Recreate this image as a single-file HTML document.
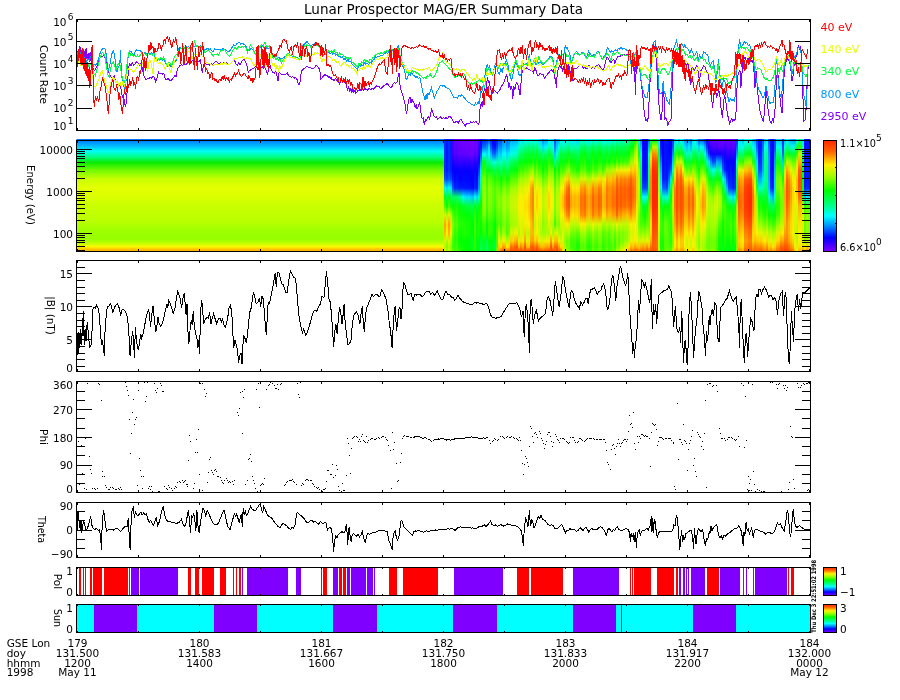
<!DOCTYPE html><html><head><meta charset="utf-8"><title>Lunar Prospector MAG/ER Summary Data</title>
<style>html,body{margin:0;padding:0;background:#fff}svg{display:block;will-change:transform}text{font-family:"DejaVu Sans","Liberation Sans",sans-serif}</style></head><body>
<svg width="900" height="700" viewBox="0 0 900 700">
<rect width="900" height="700" fill="#fff"/>
<defs>
<linearGradient id="gl" x1="0" y1="0" x2="0" y2="1">
<stop offset="0.0000" stop-color="#006eff"/>
<stop offset="0.0089" stop-color="#0078ff"/>
<stop offset="0.0649" stop-color="#00beff"/>
<stop offset="0.1102" stop-color="#00fff0"/>
<stop offset="0.1564" stop-color="#00ff8c"/>
<stop offset="0.2098" stop-color="#0aeb00"/>
<stop offset="0.2782" stop-color="#73fa00"/>
<stop offset="0.3547" stop-color="#c8ff00"/>
<stop offset="0.4311" stop-color="#e4ff00"/>
<stop offset="0.5067" stop-color="#dcff00"/>
<stop offset="0.5831" stop-color="#cbff00"/>
<stop offset="0.6578" stop-color="#c3ff00"/>
<stop offset="0.7360" stop-color="#b9ff00"/>
<stop offset="0.8089" stop-color="#a0ff00"/>
<stop offset="0.8889" stop-color="#96ff00"/>
<stop offset="0.9244" stop-color="#beff00"/>
<stop offset="0.9564" stop-color="#fafa00"/>
<stop offset="0.9778" stop-color="#ffc800"/>
<stop offset="0.9956" stop-color="#ffaf00"/>
</linearGradient>
<linearGradient id="cb" x1="0" y1="0" x2="0" y2="1">
<stop offset="0.000" stop-color="#ff2800"/>
<stop offset="0.100" stop-color="#ff6400"/>
<stop offset="0.220" stop-color="#fff000"/>
<stop offset="0.330" stop-color="#96ff00"/>
<stop offset="0.450" stop-color="#00ff00"/>
<stop offset="0.580" stop-color="#00ff82"/>
<stop offset="0.680" stop-color="#00ffff"/>
<stop offset="0.780" stop-color="#0082ff"/>
<stop offset="0.875" stop-color="#0000ff"/>
<stop offset="1.000" stop-color="#8200ff"/>
</linearGradient>
<linearGradient id="s0" x1="0" y1="0" x2="0" y2="1">
<stop offset="0.013" stop-color="#002cff"/>
<stop offset="0.071" stop-color="#002cff"/>
<stop offset="0.133" stop-color="#002cff"/>
<stop offset="0.204" stop-color="#002cff"/>
<stop offset="0.276" stop-color="#002cff"/>
<stop offset="0.356" stop-color="#0055ff"/>
<stop offset="0.436" stop-color="#00ffe1"/>
<stop offset="0.516" stop-color="#00ff1a"/>
<stop offset="0.596" stop-color="#44ff00"/>
<stop offset="0.676" stop-color="#ddf500"/>
<stop offset="0.756" stop-color="#ffa500"/>
<stop offset="0.836" stop-color="#ffbd00"/>
<stop offset="0.907" stop-color="#ddf500"/>
<stop offset="0.960" stop-color="#b7fa00"/>
<stop offset="0.996" stop-color="#caf800"/>
</linearGradient>
<linearGradient id="s1" x1="0" y1="0" x2="0" y2="1">
<stop offset="0.013" stop-color="#0018ff"/>
<stop offset="0.071" stop-color="#0018ff"/>
<stop offset="0.133" stop-color="#0018ff"/>
<stop offset="0.204" stop-color="#0018ff"/>
<stop offset="0.276" stop-color="#0018ff"/>
<stop offset="0.356" stop-color="#0041ff"/>
<stop offset="0.436" stop-color="#00dfff"/>
<stop offset="0.516" stop-color="#00ff4c"/>
<stop offset="0.596" stop-color="#06ff00"/>
<stop offset="0.676" stop-color="#adfc00"/>
<stop offset="0.756" stop-color="#ffdf00"/>
<stop offset="0.836" stop-color="#faf100"/>
<stop offset="0.907" stop-color="#adfc00"/>
<stop offset="0.960" stop-color="#83ff00"/>
<stop offset="0.996" stop-color="#9afe00"/>
</linearGradient>
<linearGradient id="s2" x1="0" y1="0" x2="0" y2="1">
<stop offset="0.013" stop-color="#002fff"/>
<stop offset="0.071" stop-color="#002fff"/>
<stop offset="0.133" stop-color="#002fff"/>
<stop offset="0.204" stop-color="#002fff"/>
<stop offset="0.276" stop-color="#002fff"/>
<stop offset="0.356" stop-color="#0058ff"/>
<stop offset="0.436" stop-color="#00ffd7"/>
<stop offset="0.516" stop-color="#00ff12"/>
<stop offset="0.596" stop-color="#4dff00"/>
<stop offset="0.676" stop-color="#e4f400"/>
<stop offset="0.756" stop-color="#ff9c00"/>
<stop offset="0.836" stop-color="#ffb300"/>
<stop offset="0.907" stop-color="#e4f400"/>
<stop offset="0.960" stop-color="#bef900"/>
<stop offset="0.996" stop-color="#d1f700"/>
</linearGradient>
<linearGradient id="s3" x1="0" y1="0" x2="0" y2="1">
<stop offset="0.013" stop-color="#001bff"/>
<stop offset="0.071" stop-color="#001bff"/>
<stop offset="0.133" stop-color="#001bff"/>
<stop offset="0.204" stop-color="#001bff"/>
<stop offset="0.276" stop-color="#001bff"/>
<stop offset="0.356" stop-color="#0044ff"/>
<stop offset="0.436" stop-color="#00e8ff"/>
<stop offset="0.516" stop-color="#00ff44"/>
<stop offset="0.596" stop-color="#0fff00"/>
<stop offset="0.676" stop-color="#b4fb00"/>
<stop offset="0.756" stop-color="#ffd700"/>
<stop offset="0.836" stop-color="#ffee00"/>
<stop offset="0.907" stop-color="#b4fb00"/>
<stop offset="0.960" stop-color="#8cff00"/>
<stop offset="0.996" stop-color="#a1fd00"/>
</linearGradient>
<linearGradient id="s4" x1="0" y1="0" x2="0" y2="1">
<stop offset="0.013" stop-color="#3f00ff"/>
<stop offset="0.071" stop-color="#3f00ff"/>
<stop offset="0.133" stop-color="#3800ff"/>
<stop offset="0.204" stop-color="#1c00ff"/>
<stop offset="0.276" stop-color="#0100ff"/>
<stop offset="0.356" stop-color="#0016ff"/>
<stop offset="0.436" stop-color="#0056ff"/>
<stop offset="0.516" stop-color="#00ff66"/>
<stop offset="0.596" stop-color="#00ff08"/>
<stop offset="0.676" stop-color="#49ff00"/>
<stop offset="0.756" stop-color="#83ff00"/>
<stop offset="0.836" stop-color="#6aff00"/>
<stop offset="0.907" stop-color="#40ff00"/>
<stop offset="0.960" stop-color="#38ff00"/>
<stop offset="0.996" stop-color="#51ff00"/>
</linearGradient>
<linearGradient id="s5" x1="0" y1="0" x2="0" y2="1">
<stop offset="0.013" stop-color="#6000ff"/>
<stop offset="0.071" stop-color="#6000ff"/>
<stop offset="0.133" stop-color="#5600ff"/>
<stop offset="0.204" stop-color="#2c00ff"/>
<stop offset="0.276" stop-color="#0300ff"/>
<stop offset="0.356" stop-color="#000aff"/>
<stop offset="0.436" stop-color="#0026ff"/>
<stop offset="0.516" stop-color="#00ff60"/>
<stop offset="0.596" stop-color="#0bff00"/>
<stop offset="0.676" stop-color="#30ff00"/>
<stop offset="0.756" stop-color="#49ff00"/>
<stop offset="0.836" stop-color="#30ff00"/>
<stop offset="0.907" stop-color="#24ff00"/>
<stop offset="0.960" stop-color="#30ff00"/>
<stop offset="0.996" stop-color="#49ff00"/>
</linearGradient>
<linearGradient id="s6" x1="0" y1="0" x2="0" y2="1">
<stop offset="0.013" stop-color="#5c00ff"/>
<stop offset="0.071" stop-color="#5c00ff"/>
<stop offset="0.133" stop-color="#5200ff"/>
<stop offset="0.204" stop-color="#2800ff"/>
<stop offset="0.276" stop-color="#0002ff"/>
<stop offset="0.356" stop-color="#000fff"/>
<stop offset="0.436" stop-color="#002bff"/>
<stop offset="0.516" stop-color="#00ff5c"/>
<stop offset="0.596" stop-color="#1aff00"/>
<stop offset="0.676" stop-color="#3fff00"/>
<stop offset="0.756" stop-color="#58ff00"/>
<stop offset="0.836" stop-color="#3fff00"/>
<stop offset="0.907" stop-color="#33ff00"/>
<stop offset="0.960" stop-color="#3fff00"/>
<stop offset="0.996" stop-color="#58ff00"/>
</linearGradient>
<linearGradient id="s7" x1="0" y1="0" x2="0" y2="1">
<stop offset="0.013" stop-color="#6700ff"/>
<stop offset="0.071" stop-color="#6700ff"/>
<stop offset="0.133" stop-color="#5c00ff"/>
<stop offset="0.204" stop-color="#3300ff"/>
<stop offset="0.276" stop-color="#0900ff"/>
<stop offset="0.356" stop-color="#0002ff"/>
<stop offset="0.436" stop-color="#001dff"/>
<stop offset="0.516" stop-color="#00ff87"/>
<stop offset="0.596" stop-color="#00ff0c"/>
<stop offset="0.676" stop-color="#16ff00"/>
<stop offset="0.756" stop-color="#2fff00"/>
<stop offset="0.836" stop-color="#16ff00"/>
<stop offset="0.907" stop-color="#0aff00"/>
<stop offset="0.960" stop-color="#16ff00"/>
<stop offset="0.996" stop-color="#2fff00"/>
</linearGradient>
<linearGradient id="s8" x1="0" y1="0" x2="0" y2="1">
<stop offset="0.013" stop-color="#6900ff"/>
<stop offset="0.071" stop-color="#6900ff"/>
<stop offset="0.133" stop-color="#5e00ff"/>
<stop offset="0.204" stop-color="#3500ff"/>
<stop offset="0.276" stop-color="#0b00ff"/>
<stop offset="0.356" stop-color="#0100ff"/>
<stop offset="0.436" stop-color="#001aff"/>
<stop offset="0.516" stop-color="#00ff9a"/>
<stop offset="0.596" stop-color="#00ff13"/>
<stop offset="0.676" stop-color="#0eff00"/>
<stop offset="0.756" stop-color="#27ff00"/>
<stop offset="0.836" stop-color="#0eff00"/>
<stop offset="0.907" stop-color="#01ff00"/>
<stop offset="0.960" stop-color="#0eff00"/>
<stop offset="0.996" stop-color="#27ff00"/>
</linearGradient>
<linearGradient id="s9" x1="0" y1="0" x2="0" y2="1">
<stop offset="0.013" stop-color="#6b00ff"/>
<stop offset="0.071" stop-color="#6b00ff"/>
<stop offset="0.133" stop-color="#6000ff"/>
<stop offset="0.204" stop-color="#3000ff"/>
<stop offset="0.276" stop-color="#0600ff"/>
<stop offset="0.356" stop-color="#0006ff"/>
<stop offset="0.436" stop-color="#0018ff"/>
<stop offset="0.516" stop-color="#00ffe9"/>
<stop offset="0.596" stop-color="#00ff24"/>
<stop offset="0.676" stop-color="#09ff00"/>
<stop offset="0.756" stop-color="#22ff00"/>
<stop offset="0.836" stop-color="#1aff00"/>
<stop offset="0.907" stop-color="#05ff00"/>
<stop offset="0.960" stop-color="#09ff00"/>
<stop offset="0.996" stop-color="#12ff00"/>
</linearGradient>
<linearGradient id="s10" x1="0" y1="0" x2="0" y2="1">
<stop offset="0.013" stop-color="#6c00ff"/>
<stop offset="0.071" stop-color="#6c00ff"/>
<stop offset="0.133" stop-color="#6100ff"/>
<stop offset="0.204" stop-color="#2d00ff"/>
<stop offset="0.276" stop-color="#0400ff"/>
<stop offset="0.356" stop-color="#0009ff"/>
<stop offset="0.436" stop-color="#0017ff"/>
<stop offset="0.516" stop-color="#00ecff"/>
<stop offset="0.596" stop-color="#00ff2d"/>
<stop offset="0.676" stop-color="#06ff00"/>
<stop offset="0.756" stop-color="#1fff00"/>
<stop offset="0.836" stop-color="#1fff00"/>
<stop offset="0.907" stop-color="#06ff00"/>
<stop offset="0.960" stop-color="#06ff00"/>
<stop offset="0.996" stop-color="#06ff00"/>
</linearGradient>
<linearGradient id="s11" x1="0" y1="0" x2="0" y2="1">
<stop offset="0.013" stop-color="#6e00ff"/>
<stop offset="0.071" stop-color="#6e00ff"/>
<stop offset="0.133" stop-color="#6400ff"/>
<stop offset="0.204" stop-color="#3000ff"/>
<stop offset="0.276" stop-color="#0600ff"/>
<stop offset="0.356" stop-color="#0005ff"/>
<stop offset="0.436" stop-color="#0013ff"/>
<stop offset="0.516" stop-color="#00e2ff"/>
<stop offset="0.596" stop-color="#00ff35"/>
<stop offset="0.676" stop-color="#00ff03"/>
<stop offset="0.756" stop-color="#15ff00"/>
<stop offset="0.836" stop-color="#15ff00"/>
<stop offset="0.907" stop-color="#00ff03"/>
<stop offset="0.960" stop-color="#00ff03"/>
<stop offset="0.996" stop-color="#00ff03"/>
</linearGradient>
<linearGradient id="s12" x1="0" y1="0" x2="0" y2="1">
<stop offset="0.013" stop-color="#6e00ff"/>
<stop offset="0.071" stop-color="#6e00ff"/>
<stop offset="0.133" stop-color="#6300ff"/>
<stop offset="0.204" stop-color="#2f00ff"/>
<stop offset="0.276" stop-color="#0600ff"/>
<stop offset="0.356" stop-color="#0006ff"/>
<stop offset="0.436" stop-color="#0014ff"/>
<stop offset="0.516" stop-color="#00e4ff"/>
<stop offset="0.596" stop-color="#00ff34"/>
<stop offset="0.676" stop-color="#00ff02"/>
<stop offset="0.756" stop-color="#17ff00"/>
<stop offset="0.836" stop-color="#17ff00"/>
<stop offset="0.907" stop-color="#00ff02"/>
<stop offset="0.960" stop-color="#00ff02"/>
<stop offset="0.996" stop-color="#00ff02"/>
</linearGradient>
<linearGradient id="s13" x1="0" y1="0" x2="0" y2="1">
<stop offset="0.013" stop-color="#7200ff"/>
<stop offset="0.071" stop-color="#7200ff"/>
<stop offset="0.133" stop-color="#6800ff"/>
<stop offset="0.204" stop-color="#3400ff"/>
<stop offset="0.276" stop-color="#0a00ff"/>
<stop offset="0.356" stop-color="#0000ff"/>
<stop offset="0.436" stop-color="#000eff"/>
<stop offset="0.516" stop-color="#00d1ff"/>
<stop offset="0.596" stop-color="#00ff43"/>
<stop offset="0.676" stop-color="#00ff11"/>
<stop offset="0.756" stop-color="#04ff00"/>
<stop offset="0.836" stop-color="#04ff00"/>
<stop offset="0.907" stop-color="#00ff11"/>
<stop offset="0.960" stop-color="#00ff11"/>
<stop offset="0.996" stop-color="#00ff11"/>
</linearGradient>
<linearGradient id="s14" x1="0" y1="0" x2="0" y2="1">
<stop offset="0.013" stop-color="#7600ff"/>
<stop offset="0.071" stop-color="#7600ff"/>
<stop offset="0.133" stop-color="#6b00ff"/>
<stop offset="0.204" stop-color="#3700ff"/>
<stop offset="0.276" stop-color="#0e00ff"/>
<stop offset="0.356" stop-color="#0300ff"/>
<stop offset="0.436" stop-color="#0009ff"/>
<stop offset="0.516" stop-color="#00c4ff"/>
<stop offset="0.596" stop-color="#00ff4e"/>
<stop offset="0.676" stop-color="#00ff1c"/>
<stop offset="0.756" stop-color="#00ff08"/>
<stop offset="0.836" stop-color="#00ff08"/>
<stop offset="0.907" stop-color="#00ff1c"/>
<stop offset="0.960" stop-color="#00ff1c"/>
<stop offset="0.996" stop-color="#00ff1c"/>
</linearGradient>
<linearGradient id="s15" x1="0" y1="0" x2="0" y2="1">
<stop offset="0.013" stop-color="#6300ff"/>
<stop offset="0.071" stop-color="#6300ff"/>
<stop offset="0.133" stop-color="#5900ff"/>
<stop offset="0.204" stop-color="#2500ff"/>
<stop offset="0.276" stop-color="#0007ff"/>
<stop offset="0.356" stop-color="#0014ff"/>
<stop offset="0.436" stop-color="#0022ff"/>
<stop offset="0.516" stop-color="#00ffef"/>
<stop offset="0.596" stop-color="#00ff11"/>
<stop offset="0.676" stop-color="#29ff00"/>
<stop offset="0.756" stop-color="#42ff00"/>
<stop offset="0.836" stop-color="#42ff00"/>
<stop offset="0.907" stop-color="#29ff00"/>
<stop offset="0.960" stop-color="#29ff00"/>
<stop offset="0.996" stop-color="#29ff00"/>
</linearGradient>
<linearGradient id="s16" x1="0" y1="0" x2="0" y2="1">
<stop offset="0.013" stop-color="#7000ff"/>
<stop offset="0.071" stop-color="#7000ff"/>
<stop offset="0.133" stop-color="#6600ff"/>
<stop offset="0.204" stop-color="#3200ff"/>
<stop offset="0.276" stop-color="#0800ff"/>
<stop offset="0.356" stop-color="#0003ff"/>
<stop offset="0.436" stop-color="#0011ff"/>
<stop offset="0.516" stop-color="#00daff"/>
<stop offset="0.596" stop-color="#00ff3c"/>
<stop offset="0.676" stop-color="#00ff0a"/>
<stop offset="0.756" stop-color="#0dff00"/>
<stop offset="0.836" stop-color="#0dff00"/>
<stop offset="0.907" stop-color="#00ff0a"/>
<stop offset="0.960" stop-color="#00ff0a"/>
<stop offset="0.996" stop-color="#00ff0a"/>
</linearGradient>
<linearGradient id="s17" x1="0" y1="0" x2="0" y2="1">
<stop offset="0.013" stop-color="#4300ff"/>
<stop offset="0.071" stop-color="#3900ff"/>
<stop offset="0.133" stop-color="#2e00ff"/>
<stop offset="0.204" stop-color="#0a00ff"/>
<stop offset="0.276" stop-color="#0031ff"/>
<stop offset="0.356" stop-color="#007dff"/>
<stop offset="0.436" stop-color="#0097ff"/>
<stop offset="0.516" stop-color="#00ffcb"/>
<stop offset="0.596" stop-color="#00ff17"/>
<stop offset="0.676" stop-color="#15ff00"/>
<stop offset="0.756" stop-color="#21ff00"/>
<stop offset="0.836" stop-color="#15ff00"/>
<stop offset="0.907" stop-color="#00ff0d"/>
<stop offset="0.960" stop-color="#00ff17"/>
<stop offset="0.996" stop-color="#00ff17"/>
</linearGradient>
<linearGradient id="s18" x1="0" y1="0" x2="0" y2="1">
<stop offset="0.013" stop-color="#1000ff"/>
<stop offset="0.071" stop-color="#0014ff"/>
<stop offset="0.133" stop-color="#004bff"/>
<stop offset="0.204" stop-color="#00a0ff"/>
<stop offset="0.276" stop-color="#00e3ff"/>
<stop offset="0.356" stop-color="#00ffaf"/>
<stop offset="0.436" stop-color="#00ff8d"/>
<stop offset="0.516" stop-color="#00ff4f"/>
<stop offset="0.596" stop-color="#0aff00"/>
<stop offset="0.676" stop-color="#1aff00"/>
<stop offset="0.756" stop-color="#0aff00"/>
<stop offset="0.836" stop-color="#00ff0c"/>
<stop offset="0.907" stop-color="#00ff3b"/>
<stop offset="0.960" stop-color="#00ff4f"/>
<stop offset="0.996" stop-color="#00ff4f"/>
</linearGradient>
<linearGradient id="s19" x1="0" y1="0" x2="0" y2="1">
<stop offset="0.013" stop-color="#0027ff"/>
<stop offset="0.071" stop-color="#006cff"/>
<stop offset="0.133" stop-color="#00f5ff"/>
<stop offset="0.204" stop-color="#00ff26"/>
<stop offset="0.276" stop-color="#1cff00"/>
<stop offset="0.356" stop-color="#67ff00"/>
<stop offset="0.436" stop-color="#80ff00"/>
<stop offset="0.516" stop-color="#80ff00"/>
<stop offset="0.596" stop-color="#80ff00"/>
<stop offset="0.676" stop-color="#67ff00"/>
<stop offset="0.756" stop-color="#35ff00"/>
<stop offset="0.836" stop-color="#1cff00"/>
<stop offset="0.907" stop-color="#00ff26"/>
<stop offset="0.960" stop-color="#00ff3a"/>
<stop offset="0.996" stop-color="#00ff3a"/>
</linearGradient>
<linearGradient id="s20" x1="0" y1="0" x2="0" y2="1">
<stop offset="0.013" stop-color="#002eff"/>
<stop offset="0.071" stop-color="#0072ff"/>
<stop offset="0.133" stop-color="#00fff5"/>
<stop offset="0.204" stop-color="#00ff16"/>
<stop offset="0.276" stop-color="#30ff00"/>
<stop offset="0.356" stop-color="#7bff00"/>
<stop offset="0.436" stop-color="#94ff00"/>
<stop offset="0.516" stop-color="#94ff00"/>
<stop offset="0.596" stop-color="#94ff00"/>
<stop offset="0.676" stop-color="#7bff00"/>
<stop offset="0.756" stop-color="#49ff00"/>
<stop offset="0.836" stop-color="#30ff00"/>
<stop offset="0.907" stop-color="#00ff16"/>
<stop offset="0.960" stop-color="#00ff2a"/>
<stop offset="0.996" stop-color="#00ff2a"/>
</linearGradient>
<linearGradient id="s21" x1="0" y1="0" x2="0" y2="1">
<stop offset="0.013" stop-color="#003bff"/>
<stop offset="0.071" stop-color="#008aff"/>
<stop offset="0.133" stop-color="#00dbff"/>
<stop offset="0.204" stop-color="#00ff7b"/>
<stop offset="0.276" stop-color="#00ff26"/>
<stop offset="0.356" stop-color="#2eff00"/>
<stop offset="0.436" stop-color="#4dff00"/>
<stop offset="0.516" stop-color="#4dff00"/>
<stop offset="0.596" stop-color="#47ff00"/>
<stop offset="0.676" stop-color="#2eff00"/>
<stop offset="0.756" stop-color="#00ff03"/>
<stop offset="0.836" stop-color="#00ff0d"/>
<stop offset="0.907" stop-color="#00ff49"/>
<stop offset="0.960" stop-color="#00ff5d"/>
<stop offset="0.996" stop-color="#00ff5d"/>
</linearGradient>
<linearGradient id="s22" x1="0" y1="0" x2="0" y2="1">
<stop offset="0.013" stop-color="#0058ff"/>
<stop offset="0.071" stop-color="#00dcff"/>
<stop offset="0.133" stop-color="#00fff3"/>
<stop offset="0.204" stop-color="#00ff83"/>
<stop offset="0.276" stop-color="#00ff0f"/>
<stop offset="0.356" stop-color="#60ff00"/>
<stop offset="0.436" stop-color="#89ff00"/>
<stop offset="0.516" stop-color="#89ff00"/>
<stop offset="0.596" stop-color="#7cff00"/>
<stop offset="0.676" stop-color="#63ff00"/>
<stop offset="0.756" stop-color="#35ff00"/>
<stop offset="0.836" stop-color="#35ff00"/>
<stop offset="0.907" stop-color="#00ff0d"/>
<stop offset="0.960" stop-color="#00ff21"/>
<stop offset="0.996" stop-color="#00ff21"/>
</linearGradient>
<linearGradient id="s23" x1="0" y1="0" x2="0" y2="1">
<stop offset="0.013" stop-color="#0021ff"/>
<stop offset="0.071" stop-color="#0057ff"/>
<stop offset="0.133" stop-color="#00b7ff"/>
<stop offset="0.204" stop-color="#00ffa5"/>
<stop offset="0.276" stop-color="#00ff21"/>
<stop offset="0.356" stop-color="#51ff00"/>
<stop offset="0.436" stop-color="#80ff00"/>
<stop offset="0.516" stop-color="#80ff00"/>
<stop offset="0.596" stop-color="#73ff00"/>
<stop offset="0.676" stop-color="#5aff00"/>
<stop offset="0.756" stop-color="#32ff00"/>
<stop offset="0.836" stop-color="#32ff00"/>
<stop offset="0.907" stop-color="#00ff05"/>
<stop offset="0.960" stop-color="#00ff19"/>
<stop offset="0.996" stop-color="#00ff19"/>
</linearGradient>
<linearGradient id="s24" x1="0" y1="0" x2="0" y2="1">
<stop offset="0.013" stop-color="#0100ff"/>
<stop offset="0.071" stop-color="#001bff"/>
<stop offset="0.133" stop-color="#006dff"/>
<stop offset="0.204" stop-color="#00ffc7"/>
<stop offset="0.276" stop-color="#00ff37"/>
<stop offset="0.356" stop-color="#38ff00"/>
<stop offset="0.436" stop-color="#6aff00"/>
<stop offset="0.516" stop-color="#6aff00"/>
<stop offset="0.596" stop-color="#5eff00"/>
<stop offset="0.676" stop-color="#45ff00"/>
<stop offset="0.756" stop-color="#1fff00"/>
<stop offset="0.836" stop-color="#1fff00"/>
<stop offset="0.907" stop-color="#00ff0f"/>
<stop offset="0.960" stop-color="#00ff23"/>
<stop offset="0.996" stop-color="#00ff1e"/>
</linearGradient>
<linearGradient id="s25" x1="0" y1="0" x2="0" y2="1">
<stop offset="0.013" stop-color="#0800ff"/>
<stop offset="0.071" stop-color="#0011ff"/>
<stop offset="0.133" stop-color="#0063ff"/>
<stop offset="0.204" stop-color="#00ffe4"/>
<stop offset="0.276" stop-color="#00ff4f"/>
<stop offset="0.356" stop-color="#1bff00"/>
<stop offset="0.436" stop-color="#4dff00"/>
<stop offset="0.516" stop-color="#4dff00"/>
<stop offset="0.596" stop-color="#40ff00"/>
<stop offset="0.676" stop-color="#27ff00"/>
<stop offset="0.756" stop-color="#02ff00"/>
<stop offset="0.836" stop-color="#02ff00"/>
<stop offset="0.907" stop-color="#00ff27"/>
<stop offset="0.960" stop-color="#00ff3b"/>
<stop offset="0.996" stop-color="#00ff2c"/>
</linearGradient>
<linearGradient id="s26" x1="0" y1="0" x2="0" y2="1">
<stop offset="0.013" stop-color="#001cff"/>
<stop offset="0.071" stop-color="#0041ff"/>
<stop offset="0.133" stop-color="#009eff"/>
<stop offset="0.204" stop-color="#00ffba"/>
<stop offset="0.276" stop-color="#00ff35"/>
<stop offset="0.356" stop-color="#35ff00"/>
<stop offset="0.436" stop-color="#6dff00"/>
<stop offset="0.516" stop-color="#7aff00"/>
<stop offset="0.596" stop-color="#70ff00"/>
<stop offset="0.676" stop-color="#57ff00"/>
<stop offset="0.756" stop-color="#35ff00"/>
<stop offset="0.836" stop-color="#4eff00"/>
<stop offset="0.907" stop-color="#45ff00"/>
<stop offset="0.960" stop-color="#4bff00"/>
<stop offset="0.996" stop-color="#70ff00"/>
</linearGradient>
<linearGradient id="s27" x1="0" y1="0" x2="0" y2="1">
<stop offset="0.013" stop-color="#0050ff"/>
<stop offset="0.071" stop-color="#0092ff"/>
<stop offset="0.133" stop-color="#00d4ff"/>
<stop offset="0.204" stop-color="#00ffb0"/>
<stop offset="0.276" stop-color="#00ff3c"/>
<stop offset="0.356" stop-color="#20ff00"/>
<stop offset="0.436" stop-color="#64ff00"/>
<stop offset="0.516" stop-color="#8aff00"/>
<stop offset="0.596" stop-color="#87ff00"/>
<stop offset="0.676" stop-color="#6eff00"/>
<stop offset="0.756" stop-color="#52ff00"/>
<stop offset="0.836" stop-color="#b6fa00"/>
<stop offset="0.907" stop-color="#edf300"/>
<stop offset="0.960" stop-color="#ffc600"/>
<stop offset="0.996" stop-color="#ffac00"/>
</linearGradient>
<linearGradient id="s28" x1="0" y1="0" x2="0" y2="1">
<stop offset="0.013" stop-color="#004aff"/>
<stop offset="0.071" stop-color="#008aff"/>
<stop offset="0.133" stop-color="#00c9ff"/>
<stop offset="0.204" stop-color="#00ffd0"/>
<stop offset="0.276" stop-color="#00ff5d"/>
<stop offset="0.356" stop-color="#00ff0c"/>
<stop offset="0.436" stop-color="#3cff00"/>
<stop offset="0.516" stop-color="#6eff00"/>
<stop offset="0.596" stop-color="#6eff00"/>
<stop offset="0.676" stop-color="#55ff00"/>
<stop offset="0.756" stop-color="#3cff00"/>
<stop offset="0.836" stop-color="#59ff00"/>
<stop offset="0.907" stop-color="#bdf900"/>
<stop offset="0.960" stop-color="#ffe300"/>
<stop offset="0.996" stop-color="#ff6200"/>
</linearGradient>
<linearGradient id="s29" x1="0" y1="0" x2="0" y2="1">
<stop offset="0.013" stop-color="#0085ff"/>
<stop offset="0.071" stop-color="#00baff"/>
<stop offset="0.133" stop-color="#00f8ff"/>
<stop offset="0.204" stop-color="#00ff9d"/>
<stop offset="0.276" stop-color="#00ff37"/>
<stop offset="0.356" stop-color="#23ff00"/>
<stop offset="0.436" stop-color="#6eff00"/>
<stop offset="0.516" stop-color="#9efe00"/>
<stop offset="0.596" stop-color="#9efe00"/>
<stop offset="0.676" stop-color="#87ff00"/>
<stop offset="0.756" stop-color="#6eff00"/>
<stop offset="0.836" stop-color="#a1fd00"/>
<stop offset="0.907" stop-color="#f7f100"/>
<stop offset="0.960" stop-color="#ff9c00"/>
<stop offset="0.996" stop-color="#ff5000"/>
</linearGradient>
<linearGradient id="s30" x1="0" y1="0" x2="0" y2="1">
<stop offset="0.013" stop-color="#0093ff"/>
<stop offset="0.071" stop-color="#00c2ff"/>
<stop offset="0.133" stop-color="#00fffd"/>
<stop offset="0.204" stop-color="#00ff91"/>
<stop offset="0.276" stop-color="#00ff31"/>
<stop offset="0.356" stop-color="#2fff00"/>
<stop offset="0.436" stop-color="#7aff00"/>
<stop offset="0.516" stop-color="#a7fd00"/>
<stop offset="0.596" stop-color="#a7fd00"/>
<stop offset="0.676" stop-color="#93ff00"/>
<stop offset="0.756" stop-color="#7aff00"/>
<stop offset="0.836" stop-color="#99ff00"/>
<stop offset="0.907" stop-color="#eff200"/>
<stop offset="0.960" stop-color="#ffa600"/>
<stop offset="0.996" stop-color="#ff5000"/>
</linearGradient>
<linearGradient id="s31" x1="0" y1="0" x2="0" y2="1">
<stop offset="0.013" stop-color="#0074ff"/>
<stop offset="0.071" stop-color="#009eff"/>
<stop offset="0.133" stop-color="#00dcff"/>
<stop offset="0.204" stop-color="#00ffb3"/>
<stop offset="0.276" stop-color="#00ff4e"/>
<stop offset="0.356" stop-color="#0eff00"/>
<stop offset="0.436" stop-color="#59ff00"/>
<stop offset="0.516" stop-color="#8bff00"/>
<stop offset="0.596" stop-color="#8bff00"/>
<stop offset="0.676" stop-color="#72ff00"/>
<stop offset="0.756" stop-color="#59ff00"/>
<stop offset="0.836" stop-color="#4dff00"/>
<stop offset="0.907" stop-color="#b4fb00"/>
<stop offset="0.960" stop-color="#ffee00"/>
<stop offset="0.996" stop-color="#ff6900"/>
</linearGradient>
<linearGradient id="s32" x1="0" y1="0" x2="0" y2="1">
<stop offset="0.013" stop-color="#0083ff"/>
<stop offset="0.071" stop-color="#00abff"/>
<stop offset="0.133" stop-color="#00eaff"/>
<stop offset="0.204" stop-color="#00ff9e"/>
<stop offset="0.276" stop-color="#00ff42"/>
<stop offset="0.356" stop-color="#1dff00"/>
<stop offset="0.436" stop-color="#68ff00"/>
<stop offset="0.516" stop-color="#99ff00"/>
<stop offset="0.596" stop-color="#9afe00"/>
<stop offset="0.676" stop-color="#82ff00"/>
<stop offset="0.756" stop-color="#69ff00"/>
<stop offset="0.836" stop-color="#68ff00"/>
<stop offset="0.907" stop-color="#c6f800"/>
<stop offset="0.960" stop-color="#ffd800"/>
<stop offset="0.996" stop-color="#ff6400"/>
</linearGradient>
<linearGradient id="s33" x1="0" y1="0" x2="0" y2="1">
<stop offset="0.013" stop-color="#00aeff"/>
<stop offset="0.071" stop-color="#00ddff"/>
<stop offset="0.133" stop-color="#00ffe3"/>
<stop offset="0.204" stop-color="#00ff67"/>
<stop offset="0.276" stop-color="#00ff18"/>
<stop offset="0.356" stop-color="#4eff00"/>
<stop offset="0.436" stop-color="#98ff00"/>
<stop offset="0.516" stop-color="#bef900"/>
<stop offset="0.596" stop-color="#c2f900"/>
<stop offset="0.676" stop-color="#affb00"/>
<stop offset="0.756" stop-color="#9cfe00"/>
<stop offset="0.836" stop-color="#d0f700"/>
<stop offset="0.907" stop-color="#ffc900"/>
<stop offset="0.960" stop-color="#ff6c00"/>
<stop offset="0.996" stop-color="#ff4f00"/>
</linearGradient>
<linearGradient id="s34" x1="0" y1="0" x2="0" y2="1">
<stop offset="0.013" stop-color="#00aaff"/>
<stop offset="0.071" stop-color="#00dfff"/>
<stop offset="0.133" stop-color="#00ffe0"/>
<stop offset="0.204" stop-color="#00ff5a"/>
<stop offset="0.276" stop-color="#00ff13"/>
<stop offset="0.356" stop-color="#51ff00"/>
<stop offset="0.436" stop-color="#9afe00"/>
<stop offset="0.516" stop-color="#c1f900"/>
<stop offset="0.596" stop-color="#c6f800"/>
<stop offset="0.676" stop-color="#b3fb00"/>
<stop offset="0.756" stop-color="#a0fe00"/>
<stop offset="0.836" stop-color="#ccf700"/>
<stop offset="0.907" stop-color="#ffd400"/>
<stop offset="0.960" stop-color="#ff7700"/>
<stop offset="0.996" stop-color="#ff5100"/>
</linearGradient>
<linearGradient id="s35" x1="0" y1="0" x2="0" y2="1">
<stop offset="0.013" stop-color="#00acff"/>
<stop offset="0.071" stop-color="#00e7ff"/>
<stop offset="0.133" stop-color="#00ffd8"/>
<stop offset="0.204" stop-color="#00ff4a"/>
<stop offset="0.276" stop-color="#00ff0a"/>
<stop offset="0.356" stop-color="#59ff00"/>
<stop offset="0.436" stop-color="#a0fe00"/>
<stop offset="0.516" stop-color="#c7f800"/>
<stop offset="0.596" stop-color="#cff700"/>
<stop offset="0.676" stop-color="#bcfa00"/>
<stop offset="0.756" stop-color="#a9fc00"/>
<stop offset="0.836" stop-color="#e8f300"/>
<stop offset="0.907" stop-color="#ffb700"/>
<stop offset="0.960" stop-color="#ff5f00"/>
<stop offset="0.996" stop-color="#ff5000"/>
</linearGradient>
<linearGradient id="s36" x1="0" y1="0" x2="0" y2="1">
<stop offset="0.013" stop-color="#00a5ff"/>
<stop offset="0.071" stop-color="#00eaff"/>
<stop offset="0.133" stop-color="#00ffd1"/>
<stop offset="0.204" stop-color="#00ff49"/>
<stop offset="0.276" stop-color="#00ff0c"/>
<stop offset="0.356" stop-color="#55ff00"/>
<stop offset="0.436" stop-color="#9efe00"/>
<stop offset="0.516" stop-color="#c3f900"/>
<stop offset="0.596" stop-color="#ccf700"/>
<stop offset="0.676" stop-color="#bafa00"/>
<stop offset="0.756" stop-color="#a7fd00"/>
<stop offset="0.836" stop-color="#ffef00"/>
<stop offset="0.907" stop-color="#ffa200"/>
<stop offset="0.960" stop-color="#ff5400"/>
<stop offset="0.996" stop-color="#ff5800"/>
</linearGradient>
<linearGradient id="s37" x1="0" y1="0" x2="0" y2="1">
<stop offset="0.013" stop-color="#00ddff"/>
<stop offset="0.071" stop-color="#00ffd0"/>
<stop offset="0.133" stop-color="#00ff83"/>
<stop offset="0.204" stop-color="#00ff1f"/>
<stop offset="0.276" stop-color="#29ff00"/>
<stop offset="0.356" stop-color="#8dff00"/>
<stop offset="0.436" stop-color="#c8f800"/>
<stop offset="0.516" stop-color="#ebf300"/>
<stop offset="0.596" stop-color="#f4f200"/>
<stop offset="0.676" stop-color="#e5f400"/>
<stop offset="0.756" stop-color="#d2f600"/>
<stop offset="0.836" stop-color="#aafc00"/>
<stop offset="0.907" stop-color="#e2f400"/>
<stop offset="0.960" stop-color="#ffb600"/>
<stop offset="0.996" stop-color="#ff4800"/>
</linearGradient>
<linearGradient id="s38" x1="0" y1="0" x2="0" y2="1">
<stop offset="0.013" stop-color="#00f2ff"/>
<stop offset="0.071" stop-color="#00ffae"/>
<stop offset="0.133" stop-color="#00ff60"/>
<stop offset="0.204" stop-color="#00ff10"/>
<stop offset="0.276" stop-color="#3eff00"/>
<stop offset="0.356" stop-color="#9ffe00"/>
<stop offset="0.436" stop-color="#d9f500"/>
<stop offset="0.516" stop-color="#f9f100"/>
<stop offset="0.596" stop-color="#ffec00"/>
<stop offset="0.676" stop-color="#f5f100"/>
<stop offset="0.756" stop-color="#e2f400"/>
<stop offset="0.836" stop-color="#ddf500"/>
<stop offset="0.907" stop-color="#ffdd00"/>
<stop offset="0.960" stop-color="#ff8000"/>
<stop offset="0.996" stop-color="#ff4800"/>
</linearGradient>
<linearGradient id="s39" x1="0" y1="0" x2="0" y2="1">
<stop offset="0.013" stop-color="#00e6ff"/>
<stop offset="0.071" stop-color="#00ffae"/>
<stop offset="0.133" stop-color="#00ff59"/>
<stop offset="0.204" stop-color="#00ff1d"/>
<stop offset="0.276" stop-color="#32ff00"/>
<stop offset="0.356" stop-color="#96ff00"/>
<stop offset="0.436" stop-color="#cff700"/>
<stop offset="0.516" stop-color="#edf300"/>
<stop offset="0.596" stop-color="#f6f100"/>
<stop offset="0.676" stop-color="#ecf300"/>
<stop offset="0.756" stop-color="#d9f500"/>
<stop offset="0.836" stop-color="#c4f800"/>
<stop offset="0.907" stop-color="#eef200"/>
<stop offset="0.960" stop-color="#ffa700"/>
<stop offset="0.996" stop-color="#ff5900"/>
</linearGradient>
<linearGradient id="s40" x1="0" y1="0" x2="0" y2="1">
<stop offset="0.013" stop-color="#00fff6"/>
<stop offset="0.071" stop-color="#00ff86"/>
<stop offset="0.133" stop-color="#00ff35"/>
<stop offset="0.204" stop-color="#00ff03"/>
<stop offset="0.276" stop-color="#54ff00"/>
<stop offset="0.356" stop-color="#b0fb00"/>
<stop offset="0.436" stop-color="#e9f300"/>
<stop offset="0.516" stop-color="#ffe800"/>
<stop offset="0.596" stop-color="#ffdc00"/>
<stop offset="0.676" stop-color="#ffe800"/>
<stop offset="0.756" stop-color="#f3f200"/>
<stop offset="0.836" stop-color="#ffcd00"/>
<stop offset="0.907" stop-color="#ff9e00"/>
<stop offset="0.960" stop-color="#ff5200"/>
<stop offset="0.996" stop-color="#ff4e00"/>
</linearGradient>
<linearGradient id="s41" x1="0" y1="0" x2="0" y2="1">
<stop offset="0.013" stop-color="#00fffd"/>
<stop offset="0.071" stop-color="#00ff8c"/>
<stop offset="0.133" stop-color="#00ff3a"/>
<stop offset="0.204" stop-color="#00ff08"/>
<stop offset="0.276" stop-color="#4dff00"/>
<stop offset="0.356" stop-color="#abfc00"/>
<stop offset="0.436" stop-color="#e4f400"/>
<stop offset="0.516" stop-color="#ffee00"/>
<stop offset="0.596" stop-color="#ffe200"/>
<stop offset="0.676" stop-color="#ffee00"/>
<stop offset="0.756" stop-color="#eef200"/>
<stop offset="0.836" stop-color="#c0f900"/>
<stop offset="0.907" stop-color="#e6f400"/>
<stop offset="0.960" stop-color="#ffb100"/>
<stop offset="0.996" stop-color="#ff5100"/>
</linearGradient>
<linearGradient id="s42" x1="0" y1="0" x2="0" y2="1">
<stop offset="0.013" stop-color="#00ffe6"/>
<stop offset="0.071" stop-color="#00ff78"/>
<stop offset="0.133" stop-color="#00ff28"/>
<stop offset="0.204" stop-color="#0cff00"/>
<stop offset="0.276" stop-color="#64ff00"/>
<stop offset="0.356" stop-color="#bcfa00"/>
<stop offset="0.436" stop-color="#f5f100"/>
<stop offset="0.516" stop-color="#ffd900"/>
<stop offset="0.596" stop-color="#ffcd00"/>
<stop offset="0.676" stop-color="#ffd900"/>
<stop offset="0.756" stop-color="#fff000"/>
<stop offset="0.836" stop-color="#b6fa00"/>
<stop offset="0.907" stop-color="#dcf500"/>
<stop offset="0.960" stop-color="#ffbe00"/>
<stop offset="0.996" stop-color="#ff4600"/>
</linearGradient>
<linearGradient id="s43" x1="0" y1="0" x2="0" y2="1">
<stop offset="0.013" stop-color="#00fcff"/>
<stop offset="0.071" stop-color="#00ff85"/>
<stop offset="0.133" stop-color="#00ff3e"/>
<stop offset="0.204" stop-color="#00ff02"/>
<stop offset="0.276" stop-color="#7aff00"/>
<stop offset="0.356" stop-color="#f3f200"/>
<stop offset="0.436" stop-color="#ffad00"/>
<stop offset="0.516" stop-color="#ffa100"/>
<stop offset="0.596" stop-color="#ffa100"/>
<stop offset="0.676" stop-color="#ffad00"/>
<stop offset="0.756" stop-color="#ffc400"/>
<stop offset="0.836" stop-color="#ffbb00"/>
<stop offset="0.907" stop-color="#ffa400"/>
<stop offset="0.960" stop-color="#ff5b00"/>
<stop offset="0.996" stop-color="#ff5300"/>
</linearGradient>
<linearGradient id="s44" x1="0" y1="0" x2="0" y2="1">
<stop offset="0.013" stop-color="#00ffe2"/>
<stop offset="0.071" stop-color="#00ff6a"/>
<stop offset="0.133" stop-color="#00ff24"/>
<stop offset="0.204" stop-color="#1dff00"/>
<stop offset="0.276" stop-color="#99ff00"/>
<stop offset="0.356" stop-color="#ffe000"/>
<stop offset="0.436" stop-color="#ff8e00"/>
<stop offset="0.516" stop-color="#ff8300"/>
<stop offset="0.596" stop-color="#ff8300"/>
<stop offset="0.676" stop-color="#ff8e00"/>
<stop offset="0.756" stop-color="#ffa600"/>
<stop offset="0.836" stop-color="#ffb600"/>
<stop offset="0.907" stop-color="#ff9f00"/>
<stop offset="0.960" stop-color="#ff5800"/>
<stop offset="0.996" stop-color="#ff4400"/>
</linearGradient>
<linearGradient id="s45" x1="0" y1="0" x2="0" y2="1">
<stop offset="0.013" stop-color="#00f8ff"/>
<stop offset="0.071" stop-color="#00ff96"/>
<stop offset="0.133" stop-color="#00ff42"/>
<stop offset="0.204" stop-color="#00ff10"/>
<stop offset="0.276" stop-color="#44ff00"/>
<stop offset="0.356" stop-color="#9afe00"/>
<stop offset="0.436" stop-color="#d3f600"/>
<stop offset="0.516" stop-color="#e6f400"/>
<stop offset="0.596" stop-color="#e6f400"/>
<stop offset="0.676" stop-color="#d3f600"/>
<stop offset="0.756" stop-color="#c0f900"/>
<stop offset="0.836" stop-color="#dbf500"/>
<stop offset="0.907" stop-color="#ffd600"/>
<stop offset="0.960" stop-color="#ff7900"/>
<stop offset="0.996" stop-color="#ff5000"/>
</linearGradient>
<linearGradient id="s46" x1="0" y1="0" x2="0" y2="1">
<stop offset="0.013" stop-color="#00ffda"/>
<stop offset="0.071" stop-color="#00ff71"/>
<stop offset="0.133" stop-color="#00ff1c"/>
<stop offset="0.204" stop-color="#22ff00"/>
<stop offset="0.276" stop-color="#73ff00"/>
<stop offset="0.356" stop-color="#c3f900"/>
<stop offset="0.436" stop-color="#ffed00"/>
<stop offset="0.516" stop-color="#ffd300"/>
<stop offset="0.596" stop-color="#ffd300"/>
<stop offset="0.676" stop-color="#ffed00"/>
<stop offset="0.756" stop-color="#ecf300"/>
<stop offset="0.836" stop-color="#f8f100"/>
<stop offset="0.907" stop-color="#ffb800"/>
<stop offset="0.960" stop-color="#ff5f00"/>
<stop offset="0.996" stop-color="#ff3900"/>
</linearGradient>
<linearGradient id="s47" x1="0" y1="0" x2="0" y2="1">
<stop offset="0.013" stop-color="#00e2ff"/>
<stop offset="0.071" stop-color="#00ffb4"/>
<stop offset="0.133" stop-color="#00ff4b"/>
<stop offset="0.204" stop-color="#00ff0a"/>
<stop offset="0.276" stop-color="#38ff00"/>
<stop offset="0.356" stop-color="#9ffe00"/>
<stop offset="0.436" stop-color="#e7f300"/>
<stop offset="0.516" stop-color="#ffee00"/>
<stop offset="0.596" stop-color="#ffee00"/>
<stop offset="0.676" stop-color="#e7f300"/>
<stop offset="0.756" stop-color="#cdf700"/>
<stop offset="0.836" stop-color="#d9f500"/>
<stop offset="0.907" stop-color="#ffea00"/>
<stop offset="0.960" stop-color="#ff8d00"/>
<stop offset="0.996" stop-color="#ff5500"/>
</linearGradient>
<linearGradient id="s48" x1="0" y1="0" x2="0" y2="1">
<stop offset="0.013" stop-color="#00d7ff"/>
<stop offset="0.071" stop-color="#00ffc9"/>
<stop offset="0.133" stop-color="#00ff4a"/>
<stop offset="0.204" stop-color="#04ff00"/>
<stop offset="0.276" stop-color="#3cff00"/>
<stop offset="0.356" stop-color="#9efe00"/>
<stop offset="0.436" stop-color="#e6f400"/>
<stop offset="0.516" stop-color="#ffef00"/>
<stop offset="0.596" stop-color="#ffef00"/>
<stop offset="0.676" stop-color="#e6f400"/>
<stop offset="0.756" stop-color="#cbf700"/>
<stop offset="0.836" stop-color="#b0fb00"/>
<stop offset="0.907" stop-color="#e2f400"/>
<stop offset="0.960" stop-color="#ffb600"/>
<stop offset="0.996" stop-color="#ff5000"/>
</linearGradient>
<linearGradient id="s49" x1="0" y1="0" x2="0" y2="1">
<stop offset="0.013" stop-color="#0088ff"/>
<stop offset="0.071" stop-color="#00d9ff"/>
<stop offset="0.133" stop-color="#00ff7b"/>
<stop offset="0.204" stop-color="#00ff1e"/>
<stop offset="0.276" stop-color="#06ff00"/>
<stop offset="0.356" stop-color="#51ff00"/>
<stop offset="0.436" stop-color="#9ffe00"/>
<stop offset="0.516" stop-color="#b5fb00"/>
<stop offset="0.596" stop-color="#b5fb00"/>
<stop offset="0.676" stop-color="#9ffe00"/>
<stop offset="0.756" stop-color="#86ff00"/>
<stop offset="0.836" stop-color="#98ff00"/>
<stop offset="0.907" stop-color="#e2f400"/>
<stop offset="0.960" stop-color="#ffb600"/>
<stop offset="0.996" stop-color="#ff6400"/>
</linearGradient>
<linearGradient id="s50" x1="0" y1="0" x2="0" y2="1">
<stop offset="0.013" stop-color="#00a7ff"/>
<stop offset="0.071" stop-color="#00f5ff"/>
<stop offset="0.133" stop-color="#00ff5f"/>
<stop offset="0.204" stop-color="#00ff00"/>
<stop offset="0.276" stop-color="#2cff00"/>
<stop offset="0.356" stop-color="#70ff00"/>
<stop offset="0.436" stop-color="#b5fb00"/>
<stop offset="0.516" stop-color="#caf800"/>
<stop offset="0.596" stop-color="#caf800"/>
<stop offset="0.676" stop-color="#b7fa00"/>
<stop offset="0.756" stop-color="#9ffe00"/>
<stop offset="0.836" stop-color="#98ff00"/>
<stop offset="0.907" stop-color="#e9f300"/>
<stop offset="0.960" stop-color="#ffad00"/>
<stop offset="0.996" stop-color="#ff5200"/>
</linearGradient>
<linearGradient id="s51" x1="0" y1="0" x2="0" y2="1">
<stop offset="0.013" stop-color="#00aaff"/>
<stop offset="0.071" stop-color="#00feff"/>
<stop offset="0.133" stop-color="#00ff67"/>
<stop offset="0.204" stop-color="#00ff12"/>
<stop offset="0.276" stop-color="#22ff00"/>
<stop offset="0.356" stop-color="#73ff00"/>
<stop offset="0.436" stop-color="#bcfa00"/>
<stop offset="0.516" stop-color="#d6f600"/>
<stop offset="0.596" stop-color="#d6f600"/>
<stop offset="0.676" stop-color="#c3f900"/>
<stop offset="0.756" stop-color="#a1fd00"/>
<stop offset="0.836" stop-color="#b0fb00"/>
<stop offset="0.907" stop-color="#f8f100"/>
<stop offset="0.960" stop-color="#ff9c00"/>
<stop offset="0.996" stop-color="#ff5d00"/>
</linearGradient>
<linearGradient id="s52" x1="0" y1="0" x2="0" y2="1">
<stop offset="0.013" stop-color="#00fdff"/>
<stop offset="0.071" stop-color="#00ffad"/>
<stop offset="0.133" stop-color="#00ff2f"/>
<stop offset="0.204" stop-color="#2aff00"/>
<stop offset="0.276" stop-color="#6fff00"/>
<stop offset="0.356" stop-color="#bbfa00"/>
<stop offset="0.436" stop-color="#fbf100"/>
<stop offset="0.516" stop-color="#ffd500"/>
<stop offset="0.596" stop-color="#ffd500"/>
<stop offset="0.676" stop-color="#ffef00"/>
<stop offset="0.756" stop-color="#daf500"/>
<stop offset="0.836" stop-color="#a5fd00"/>
<stop offset="0.907" stop-color="#edf300"/>
<stop offset="0.960" stop-color="#ffa900"/>
<stop offset="0.996" stop-color="#ff3e00"/>
</linearGradient>
<linearGradient id="s53" x1="0" y1="0" x2="0" y2="1">
<stop offset="0.013" stop-color="#00eaff"/>
<stop offset="0.071" stop-color="#00ffc6"/>
<stop offset="0.133" stop-color="#00ff48"/>
<stop offset="0.204" stop-color="#0aff00"/>
<stop offset="0.276" stop-color="#5bff00"/>
<stop offset="0.356" stop-color="#acfc00"/>
<stop offset="0.436" stop-color="#e8f300"/>
<stop offset="0.516" stop-color="#fdf000"/>
<stop offset="0.596" stop-color="#fdf000"/>
<stop offset="0.676" stop-color="#e3f400"/>
<stop offset="0.756" stop-color="#bdf900"/>
<stop offset="0.836" stop-color="#f3f200"/>
<stop offset="0.907" stop-color="#ff9b00"/>
<stop offset="0.960" stop-color="#ff5000"/>
<stop offset="0.996" stop-color="#ff4d00"/>
</linearGradient>
<linearGradient id="s54" x1="0" y1="0" x2="0" y2="1">
<stop offset="0.013" stop-color="#00e5ff"/>
<stop offset="0.071" stop-color="#00ffdb"/>
<stop offset="0.133" stop-color="#00ff6a"/>
<stop offset="0.204" stop-color="#00ff09"/>
<stop offset="0.276" stop-color="#66ff00"/>
<stop offset="0.356" stop-color="#affb00"/>
<stop offset="0.436" stop-color="#e1f400"/>
<stop offset="0.516" stop-color="#f4f200"/>
<stop offset="0.596" stop-color="#f4f200"/>
<stop offset="0.676" stop-color="#daf500"/>
<stop offset="0.756" stop-color="#b6fa00"/>
<stop offset="0.836" stop-color="#9efe00"/>
<stop offset="0.907" stop-color="#f4f200"/>
<stop offset="0.960" stop-color="#ffa000"/>
<stop offset="0.996" stop-color="#ff4100"/>
</linearGradient>
<linearGradient id="s55" x1="0" y1="0" x2="0" y2="1">
<stop offset="0.013" stop-color="#004dff"/>
<stop offset="0.071" stop-color="#0076ff"/>
<stop offset="0.133" stop-color="#00c8ff"/>
<stop offset="0.204" stop-color="#00ff90"/>
<stop offset="0.276" stop-color="#00ff0b"/>
<stop offset="0.356" stop-color="#37ff00"/>
<stop offset="0.436" stop-color="#66ff00"/>
<stop offset="0.516" stop-color="#7fff00"/>
<stop offset="0.596" stop-color="#7fff00"/>
<stop offset="0.676" stop-color="#63ff00"/>
<stop offset="0.756" stop-color="#3aff00"/>
<stop offset="0.836" stop-color="#d3f600"/>
<stop offset="0.907" stop-color="#ffbc00"/>
<stop offset="0.960" stop-color="#ff6100"/>
<stop offset="0.996" stop-color="#ff6300"/>
</linearGradient>
<linearGradient id="s56" x1="0" y1="0" x2="0" y2="1">
<stop offset="0.013" stop-color="#00a8ff"/>
<stop offset="0.071" stop-color="#00d0ff"/>
<stop offset="0.133" stop-color="#00ffe0"/>
<stop offset="0.204" stop-color="#00ff50"/>
<stop offset="0.276" stop-color="#38ff00"/>
<stop offset="0.356" stop-color="#7dff00"/>
<stop offset="0.436" stop-color="#a9fc00"/>
<stop offset="0.516" stop-color="#bff900"/>
<stop offset="0.596" stop-color="#bff900"/>
<stop offset="0.676" stop-color="#acfc00"/>
<stop offset="0.756" stop-color="#8aff00"/>
<stop offset="0.836" stop-color="#dff500"/>
<stop offset="0.907" stop-color="#ffb500"/>
<stop offset="0.960" stop-color="#ff5d00"/>
<stop offset="0.996" stop-color="#ff3e00"/>
</linearGradient>
<linearGradient id="s57" x1="0" y1="0" x2="0" y2="1">
<stop offset="0.013" stop-color="#00b5ff"/>
<stop offset="0.071" stop-color="#00fcff"/>
<stop offset="0.133" stop-color="#00ff94"/>
<stop offset="0.204" stop-color="#00ff46"/>
<stop offset="0.276" stop-color="#07ff00"/>
<stop offset="0.356" stop-color="#58ff00"/>
<stop offset="0.436" stop-color="#a0fe00"/>
<stop offset="0.516" stop-color="#bafa00"/>
<stop offset="0.596" stop-color="#bafa00"/>
<stop offset="0.676" stop-color="#a7fd00"/>
<stop offset="0.756" stop-color="#7eff00"/>
<stop offset="0.836" stop-color="#aefc00"/>
<stop offset="0.907" stop-color="#f6f100"/>
<stop offset="0.960" stop-color="#ff9e00"/>
<stop offset="0.996" stop-color="#ff6600"/>
</linearGradient>
<linearGradient id="s58" x1="0" y1="0" x2="0" y2="1">
<stop offset="0.013" stop-color="#00ffeb"/>
<stop offset="0.071" stop-color="#00ff94"/>
<stop offset="0.133" stop-color="#00ff2c"/>
<stop offset="0.204" stop-color="#07ff00"/>
<stop offset="0.276" stop-color="#4cff00"/>
<stop offset="0.356" stop-color="#acfc00"/>
<stop offset="0.436" stop-color="#f1f200"/>
<stop offset="0.516" stop-color="#ffdb00"/>
<stop offset="0.596" stop-color="#ffdb00"/>
<stop offset="0.676" stop-color="#f8f100"/>
<stop offset="0.756" stop-color="#cef700"/>
<stop offset="0.836" stop-color="#9ffe00"/>
<stop offset="0.907" stop-color="#ccf700"/>
<stop offset="0.960" stop-color="#ffdc00"/>
<stop offset="0.996" stop-color="#ff6600"/>
</linearGradient>
<linearGradient id="s59" x1="0" y1="0" x2="0" y2="1">
<stop offset="0.013" stop-color="#00f3ff"/>
<stop offset="0.071" stop-color="#00ffb3"/>
<stop offset="0.133" stop-color="#00ff45"/>
<stop offset="0.204" stop-color="#00ff13"/>
<stop offset="0.276" stop-color="#39ff00"/>
<stop offset="0.356" stop-color="#b6fa00"/>
<stop offset="0.436" stop-color="#ffef00"/>
<stop offset="0.516" stop-color="#ffc300"/>
<stop offset="0.596" stop-color="#ffc300"/>
<stop offset="0.676" stop-color="#ffec00"/>
<stop offset="0.756" stop-color="#cef700"/>
<stop offset="0.836" stop-color="#dff500"/>
<stop offset="0.907" stop-color="#e1f400"/>
<stop offset="0.960" stop-color="#ffda00"/>
<stop offset="0.996" stop-color="#ffdb00"/>
</linearGradient>
<linearGradient id="s60" x1="0" y1="0" x2="0" y2="1">
<stop offset="0.013" stop-color="#00fbff"/>
<stop offset="0.071" stop-color="#00ffac"/>
<stop offset="0.133" stop-color="#00ff3f"/>
<stop offset="0.204" stop-color="#00ff0b"/>
<stop offset="0.276" stop-color="#53ff00"/>
<stop offset="0.356" stop-color="#dff500"/>
<stop offset="0.436" stop-color="#ffba00"/>
<stop offset="0.516" stop-color="#ff8e00"/>
<stop offset="0.596" stop-color="#ff8e00"/>
<stop offset="0.676" stop-color="#ffc000"/>
<stop offset="0.756" stop-color="#e4f400"/>
<stop offset="0.836" stop-color="#abfc00"/>
<stop offset="0.907" stop-color="#8dff00"/>
<stop offset="0.960" stop-color="#abfc00"/>
<stop offset="0.996" stop-color="#d1f700"/>
</linearGradient>
<linearGradient id="s61" x1="0" y1="0" x2="0" y2="1">
<stop offset="0.013" stop-color="#00fff3"/>
<stop offset="0.071" stop-color="#00ff9b"/>
<stop offset="0.133" stop-color="#00ff32"/>
<stop offset="0.204" stop-color="#09ff00"/>
<stop offset="0.276" stop-color="#7dff00"/>
<stop offset="0.356" stop-color="#ffd900"/>
<stop offset="0.436" stop-color="#ff7c00"/>
<stop offset="0.516" stop-color="#ff5d00"/>
<stop offset="0.596" stop-color="#ff5d00"/>
<stop offset="0.676" stop-color="#ff8d00"/>
<stop offset="0.756" stop-color="#faf100"/>
<stop offset="0.836" stop-color="#a4fd00"/>
<stop offset="0.907" stop-color="#6aff00"/>
<stop offset="0.960" stop-color="#76ff00"/>
<stop offset="0.996" stop-color="#9afe00"/>
</linearGradient>
<linearGradient id="s62" x1="0" y1="0" x2="0" y2="1">
<stop offset="0.013" stop-color="#00ffd6"/>
<stop offset="0.071" stop-color="#00ff7d"/>
<stop offset="0.133" stop-color="#00ff19"/>
<stop offset="0.204" stop-color="#2fff00"/>
<stop offset="0.276" stop-color="#9bfe00"/>
<stop offset="0.356" stop-color="#ffc100"/>
<stop offset="0.436" stop-color="#ff6400"/>
<stop offset="0.516" stop-color="#ff5100"/>
<stop offset="0.596" stop-color="#ff5100"/>
<stop offset="0.676" stop-color="#ff7600"/>
<stop offset="0.756" stop-color="#ffe400"/>
<stop offset="0.836" stop-color="#b3fb00"/>
<stop offset="0.907" stop-color="#77ff00"/>
<stop offset="0.960" stop-color="#77ff00"/>
<stop offset="0.996" stop-color="#90ff00"/>
</linearGradient>
<linearGradient id="s63" x1="0" y1="0" x2="0" y2="1">
<stop offset="0.013" stop-color="#00ebff"/>
<stop offset="0.071" stop-color="#00ffb3"/>
<stop offset="0.133" stop-color="#00ff45"/>
<stop offset="0.204" stop-color="#00ff01"/>
<stop offset="0.276" stop-color="#4cff00"/>
<stop offset="0.356" stop-color="#ccf700"/>
<stop offset="0.436" stop-color="#ffd100"/>
<stop offset="0.516" stop-color="#ffa600"/>
<stop offset="0.596" stop-color="#ffa600"/>
<stop offset="0.676" stop-color="#ffd700"/>
<stop offset="0.756" stop-color="#c2f900"/>
<stop offset="0.836" stop-color="#78ff00"/>
<stop offset="0.907" stop-color="#40ff00"/>
<stop offset="0.960" stop-color="#40ff00"/>
<stop offset="0.996" stop-color="#59ff00"/>
</linearGradient>
<linearGradient id="s64" x1="0" y1="0" x2="0" y2="1">
<stop offset="0.013" stop-color="#00e9ff"/>
<stop offset="0.071" stop-color="#00ffb0"/>
<stop offset="0.133" stop-color="#00ff45"/>
<stop offset="0.204" stop-color="#00ff02"/>
<stop offset="0.276" stop-color="#3cff00"/>
<stop offset="0.356" stop-color="#b3fb00"/>
<stop offset="0.436" stop-color="#ffeb00"/>
<stop offset="0.516" stop-color="#ffbc00"/>
<stop offset="0.596" stop-color="#ffbc00"/>
<stop offset="0.676" stop-color="#ffe800"/>
<stop offset="0.756" stop-color="#b8fa00"/>
<stop offset="0.836" stop-color="#72ff00"/>
<stop offset="0.907" stop-color="#40ff00"/>
<stop offset="0.960" stop-color="#3cff00"/>
<stop offset="0.996" stop-color="#55ff00"/>
</linearGradient>
<linearGradient id="s65" x1="0" y1="0" x2="0" y2="1">
<stop offset="0.013" stop-color="#00edff"/>
<stop offset="0.071" stop-color="#00ffa9"/>
<stop offset="0.133" stop-color="#00ff44"/>
<stop offset="0.204" stop-color="#00ff06"/>
<stop offset="0.276" stop-color="#37ff00"/>
<stop offset="0.356" stop-color="#b4fb00"/>
<stop offset="0.436" stop-color="#ffe100"/>
<stop offset="0.516" stop-color="#ffb200"/>
<stop offset="0.596" stop-color="#ffb200"/>
<stop offset="0.676" stop-color="#ffd800"/>
<stop offset="0.756" stop-color="#c2f900"/>
<stop offset="0.836" stop-color="#72ff00"/>
<stop offset="0.907" stop-color="#40ff00"/>
<stop offset="0.960" stop-color="#37ff00"/>
<stop offset="0.996" stop-color="#50ff00"/>
</linearGradient>
<linearGradient id="s66" x1="0" y1="0" x2="0" y2="1">
<stop offset="0.013" stop-color="#00d8ff"/>
<stop offset="0.071" stop-color="#00ffba"/>
<stop offset="0.133" stop-color="#00ff58"/>
<stop offset="0.204" stop-color="#00ff1e"/>
<stop offset="0.276" stop-color="#19ff00"/>
<stop offset="0.356" stop-color="#a2fd00"/>
<stop offset="0.436" stop-color="#ffef00"/>
<stop offset="0.516" stop-color="#ffc000"/>
<stop offset="0.596" stop-color="#ffc000"/>
<stop offset="0.676" stop-color="#ffe000"/>
<stop offset="0.756" stop-color="#bafa00"/>
<stop offset="0.836" stop-color="#5bff00"/>
<stop offset="0.907" stop-color="#29ff00"/>
<stop offset="0.960" stop-color="#19ff00"/>
<stop offset="0.996" stop-color="#32ff00"/>
</linearGradient>
<linearGradient id="s67" x1="0" y1="0" x2="0" y2="1">
<stop offset="0.013" stop-color="#00e2ff"/>
<stop offset="0.071" stop-color="#00ffad"/>
<stop offset="0.133" stop-color="#00ff52"/>
<stop offset="0.204" stop-color="#00ff1e"/>
<stop offset="0.276" stop-color="#19ff00"/>
<stop offset="0.356" stop-color="#a7fd00"/>
<stop offset="0.436" stop-color="#ffe000"/>
<stop offset="0.516" stop-color="#ffb100"/>
<stop offset="0.596" stop-color="#ffb100"/>
<stop offset="0.676" stop-color="#ffcb00"/>
<stop offset="0.756" stop-color="#c8f800"/>
<stop offset="0.836" stop-color="#61ff00"/>
<stop offset="0.907" stop-color="#2fff00"/>
<stop offset="0.960" stop-color="#19ff00"/>
<stop offset="0.996" stop-color="#32ff00"/>
</linearGradient>
<linearGradient id="s68" x1="0" y1="0" x2="0" y2="1">
<stop offset="0.013" stop-color="#00ffdc"/>
<stop offset="0.071" stop-color="#00ff6d"/>
<stop offset="0.133" stop-color="#00ff1f"/>
<stop offset="0.204" stop-color="#15ff00"/>
<stop offset="0.276" stop-color="#54ff00"/>
<stop offset="0.356" stop-color="#d6f600"/>
<stop offset="0.436" stop-color="#ffa000"/>
<stop offset="0.516" stop-color="#ff7300"/>
<stop offset="0.596" stop-color="#ff7300"/>
<stop offset="0.676" stop-color="#ff8b00"/>
<stop offset="0.756" stop-color="#fbf100"/>
<stop offset="0.836" stop-color="#9dfe00"/>
<stop offset="0.907" stop-color="#6dff00"/>
<stop offset="0.960" stop-color="#54ff00"/>
<stop offset="0.996" stop-color="#6dff00"/>
</linearGradient>
<linearGradient id="s69" x1="0" y1="0" x2="0" y2="1">
<stop offset="0.013" stop-color="#00ffde"/>
<stop offset="0.071" stop-color="#00ff6a"/>
<stop offset="0.133" stop-color="#00ff1e"/>
<stop offset="0.204" stop-color="#10ff00"/>
<stop offset="0.276" stop-color="#4fff00"/>
<stop offset="0.356" stop-color="#d2f600"/>
<stop offset="0.436" stop-color="#ffa200"/>
<stop offset="0.516" stop-color="#ff7800"/>
<stop offset="0.596" stop-color="#ff7800"/>
<stop offset="0.676" stop-color="#ff8f00"/>
<stop offset="0.756" stop-color="#f5f100"/>
<stop offset="0.836" stop-color="#99ff00"/>
<stop offset="0.907" stop-color="#68ff00"/>
<stop offset="0.960" stop-color="#4fff00"/>
<stop offset="0.996" stop-color="#68ff00"/>
</linearGradient>
<linearGradient id="s70" x1="0" y1="0" x2="0" y2="1">
<stop offset="0.013" stop-color="#00ffc7"/>
<stop offset="0.071" stop-color="#00ff53"/>
<stop offset="0.133" stop-color="#00ff09"/>
<stop offset="0.204" stop-color="#24ff00"/>
<stop offset="0.276" stop-color="#62ff00"/>
<stop offset="0.356" stop-color="#e1f400"/>
<stop offset="0.436" stop-color="#ff8d00"/>
<stop offset="0.516" stop-color="#ff6600"/>
<stop offset="0.596" stop-color="#ff6600"/>
<stop offset="0.676" stop-color="#ff7d00"/>
<stop offset="0.756" stop-color="#ffed00"/>
<stop offset="0.836" stop-color="#a8fc00"/>
<stop offset="0.907" stop-color="#7bff00"/>
<stop offset="0.960" stop-color="#62ff00"/>
<stop offset="0.996" stop-color="#7bff00"/>
</linearGradient>
<linearGradient id="s71" x1="0" y1="0" x2="0" y2="1">
<stop offset="0.013" stop-color="#00fff7"/>
<stop offset="0.071" stop-color="#00ff74"/>
<stop offset="0.133" stop-color="#00ff2d"/>
<stop offset="0.204" stop-color="#00ff0c"/>
<stop offset="0.276" stop-color="#2fff00"/>
<stop offset="0.356" stop-color="#bafa00"/>
<stop offset="0.436" stop-color="#ffba00"/>
<stop offset="0.516" stop-color="#ff9500"/>
<stop offset="0.596" stop-color="#ff9500"/>
<stop offset="0.676" stop-color="#ffad00"/>
<stop offset="0.756" stop-color="#d8f600"/>
<stop offset="0.836" stop-color="#7aff00"/>
<stop offset="0.907" stop-color="#48ff00"/>
<stop offset="0.960" stop-color="#2fff00"/>
<stop offset="0.996" stop-color="#48ff00"/>
</linearGradient>
<linearGradient id="s72" x1="0" y1="0" x2="0" y2="1">
<stop offset="0.013" stop-color="#00f3ff"/>
<stop offset="0.071" stop-color="#00ff82"/>
<stop offset="0.133" stop-color="#00ff3c"/>
<stop offset="0.204" stop-color="#00ff1e"/>
<stop offset="0.276" stop-color="#19ff00"/>
<stop offset="0.356" stop-color="#acfc00"/>
<stop offset="0.436" stop-color="#ffcb00"/>
<stop offset="0.516" stop-color="#ffa800"/>
<stop offset="0.596" stop-color="#ffa800"/>
<stop offset="0.676" stop-color="#ffc000"/>
<stop offset="0.756" stop-color="#c5f800"/>
<stop offset="0.836" stop-color="#63ff00"/>
<stop offset="0.907" stop-color="#32ff00"/>
<stop offset="0.960" stop-color="#19ff00"/>
<stop offset="0.996" stop-color="#32ff00"/>
</linearGradient>
<linearGradient id="s73" x1="0" y1="0" x2="0" y2="1">
<stop offset="0.013" stop-color="#00fff9"/>
<stop offset="0.071" stop-color="#00ff73"/>
<stop offset="0.133" stop-color="#00ff2d"/>
<stop offset="0.204" stop-color="#00ff0f"/>
<stop offset="0.276" stop-color="#2bff00"/>
<stop offset="0.356" stop-color="#bef900"/>
<stop offset="0.436" stop-color="#ffb800"/>
<stop offset="0.516" stop-color="#ff9500"/>
<stop offset="0.596" stop-color="#ff9500"/>
<stop offset="0.676" stop-color="#ffac00"/>
<stop offset="0.756" stop-color="#d0f700"/>
<stop offset="0.836" stop-color="#72ff00"/>
<stop offset="0.907" stop-color="#44ff00"/>
<stop offset="0.960" stop-color="#2bff00"/>
<stop offset="0.996" stop-color="#44ff00"/>
</linearGradient>
<linearGradient id="s74" x1="0" y1="0" x2="0" y2="1">
<stop offset="0.013" stop-color="#00ffc7"/>
<stop offset="0.071" stop-color="#00ff4b"/>
<stop offset="0.133" stop-color="#00ff05"/>
<stop offset="0.204" stop-color="#1fff00"/>
<stop offset="0.276" stop-color="#5eff00"/>
<stop offset="0.356" stop-color="#eaf300"/>
<stop offset="0.436" stop-color="#ff8500"/>
<stop offset="0.516" stop-color="#ff6300"/>
<stop offset="0.596" stop-color="#ff6300"/>
<stop offset="0.676" stop-color="#ff7a00"/>
<stop offset="0.756" stop-color="#f4f200"/>
<stop offset="0.836" stop-color="#9ffe00"/>
<stop offset="0.907" stop-color="#77ff00"/>
<stop offset="0.960" stop-color="#5eff00"/>
<stop offset="0.996" stop-color="#77ff00"/>
</linearGradient>
<linearGradient id="s75" x1="0" y1="0" x2="0" y2="1">
<stop offset="0.013" stop-color="#00ffea"/>
<stop offset="0.071" stop-color="#00ff67"/>
<stop offset="0.133" stop-color="#00ff21"/>
<stop offset="0.204" stop-color="#00ff03"/>
<stop offset="0.276" stop-color="#3aff00"/>
<stop offset="0.356" stop-color="#d3f600"/>
<stop offset="0.436" stop-color="#ffa400"/>
<stop offset="0.516" stop-color="#ff8100"/>
<stop offset="0.596" stop-color="#ff8100"/>
<stop offset="0.676" stop-color="#ff9800"/>
<stop offset="0.756" stop-color="#d7f600"/>
<stop offset="0.836" stop-color="#7aff00"/>
<stop offset="0.907" stop-color="#53ff00"/>
<stop offset="0.960" stop-color="#3aff00"/>
<stop offset="0.996" stop-color="#53ff00"/>
</linearGradient>
<linearGradient id="s76" x1="0" y1="0" x2="0" y2="1">
<stop offset="0.013" stop-color="#00fff1"/>
<stop offset="0.071" stop-color="#00ff6d"/>
<stop offset="0.133" stop-color="#00ff27"/>
<stop offset="0.204" stop-color="#00ff09"/>
<stop offset="0.276" stop-color="#39ff00"/>
<stop offset="0.356" stop-color="#daf500"/>
<stop offset="0.436" stop-color="#ffa600"/>
<stop offset="0.516" stop-color="#ff8600"/>
<stop offset="0.596" stop-color="#ff8600"/>
<stop offset="0.676" stop-color="#ffa000"/>
<stop offset="0.756" stop-color="#cbf700"/>
<stop offset="0.836" stop-color="#6fff00"/>
<stop offset="0.907" stop-color="#4cff00"/>
<stop offset="0.960" stop-color="#33ff00"/>
<stop offset="0.996" stop-color="#4cff00"/>
</linearGradient>
<linearGradient id="s77" x1="0" y1="0" x2="0" y2="1">
<stop offset="0.013" stop-color="#00ffcc"/>
<stop offset="0.071" stop-color="#00ff4f"/>
<stop offset="0.133" stop-color="#00ff09"/>
<stop offset="0.204" stop-color="#1aff00"/>
<stop offset="0.276" stop-color="#6bff00"/>
<stop offset="0.356" stop-color="#ffe300"/>
<stop offset="0.436" stop-color="#ff7d00"/>
<stop offset="0.516" stop-color="#ff6300"/>
<stop offset="0.596" stop-color="#ff6300"/>
<stop offset="0.676" stop-color="#ff8300"/>
<stop offset="0.756" stop-color="#def500"/>
<stop offset="0.836" stop-color="#8eff00"/>
<stop offset="0.907" stop-color="#72ff00"/>
<stop offset="0.960" stop-color="#59ff00"/>
<stop offset="0.996" stop-color="#72ff00"/>
</linearGradient>
<linearGradient id="s78" x1="0" y1="0" x2="0" y2="1">
<stop offset="0.013" stop-color="#00ffca"/>
<stop offset="0.071" stop-color="#00ff4e"/>
<stop offset="0.133" stop-color="#00ff08"/>
<stop offset="0.204" stop-color="#1cff00"/>
<stop offset="0.276" stop-color="#73ff00"/>
<stop offset="0.356" stop-color="#ffdc00"/>
<stop offset="0.436" stop-color="#ff8500"/>
<stop offset="0.516" stop-color="#ff6d00"/>
<stop offset="0.596" stop-color="#ff6d00"/>
<stop offset="0.676" stop-color="#ff9300"/>
<stop offset="0.756" stop-color="#d6f600"/>
<stop offset="0.836" stop-color="#8cff00"/>
<stop offset="0.907" stop-color="#73ff00"/>
<stop offset="0.960" stop-color="#5aff00"/>
<stop offset="0.996" stop-color="#73ff00"/>
</linearGradient>
<linearGradient id="s79" x1="0" y1="0" x2="0" y2="1">
<stop offset="0.013" stop-color="#00f9ff"/>
<stop offset="0.071" stop-color="#00ff7d"/>
<stop offset="0.133" stop-color="#00ff37"/>
<stop offset="0.204" stop-color="#00ff19"/>
<stop offset="0.276" stop-color="#38ff00"/>
<stop offset="0.356" stop-color="#d9f500"/>
<stop offset="0.436" stop-color="#ffd300"/>
<stop offset="0.516" stop-color="#ffbb00"/>
<stop offset="0.596" stop-color="#ffbb00"/>
<stop offset="0.676" stop-color="#ffe700"/>
<stop offset="0.756" stop-color="#a0fe00"/>
<stop offset="0.836" stop-color="#51ff00"/>
<stop offset="0.907" stop-color="#38ff00"/>
<stop offset="0.960" stop-color="#1fff00"/>
<stop offset="0.996" stop-color="#38ff00"/>
</linearGradient>
<linearGradient id="s80" x1="0" y1="0" x2="0" y2="1">
<stop offset="0.013" stop-color="#00fffa"/>
<stop offset="0.071" stop-color="#00ff74"/>
<stop offset="0.133" stop-color="#00ff2e"/>
<stop offset="0.204" stop-color="#00ff08"/>
<stop offset="0.276" stop-color="#63ff00"/>
<stop offset="0.356" stop-color="#f5f100"/>
<stop offset="0.436" stop-color="#ffbd00"/>
<stop offset="0.516" stop-color="#ffab00"/>
<stop offset="0.596" stop-color="#ffab00"/>
<stop offset="0.676" stop-color="#ffda00"/>
<stop offset="0.756" stop-color="#a8fc00"/>
<stop offset="0.836" stop-color="#5dff00"/>
<stop offset="0.907" stop-color="#44ff00"/>
<stop offset="0.960" stop-color="#31ff00"/>
<stop offset="0.996" stop-color="#4aff00"/>
</linearGradient>
<linearGradient id="s81" x1="0" y1="0" x2="0" y2="1">
<stop offset="0.013" stop-color="#00ffe5"/>
<stop offset="0.071" stop-color="#00ff64"/>
<stop offset="0.133" stop-color="#00ff1e"/>
<stop offset="0.204" stop-color="#1dff00"/>
<stop offset="0.276" stop-color="#aefc00"/>
<stop offset="0.356" stop-color="#ffaf00"/>
<stop offset="0.436" stop-color="#ff7b00"/>
<stop offset="0.516" stop-color="#ff7500"/>
<stop offset="0.596" stop-color="#ff7500"/>
<stop offset="0.676" stop-color="#ffa400"/>
<stop offset="0.756" stop-color="#c1f900"/>
<stop offset="0.836" stop-color="#71ff00"/>
<stop offset="0.907" stop-color="#58ff00"/>
<stop offset="0.960" stop-color="#52ff00"/>
<stop offset="0.996" stop-color="#6bff00"/>
</linearGradient>
<linearGradient id="s82" x1="0" y1="0" x2="0" y2="1">
<stop offset="0.013" stop-color="#00f9ff"/>
<stop offset="0.071" stop-color="#00ff7d"/>
<stop offset="0.133" stop-color="#00ff37"/>
<stop offset="0.204" stop-color="#03ff00"/>
<stop offset="0.276" stop-color="#a4fd00"/>
<stop offset="0.356" stop-color="#ffc100"/>
<stop offset="0.436" stop-color="#ff9000"/>
<stop offset="0.516" stop-color="#ff8d00"/>
<stop offset="0.596" stop-color="#ff8d00"/>
<stop offset="0.676" stop-color="#ffbb00"/>
<stop offset="0.756" stop-color="#a9fc00"/>
<stop offset="0.836" stop-color="#51ff00"/>
<stop offset="0.907" stop-color="#38ff00"/>
<stop offset="0.960" stop-color="#32ff00"/>
<stop offset="0.996" stop-color="#4bff00"/>
</linearGradient>
<linearGradient id="s83" x1="0" y1="0" x2="0" y2="1">
<stop offset="0.013" stop-color="#00ffe6"/>
<stop offset="0.071" stop-color="#00ff64"/>
<stop offset="0.133" stop-color="#00ff1e"/>
<stop offset="0.204" stop-color="#1cff00"/>
<stop offset="0.276" stop-color="#a9fc00"/>
<stop offset="0.356" stop-color="#ffc700"/>
<stop offset="0.436" stop-color="#ff9000"/>
<stop offset="0.516" stop-color="#ff8700"/>
<stop offset="0.596" stop-color="#ff8700"/>
<stop offset="0.676" stop-color="#ffb600"/>
<stop offset="0.756" stop-color="#b7fa00"/>
<stop offset="0.836" stop-color="#70ff00"/>
<stop offset="0.907" stop-color="#57ff00"/>
<stop offset="0.960" stop-color="#44ff00"/>
<stop offset="0.996" stop-color="#5dff00"/>
</linearGradient>
<linearGradient id="s84" x1="0" y1="0" x2="0" y2="1">
<stop offset="0.013" stop-color="#00ffcb"/>
<stop offset="0.071" stop-color="#00ff51"/>
<stop offset="0.133" stop-color="#00ff0b"/>
<stop offset="0.204" stop-color="#30ff00"/>
<stop offset="0.276" stop-color="#bdf900"/>
<stop offset="0.356" stop-color="#ffb400"/>
<stop offset="0.436" stop-color="#ff7d00"/>
<stop offset="0.516" stop-color="#ff6e00"/>
<stop offset="0.596" stop-color="#ff6e00"/>
<stop offset="0.676" stop-color="#ff9d00"/>
<stop offset="0.756" stop-color="#ccf700"/>
<stop offset="0.836" stop-color="#88ff00"/>
<stop offset="0.907" stop-color="#6cff00"/>
<stop offset="0.960" stop-color="#59ff00"/>
<stop offset="0.996" stop-color="#78ff00"/>
</linearGradient>
<linearGradient id="s85" x1="0" y1="0" x2="0" y2="1">
<stop offset="0.013" stop-color="#00ffee"/>
<stop offset="0.071" stop-color="#00ff72"/>
<stop offset="0.133" stop-color="#00ff2c"/>
<stop offset="0.204" stop-color="#08ff00"/>
<stop offset="0.276" stop-color="#b6fa00"/>
<stop offset="0.356" stop-color="#ffbd00"/>
<stop offset="0.436" stop-color="#ff8b00"/>
<stop offset="0.516" stop-color="#ff7700"/>
<stop offset="0.596" stop-color="#ff7700"/>
<stop offset="0.676" stop-color="#ffa500"/>
<stop offset="0.756" stop-color="#bbfa00"/>
<stop offset="0.836" stop-color="#60ff00"/>
<stop offset="0.907" stop-color="#3dff00"/>
<stop offset="0.960" stop-color="#37ff00"/>
<stop offset="0.996" stop-color="#63ff00"/>
</linearGradient>
<linearGradient id="s86" x1="0" y1="0" x2="0" y2="1">
<stop offset="0.013" stop-color="#00ffad"/>
<stop offset="0.071" stop-color="#00ff41"/>
<stop offset="0.133" stop-color="#04ff00"/>
<stop offset="0.204" stop-color="#45ff00"/>
<stop offset="0.276" stop-color="#f3f200"/>
<stop offset="0.356" stop-color="#ff7500"/>
<stop offset="0.436" stop-color="#ff5600"/>
<stop offset="0.516" stop-color="#ff4b00"/>
<stop offset="0.596" stop-color="#ff4c00"/>
<stop offset="0.676" stop-color="#ff6600"/>
<stop offset="0.756" stop-color="#ecf300"/>
<stop offset="0.836" stop-color="#9afe00"/>
<stop offset="0.907" stop-color="#7aff00"/>
<stop offset="0.960" stop-color="#84ff00"/>
<stop offset="0.996" stop-color="#b1fb00"/>
</linearGradient>
<linearGradient id="s87" x1="0" y1="0" x2="0" y2="1">
<stop offset="0.013" stop-color="#00ffd9"/>
<stop offset="0.071" stop-color="#00ff64"/>
<stop offset="0.133" stop-color="#00ff25"/>
<stop offset="0.204" stop-color="#19ff00"/>
<stop offset="0.276" stop-color="#d7f600"/>
<stop offset="0.356" stop-color="#ff9e00"/>
<stop offset="0.436" stop-color="#ff7400"/>
<stop offset="0.516" stop-color="#ff6500"/>
<stop offset="0.596" stop-color="#ff6a00"/>
<stop offset="0.676" stop-color="#ffa100"/>
<stop offset="0.756" stop-color="#c1f900"/>
<stop offset="0.836" stop-color="#6cff00"/>
<stop offset="0.907" stop-color="#55ff00"/>
<stop offset="0.960" stop-color="#71ff00"/>
<stop offset="0.996" stop-color="#a7fd00"/>
</linearGradient>
<linearGradient id="s88" x1="0" y1="0" x2="0" y2="1">
<stop offset="0.013" stop-color="#00ffb7"/>
<stop offset="0.071" stop-color="#00ff48"/>
<stop offset="0.133" stop-color="#00ff0f"/>
<stop offset="0.204" stop-color="#3cff00"/>
<stop offset="0.276" stop-color="#f6f100"/>
<stop offset="0.356" stop-color="#ff7e00"/>
<stop offset="0.436" stop-color="#ff5d00"/>
<stop offset="0.516" stop-color="#ff5900"/>
<stop offset="0.596" stop-color="#ff5c00"/>
<stop offset="0.676" stop-color="#ff9200"/>
<stop offset="0.756" stop-color="#d2f600"/>
<stop offset="0.836" stop-color="#8bff00"/>
<stop offset="0.907" stop-color="#7dff00"/>
<stop offset="0.960" stop-color="#a7fd00"/>
<stop offset="0.996" stop-color="#d9f500"/>
</linearGradient>
<linearGradient id="s89" x1="0" y1="0" x2="0" y2="1">
<stop offset="0.013" stop-color="#00ffc6"/>
<stop offset="0.071" stop-color="#00ff54"/>
<stop offset="0.133" stop-color="#00ff20"/>
<stop offset="0.204" stop-color="#2dff00"/>
<stop offset="0.276" stop-color="#eff200"/>
<stop offset="0.356" stop-color="#ff8c00"/>
<stop offset="0.436" stop-color="#ff6800"/>
<stop offset="0.516" stop-color="#ff6500"/>
<stop offset="0.596" stop-color="#ff6f00"/>
<stop offset="0.676" stop-color="#ffb200"/>
<stop offset="0.756" stop-color="#bdf900"/>
<stop offset="0.836" stop-color="#79ff00"/>
<stop offset="0.907" stop-color="#74ff00"/>
<stop offset="0.960" stop-color="#affb00"/>
<stop offset="0.996" stop-color="#e5f400"/>
</linearGradient>
<linearGradient id="s90" x1="0" y1="0" x2="0" y2="1">
<stop offset="0.013" stop-color="#00ffb5"/>
<stop offset="0.071" stop-color="#00ff47"/>
<stop offset="0.133" stop-color="#00ff15"/>
<stop offset="0.204" stop-color="#3eff00"/>
<stop offset="0.276" stop-color="#fbf100"/>
<stop offset="0.356" stop-color="#ff8000"/>
<stop offset="0.436" stop-color="#ff5f00"/>
<stop offset="0.516" stop-color="#ff5f00"/>
<stop offset="0.596" stop-color="#ff6900"/>
<stop offset="0.676" stop-color="#ffaf00"/>
<stop offset="0.756" stop-color="#c5f800"/>
<stop offset="0.836" stop-color="#8dff00"/>
<stop offset="0.907" stop-color="#91ff00"/>
<stop offset="0.960" stop-color="#cff700"/>
<stop offset="0.996" stop-color="#ffe500"/>
</linearGradient>
<linearGradient id="s91" x1="0" y1="0" x2="0" y2="1">
<stop offset="0.013" stop-color="#00ffbf"/>
<stop offset="0.071" stop-color="#00ff4f"/>
<stop offset="0.133" stop-color="#00ff1d"/>
<stop offset="0.204" stop-color="#33ff00"/>
<stop offset="0.276" stop-color="#edf300"/>
<stop offset="0.356" stop-color="#ff9200"/>
<stop offset="0.436" stop-color="#ff6900"/>
<stop offset="0.516" stop-color="#ff6900"/>
<stop offset="0.596" stop-color="#ff7a00"/>
<stop offset="0.676" stop-color="#ffc000"/>
<stop offset="0.756" stop-color="#bdf900"/>
<stop offset="0.836" stop-color="#8bff00"/>
<stop offset="0.907" stop-color="#97ff00"/>
<stop offset="0.960" stop-color="#daf500"/>
<stop offset="0.996" stop-color="#ffd800"/>
</linearGradient>
<linearGradient id="s92" x1="0" y1="0" x2="0" y2="1">
<stop offset="0.013" stop-color="#00ffa2"/>
<stop offset="0.071" stop-color="#00ff38"/>
<stop offset="0.133" stop-color="#00ff06"/>
<stop offset="0.204" stop-color="#51ff00"/>
<stop offset="0.276" stop-color="#fdf000"/>
<stop offset="0.356" stop-color="#ff7e00"/>
<stop offset="0.436" stop-color="#ff5a00"/>
<stop offset="0.516" stop-color="#ff5a00"/>
<stop offset="0.596" stop-color="#ff6700"/>
<stop offset="0.676" stop-color="#ffad00"/>
<stop offset="0.756" stop-color="#d4f600"/>
<stop offset="0.836" stop-color="#aafc00"/>
<stop offset="0.907" stop-color="#bafa00"/>
<stop offset="0.960" stop-color="#ffeb00"/>
<stop offset="0.996" stop-color="#ffa500"/>
</linearGradient>
<linearGradient id="s93" x1="0" y1="0" x2="0" y2="1">
<stop offset="0.013" stop-color="#00ff6d"/>
<stop offset="0.071" stop-color="#00ff09"/>
<stop offset="0.133" stop-color="#3aff00"/>
<stop offset="0.204" stop-color="#95ff00"/>
<stop offset="0.276" stop-color="#ffc800"/>
<stop offset="0.356" stop-color="#ff6200"/>
<stop offset="0.436" stop-color="#ff4d00"/>
<stop offset="0.516" stop-color="#ff4d00"/>
<stop offset="0.596" stop-color="#ff5900"/>
<stop offset="0.676" stop-color="#ff8e00"/>
<stop offset="0.756" stop-color="#f9f100"/>
<stop offset="0.836" stop-color="#d8f600"/>
<stop offset="0.907" stop-color="#ebf300"/>
<stop offset="0.960" stop-color="#ffb100"/>
<stop offset="0.996" stop-color="#ff6b00"/>
</linearGradient>
<linearGradient id="s94" x1="0" y1="0" x2="0" y2="1">
<stop offset="0.013" stop-color="#00ff6d"/>
<stop offset="0.071" stop-color="#00ff09"/>
<stop offset="0.133" stop-color="#46ff00"/>
<stop offset="0.204" stop-color="#a3fd00"/>
<stop offset="0.276" stop-color="#ffdb00"/>
<stop offset="0.356" stop-color="#ff8900"/>
<stop offset="0.436" stop-color="#ff6c00"/>
<stop offset="0.516" stop-color="#ff6c00"/>
<stop offset="0.596" stop-color="#ff8300"/>
<stop offset="0.676" stop-color="#ffb800"/>
<stop offset="0.756" stop-color="#eaf300"/>
<stop offset="0.836" stop-color="#d2f600"/>
<stop offset="0.907" stop-color="#e5f400"/>
<stop offset="0.960" stop-color="#ffc300"/>
<stop offset="0.996" stop-color="#ff7d00"/>
</linearGradient>
<linearGradient id="s95" x1="0" y1="0" x2="0" y2="1">
<stop offset="0.013" stop-color="#00ff20"/>
<stop offset="0.071" stop-color="#55ff00"/>
<stop offset="0.133" stop-color="#a1fd00"/>
<stop offset="0.204" stop-color="#ddf500"/>
<stop offset="0.276" stop-color="#ffc300"/>
<stop offset="0.356" stop-color="#ff8d00"/>
<stop offset="0.436" stop-color="#ff7d00"/>
<stop offset="0.516" stop-color="#ff7d00"/>
<stop offset="0.596" stop-color="#ff9500"/>
<stop offset="0.676" stop-color="#ffbc00"/>
<stop offset="0.756" stop-color="#fdf000"/>
<stop offset="0.836" stop-color="#f1f200"/>
<stop offset="0.907" stop-color="#ffea00"/>
<stop offset="0.960" stop-color="#ffa400"/>
<stop offset="0.996" stop-color="#ff6100"/>
</linearGradient>
<linearGradient id="s96" x1="0" y1="0" x2="0" y2="1">
<stop offset="0.013" stop-color="#33ff00"/>
<stop offset="0.071" stop-color="#aafc00"/>
<stop offset="0.133" stop-color="#daf500"/>
<stop offset="0.204" stop-color="#f6f100"/>
<stop offset="0.276" stop-color="#ffe300"/>
<stop offset="0.356" stop-color="#ffcc00"/>
<stop offset="0.436" stop-color="#ffcc00"/>
<stop offset="0.516" stop-color="#ffcc00"/>
<stop offset="0.596" stop-color="#ffe300"/>
<stop offset="0.676" stop-color="#f6f100"/>
<stop offset="0.756" stop-color="#e3f400"/>
<stop offset="0.836" stop-color="#e3f400"/>
<stop offset="0.907" stop-color="#f6f100"/>
<stop offset="0.960" stop-color="#ffb500"/>
<stop offset="0.996" stop-color="#ff6f00"/>
</linearGradient>
<linearGradient id="s97" x1="0" y1="0" x2="0" y2="1">
<stop offset="0.013" stop-color="#00ffb6"/>
<stop offset="0.071" stop-color="#00ff62"/>
<stop offset="0.133" stop-color="#0fff00"/>
<stop offset="0.204" stop-color="#5eff00"/>
<stop offset="0.276" stop-color="#98ff00"/>
<stop offset="0.356" stop-color="#c4f800"/>
<stop offset="0.436" stop-color="#d1f700"/>
<stop offset="0.516" stop-color="#c4f800"/>
<stop offset="0.596" stop-color="#a5fd00"/>
<stop offset="0.676" stop-color="#7fff00"/>
<stop offset="0.756" stop-color="#77ff00"/>
<stop offset="0.836" stop-color="#98ff00"/>
<stop offset="0.907" stop-color="#d1f700"/>
<stop offset="0.960" stop-color="#ffc300"/>
<stop offset="0.996" stop-color="#ff7d00"/>
</linearGradient>
<linearGradient id="s98" x1="0" y1="0" x2="0" y2="1">
<stop offset="0.013" stop-color="#008eff"/>
<stop offset="0.071" stop-color="#00c5ff"/>
<stop offset="0.133" stop-color="#00ffc1"/>
<stop offset="0.204" stop-color="#00ff7f"/>
<stop offset="0.276" stop-color="#00ff57"/>
<stop offset="0.356" stop-color="#00ff2b"/>
<stop offset="0.436" stop-color="#00ff14"/>
<stop offset="0.516" stop-color="#19ff00"/>
<stop offset="0.596" stop-color="#43ff00"/>
<stop offset="0.676" stop-color="#3aff00"/>
<stop offset="0.756" stop-color="#4bff00"/>
<stop offset="0.836" stop-color="#85ff00"/>
<stop offset="0.907" stop-color="#d6f600"/>
<stop offset="0.960" stop-color="#ffae00"/>
<stop offset="0.996" stop-color="#ff6800"/>
</linearGradient>
<linearGradient id="s99" x1="0" y1="0" x2="0" y2="1">
<stop offset="0.013" stop-color="#0700ff"/>
<stop offset="0.071" stop-color="#0004ff"/>
<stop offset="0.133" stop-color="#0012ff"/>
<stop offset="0.204" stop-color="#0012ff"/>
<stop offset="0.276" stop-color="#0012ff"/>
<stop offset="0.356" stop-color="#001fff"/>
<stop offset="0.436" stop-color="#0049ff"/>
<stop offset="0.516" stop-color="#00ffee"/>
<stop offset="0.596" stop-color="#00ff25"/>
<stop offset="0.676" stop-color="#1dff00"/>
<stop offset="0.756" stop-color="#4fff00"/>
<stop offset="0.836" stop-color="#99ff00"/>
<stop offset="0.907" stop-color="#e5f400"/>
<stop offset="0.960" stop-color="#ff9b00"/>
<stop offset="0.996" stop-color="#ff5c00"/>
</linearGradient>
<linearGradient id="s100" x1="0" y1="0" x2="0" y2="1">
<stop offset="0.013" stop-color="#0d00ff"/>
<stop offset="0.071" stop-color="#0300ff"/>
<stop offset="0.133" stop-color="#000aff"/>
<stop offset="0.204" stop-color="#000aff"/>
<stop offset="0.276" stop-color="#000aff"/>
<stop offset="0.356" stop-color="#0018ff"/>
<stop offset="0.436" stop-color="#0041ff"/>
<stop offset="0.516" stop-color="#00f9ff"/>
<stop offset="0.596" stop-color="#00ff37"/>
<stop offset="0.676" stop-color="#06ff00"/>
<stop offset="0.756" stop-color="#38ff00"/>
<stop offset="0.836" stop-color="#83ff00"/>
<stop offset="0.907" stop-color="#d4f600"/>
<stop offset="0.960" stop-color="#ffb000"/>
<stop offset="0.996" stop-color="#ff6a00"/>
</linearGradient>
<linearGradient id="s101" x1="0" y1="0" x2="0" y2="1">
<stop offset="0.013" stop-color="#0300ff"/>
<stop offset="0.071" stop-color="#0009ff"/>
<stop offset="0.133" stop-color="#0017ff"/>
<stop offset="0.204" stop-color="#0017ff"/>
<stop offset="0.276" stop-color="#0017ff"/>
<stop offset="0.356" stop-color="#0025ff"/>
<stop offset="0.436" stop-color="#004eff"/>
<stop offset="0.516" stop-color="#00ffdf"/>
<stop offset="0.596" stop-color="#00ff18"/>
<stop offset="0.676" stop-color="#2dff00"/>
<stop offset="0.756" stop-color="#5fff00"/>
<stop offset="0.836" stop-color="#a5fd00"/>
<stop offset="0.907" stop-color="#f1f200"/>
<stop offset="0.960" stop-color="#ff8c00"/>
<stop offset="0.996" stop-color="#ff5500"/>
</linearGradient>
<linearGradient id="s102" x1="0" y1="0" x2="0" y2="1">
<stop offset="0.013" stop-color="#0075ff"/>
<stop offset="0.071" stop-color="#00bbff"/>
<stop offset="0.133" stop-color="#00ffdf"/>
<stop offset="0.204" stop-color="#00ffa1"/>
<stop offset="0.276" stop-color="#00ff88"/>
<stop offset="0.356" stop-color="#00ff78"/>
<stop offset="0.436" stop-color="#00ff69"/>
<stop offset="0.516" stop-color="#00ff19"/>
<stop offset="0.596" stop-color="#45ff00"/>
<stop offset="0.676" stop-color="#52ff00"/>
<stop offset="0.756" stop-color="#5eff00"/>
<stop offset="0.836" stop-color="#90ff00"/>
<stop offset="0.907" stop-color="#d4f600"/>
<stop offset="0.960" stop-color="#ffbb00"/>
<stop offset="0.996" stop-color="#ff7500"/>
</linearGradient>
<linearGradient id="s103" x1="0" y1="0" x2="0" y2="1">
<stop offset="0.013" stop-color="#00ff74"/>
<stop offset="0.071" stop-color="#0dff00"/>
<stop offset="0.133" stop-color="#c0f900"/>
<stop offset="0.204" stop-color="#ffd100"/>
<stop offset="0.276" stop-color="#ffa200"/>
<stop offset="0.356" stop-color="#ff8b00"/>
<stop offset="0.436" stop-color="#ff8b00"/>
<stop offset="0.516" stop-color="#ff8b00"/>
<stop offset="0.596" stop-color="#ff9e00"/>
<stop offset="0.676" stop-color="#ffc500"/>
<stop offset="0.756" stop-color="#ffe000"/>
<stop offset="0.836" stop-color="#ffd800"/>
<stop offset="0.907" stop-color="#ffb200"/>
<stop offset="0.960" stop-color="#ff7300"/>
<stop offset="0.996" stop-color="#ff5000"/>
</linearGradient>
<linearGradient id="s104" x1="0" y1="0" x2="0" y2="1">
<stop offset="0.013" stop-color="#00ff12"/>
<stop offset="0.071" stop-color="#bef900"/>
<stop offset="0.133" stop-color="#ff8400"/>
<stop offset="0.204" stop-color="#ff4500"/>
<stop offset="0.276" stop-color="#ff2d00"/>
<stop offset="0.356" stop-color="#ff2800"/>
<stop offset="0.436" stop-color="#ff2800"/>
<stop offset="0.516" stop-color="#ff2800"/>
<stop offset="0.596" stop-color="#ff2800"/>
<stop offset="0.676" stop-color="#ff3300"/>
<stop offset="0.756" stop-color="#ff4500"/>
<stop offset="0.836" stop-color="#ff5100"/>
<stop offset="0.907" stop-color="#ff5d00"/>
<stop offset="0.960" stop-color="#ff5d00"/>
<stop offset="0.996" stop-color="#ff5100"/>
</linearGradient>
<linearGradient id="s105" x1="0" y1="0" x2="0" y2="1">
<stop offset="0.013" stop-color="#00ff18"/>
<stop offset="0.071" stop-color="#b9fa00"/>
<stop offset="0.133" stop-color="#ff8b00"/>
<stop offset="0.204" stop-color="#ff4800"/>
<stop offset="0.276" stop-color="#ff3000"/>
<stop offset="0.356" stop-color="#ff2800"/>
<stop offset="0.436" stop-color="#ff2800"/>
<stop offset="0.516" stop-color="#ff2800"/>
<stop offset="0.596" stop-color="#ff2a00"/>
<stop offset="0.676" stop-color="#ff3600"/>
<stop offset="0.756" stop-color="#ff4800"/>
<stop offset="0.836" stop-color="#ff5400"/>
<stop offset="0.907" stop-color="#ff6000"/>
<stop offset="0.960" stop-color="#ff6000"/>
<stop offset="0.996" stop-color="#ff5400"/>
</linearGradient>
<linearGradient id="s106" x1="0" y1="0" x2="0" y2="1">
<stop offset="0.013" stop-color="#00ff23"/>
<stop offset="0.071" stop-color="#aefc00"/>
<stop offset="0.133" stop-color="#ff9900"/>
<stop offset="0.204" stop-color="#ff4f00"/>
<stop offset="0.276" stop-color="#ff3700"/>
<stop offset="0.356" stop-color="#ff2b00"/>
<stop offset="0.436" stop-color="#ff2b00"/>
<stop offset="0.516" stop-color="#ff2b00"/>
<stop offset="0.596" stop-color="#ff3100"/>
<stop offset="0.676" stop-color="#ff3d00"/>
<stop offset="0.756" stop-color="#ff4f00"/>
<stop offset="0.836" stop-color="#ff5b00"/>
<stop offset="0.907" stop-color="#ff6a00"/>
<stop offset="0.960" stop-color="#ff6a00"/>
<stop offset="0.996" stop-color="#ff5b00"/>
</linearGradient>
<linearGradient id="s107" x1="0" y1="0" x2="0" y2="1">
<stop offset="0.013" stop-color="#00e9ff"/>
<stop offset="0.071" stop-color="#00ff98"/>
<stop offset="0.133" stop-color="#00ff30"/>
<stop offset="0.204" stop-color="#35ff00"/>
<stop offset="0.276" stop-color="#73ff00"/>
<stop offset="0.356" stop-color="#98ff00"/>
<stop offset="0.436" stop-color="#b0fb00"/>
<stop offset="0.516" stop-color="#e0f400"/>
<stop offset="0.596" stop-color="#fcf000"/>
<stop offset="0.676" stop-color="#fcf000"/>
<stop offset="0.756" stop-color="#eef200"/>
<stop offset="0.836" stop-color="#dbf500"/>
<stop offset="0.907" stop-color="#c8f800"/>
<stop offset="0.960" stop-color="#c8f800"/>
<stop offset="0.996" stop-color="#dbf500"/>
</linearGradient>
<linearGradient id="s108" x1="0" y1="0" x2="0" y2="1">
<stop offset="0.013" stop-color="#0005ff"/>
<stop offset="0.071" stop-color="#0018ff"/>
<stop offset="0.133" stop-color="#003cff"/>
<stop offset="0.204" stop-color="#007fff"/>
<stop offset="0.276" stop-color="#00b5ff"/>
<stop offset="0.356" stop-color="#00dbff"/>
<stop offset="0.436" stop-color="#00ffe5"/>
<stop offset="0.516" stop-color="#00ff53"/>
<stop offset="0.596" stop-color="#0eff00"/>
<stop offset="0.676" stop-color="#33ff00"/>
<stop offset="0.756" stop-color="#40ff00"/>
<stop offset="0.836" stop-color="#2fff00"/>
<stop offset="0.907" stop-color="#16ff00"/>
<stop offset="0.960" stop-color="#16ff00"/>
<stop offset="0.996" stop-color="#2fff00"/>
</linearGradient>
<linearGradient id="s109" x1="0" y1="0" x2="0" y2="1">
<stop offset="0.013" stop-color="#0001ff"/>
<stop offset="0.071" stop-color="#0001ff"/>
<stop offset="0.133" stop-color="#0001ff"/>
<stop offset="0.204" stop-color="#0001ff"/>
<stop offset="0.276" stop-color="#000eff"/>
<stop offset="0.356" stop-color="#001cff"/>
<stop offset="0.436" stop-color="#0060ff"/>
<stop offset="0.516" stop-color="#00ffc7"/>
<stop offset="0.596" stop-color="#00ff2d"/>
<stop offset="0.676" stop-color="#06ff00"/>
<stop offset="0.756" stop-color="#2bff00"/>
<stop offset="0.836" stop-color="#2bff00"/>
<stop offset="0.907" stop-color="#12ff00"/>
<stop offset="0.960" stop-color="#12ff00"/>
<stop offset="0.996" stop-color="#2bff00"/>
</linearGradient>
<linearGradient id="s110" x1="0" y1="0" x2="0" y2="1">
<stop offset="0.013" stop-color="#0013ff"/>
<stop offset="0.071" stop-color="#0013ff"/>
<stop offset="0.133" stop-color="#0013ff"/>
<stop offset="0.204" stop-color="#0013ff"/>
<stop offset="0.276" stop-color="#001cff"/>
<stop offset="0.356" stop-color="#0024ff"/>
<stop offset="0.436" stop-color="#005dff"/>
<stop offset="0.516" stop-color="#00ffb6"/>
<stop offset="0.596" stop-color="#00ff08"/>
<stop offset="0.676" stop-color="#3aff00"/>
<stop offset="0.756" stop-color="#64ff00"/>
<stop offset="0.836" stop-color="#64ff00"/>
<stop offset="0.907" stop-color="#55ff00"/>
<stop offset="0.960" stop-color="#55ff00"/>
<stop offset="0.996" stop-color="#6eff00"/>
</linearGradient>
<linearGradient id="s111" x1="0" y1="0" x2="0" y2="1">
<stop offset="0.013" stop-color="#0010ff"/>
<stop offset="0.071" stop-color="#0010ff"/>
<stop offset="0.133" stop-color="#0010ff"/>
<stop offset="0.204" stop-color="#0010ff"/>
<stop offset="0.276" stop-color="#0013ff"/>
<stop offset="0.356" stop-color="#0016ff"/>
<stop offset="0.436" stop-color="#0044ff"/>
<stop offset="0.516" stop-color="#00ffe7"/>
<stop offset="0.596" stop-color="#00ff17"/>
<stop offset="0.676" stop-color="#2cff00"/>
<stop offset="0.756" stop-color="#5bff00"/>
<stop offset="0.836" stop-color="#5bff00"/>
<stop offset="0.907" stop-color="#56ff00"/>
<stop offset="0.960" stop-color="#56ff00"/>
<stop offset="0.996" stop-color="#6fff00"/>
</linearGradient>
<linearGradient id="s112" x1="0" y1="0" x2="0" y2="1">
<stop offset="0.013" stop-color="#0006ff"/>
<stop offset="0.071" stop-color="#0006ff"/>
<stop offset="0.133" stop-color="#000aff"/>
<stop offset="0.204" stop-color="#0011ff"/>
<stop offset="0.276" stop-color="#0025ff"/>
<stop offset="0.356" stop-color="#0063ff"/>
<stop offset="0.436" stop-color="#00bfff"/>
<stop offset="0.516" stop-color="#00ffa9"/>
<stop offset="0.596" stop-color="#00ff0b"/>
<stop offset="0.676" stop-color="#24ff00"/>
<stop offset="0.756" stop-color="#43ff00"/>
<stop offset="0.836" stop-color="#43ff00"/>
<stop offset="0.907" stop-color="#43ff00"/>
<stop offset="0.960" stop-color="#49ff00"/>
<stop offset="0.996" stop-color="#69ff00"/>
</linearGradient>
<linearGradient id="s113" x1="0" y1="0" x2="0" y2="1">
<stop offset="0.013" stop-color="#0500ff"/>
<stop offset="0.071" stop-color="#0500ff"/>
<stop offset="0.133" stop-color="#0004ff"/>
<stop offset="0.204" stop-color="#0018ff"/>
<stop offset="0.276" stop-color="#0056ff"/>
<stop offset="0.356" stop-color="#00e6ff"/>
<stop offset="0.436" stop-color="#00ff5d"/>
<stop offset="0.516" stop-color="#00ff0d"/>
<stop offset="0.596" stop-color="#2eff00"/>
<stop offset="0.676" stop-color="#2eff00"/>
<stop offset="0.756" stop-color="#28ff00"/>
<stop offset="0.836" stop-color="#28ff00"/>
<stop offset="0.907" stop-color="#28ff00"/>
<stop offset="0.960" stop-color="#3bff00"/>
<stop offset="0.996" stop-color="#67ff00"/>
</linearGradient>
<linearGradient id="s114" x1="0" y1="0" x2="0" y2="1">
<stop offset="0.013" stop-color="#003aff"/>
<stop offset="0.071" stop-color="#0051ff"/>
<stop offset="0.133" stop-color="#008bff"/>
<stop offset="0.204" stop-color="#00cfff"/>
<stop offset="0.276" stop-color="#00ffd1"/>
<stop offset="0.356" stop-color="#00ff2b"/>
<stop offset="0.436" stop-color="#8cff00"/>
<stop offset="0.516" stop-color="#b9fa00"/>
<stop offset="0.596" stop-color="#b9fa00"/>
<stop offset="0.676" stop-color="#a6fd00"/>
<stop offset="0.756" stop-color="#92ff00"/>
<stop offset="0.836" stop-color="#86ff00"/>
<stop offset="0.907" stop-color="#79ff00"/>
<stop offset="0.960" stop-color="#8cff00"/>
<stop offset="0.996" stop-color="#b4fb00"/>
</linearGradient>
<linearGradient id="s115" x1="0" y1="0" x2="0" y2="1">
<stop offset="0.013" stop-color="#00d4ff"/>
<stop offset="0.071" stop-color="#00ffba"/>
<stop offset="0.133" stop-color="#00ff43"/>
<stop offset="0.204" stop-color="#48ff00"/>
<stop offset="0.276" stop-color="#bff900"/>
<stop offset="0.356" stop-color="#ffd600"/>
<stop offset="0.436" stop-color="#ff8a00"/>
<stop offset="0.516" stop-color="#ff7800"/>
<stop offset="0.596" stop-color="#ff7800"/>
<stop offset="0.676" stop-color="#ff9000"/>
<stop offset="0.756" stop-color="#ffa700"/>
<stop offset="0.836" stop-color="#ffca00"/>
<stop offset="0.907" stop-color="#ffed00"/>
<stop offset="0.960" stop-color="#ffe700"/>
<stop offset="0.996" stop-color="#ffb800"/>
</linearGradient>
<linearGradient id="s116" x1="0" y1="0" x2="0" y2="1">
<stop offset="0.013" stop-color="#00fffc"/>
<stop offset="0.071" stop-color="#00ff6c"/>
<stop offset="0.133" stop-color="#29ff00"/>
<stop offset="0.204" stop-color="#dbf500"/>
<stop offset="0.276" stop-color="#ff9000"/>
<stop offset="0.356" stop-color="#ff5700"/>
<stop offset="0.436" stop-color="#ff4b00"/>
<stop offset="0.516" stop-color="#ff4b00"/>
<stop offset="0.596" stop-color="#ff4b00"/>
<stop offset="0.676" stop-color="#ff5700"/>
<stop offset="0.756" stop-color="#ff6300"/>
<stop offset="0.836" stop-color="#ff9000"/>
<stop offset="0.907" stop-color="#ffbe00"/>
<stop offset="0.960" stop-color="#ffbe00"/>
<stop offset="0.996" stop-color="#ff9000"/>
</linearGradient>
<linearGradient id="s117" x1="0" y1="0" x2="0" y2="1">
<stop offset="0.013" stop-color="#00cfff"/>
<stop offset="0.071" stop-color="#00ff99"/>
<stop offset="0.133" stop-color="#00ff08"/>
<stop offset="0.204" stop-color="#b4fb00"/>
<stop offset="0.276" stop-color="#ffbf00"/>
<stop offset="0.356" stop-color="#ff7900"/>
<stop offset="0.436" stop-color="#ff6300"/>
<stop offset="0.516" stop-color="#ff6300"/>
<stop offset="0.596" stop-color="#ff6300"/>
<stop offset="0.676" stop-color="#ff7900"/>
<stop offset="0.756" stop-color="#ff9100"/>
<stop offset="0.836" stop-color="#ffbf00"/>
<stop offset="0.907" stop-color="#ffee00"/>
<stop offset="0.960" stop-color="#ffee00"/>
<stop offset="0.996" stop-color="#ffbf00"/>
</linearGradient>
<linearGradient id="s118" x1="0" y1="0" x2="0" y2="1">
<stop offset="0.013" stop-color="#00f8ff"/>
<stop offset="0.071" stop-color="#00ff73"/>
<stop offset="0.133" stop-color="#1fff00"/>
<stop offset="0.204" stop-color="#d4f600"/>
<stop offset="0.276" stop-color="#ff9900"/>
<stop offset="0.356" stop-color="#ff5b00"/>
<stop offset="0.436" stop-color="#ff4f00"/>
<stop offset="0.516" stop-color="#ff4f00"/>
<stop offset="0.596" stop-color="#ff4f00"/>
<stop offset="0.676" stop-color="#ff5b00"/>
<stop offset="0.756" stop-color="#ff6a00"/>
<stop offset="0.836" stop-color="#ff9900"/>
<stop offset="0.907" stop-color="#ffc700"/>
<stop offset="0.960" stop-color="#ffc700"/>
<stop offset="0.996" stop-color="#ff9900"/>
</linearGradient>
<linearGradient id="s119" x1="0" y1="0" x2="0" y2="1">
<stop offset="0.013" stop-color="#00e6ff"/>
<stop offset="0.071" stop-color="#00ffa8"/>
<stop offset="0.133" stop-color="#00ff1e"/>
<stop offset="0.204" stop-color="#90ff00"/>
<stop offset="0.276" stop-color="#fff000"/>
<stop offset="0.356" stop-color="#ff9300"/>
<stop offset="0.436" stop-color="#ff6400"/>
<stop offset="0.516" stop-color="#ff5e00"/>
<stop offset="0.596" stop-color="#ff5e00"/>
<stop offset="0.676" stop-color="#ff7000"/>
<stop offset="0.756" stop-color="#ff8700"/>
<stop offset="0.836" stop-color="#ffaa00"/>
<stop offset="0.907" stop-color="#ffcd00"/>
<stop offset="0.960" stop-color="#ffc200"/>
<stop offset="0.996" stop-color="#ff9300"/>
</linearGradient>
<linearGradient id="s120" x1="0" y1="0" x2="0" y2="1">
<stop offset="0.013" stop-color="#009fff"/>
<stop offset="0.071" stop-color="#00e7ff"/>
<stop offset="0.133" stop-color="#00ff87"/>
<stop offset="0.204" stop-color="#00ff06"/>
<stop offset="0.276" stop-color="#85ff00"/>
<stop offset="0.356" stop-color="#f6f100"/>
<stop offset="0.436" stop-color="#ffaf00"/>
<stop offset="0.516" stop-color="#ff9700"/>
<stop offset="0.596" stop-color="#ff9700"/>
<stop offset="0.676" stop-color="#ffaf00"/>
<stop offset="0.756" stop-color="#ffc900"/>
<stop offset="0.836" stop-color="#ffe900"/>
<stop offset="0.907" stop-color="#edf300"/>
<stop offset="0.960" stop-color="#fbf100"/>
<stop offset="0.996" stop-color="#ffc600"/>
</linearGradient>
<linearGradient id="s121" x1="0" y1="0" x2="0" y2="1">
<stop offset="0.013" stop-color="#0080ff"/>
<stop offset="0.071" stop-color="#00c2ff"/>
<stop offset="0.133" stop-color="#00ffb9"/>
<stop offset="0.204" stop-color="#00ff33"/>
<stop offset="0.276" stop-color="#53ff00"/>
<stop offset="0.356" stop-color="#edf300"/>
<stop offset="0.436" stop-color="#ffaf00"/>
<stop offset="0.516" stop-color="#ff9700"/>
<stop offset="0.596" stop-color="#ff9700"/>
<stop offset="0.676" stop-color="#ffaf00"/>
<stop offset="0.756" stop-color="#ffcf00"/>
<stop offset="0.836" stop-color="#f2f200"/>
<stop offset="0.907" stop-color="#d0f700"/>
<stop offset="0.960" stop-color="#d5f600"/>
<stop offset="0.996" stop-color="#fbf100"/>
</linearGradient>
<linearGradient id="s122" x1="0" y1="0" x2="0" y2="1">
<stop offset="0.013" stop-color="#00a8ff"/>
<stop offset="0.071" stop-color="#00e7ff"/>
<stop offset="0.133" stop-color="#00ff9a"/>
<stop offset="0.204" stop-color="#00ff1d"/>
<stop offset="0.276" stop-color="#71ff00"/>
<stop offset="0.356" stop-color="#ffd800"/>
<stop offset="0.436" stop-color="#ff7b00"/>
<stop offset="0.516" stop-color="#ff6400"/>
<stop offset="0.596" stop-color="#ff6400"/>
<stop offset="0.676" stop-color="#ff7b00"/>
<stop offset="0.756" stop-color="#ff9e00"/>
<stop offset="0.836" stop-color="#ffd800"/>
<stop offset="0.907" stop-color="#edf300"/>
<stop offset="0.960" stop-color="#edf300"/>
<stop offset="0.996" stop-color="#ffd800"/>
</linearGradient>
<linearGradient id="s123" x1="0" y1="0" x2="0" y2="1">
<stop offset="0.013" stop-color="#0080ff"/>
<stop offset="0.071" stop-color="#00bfff"/>
<stop offset="0.133" stop-color="#00ffc2"/>
<stop offset="0.204" stop-color="#00ff3d"/>
<stop offset="0.276" stop-color="#49ff00"/>
<stop offset="0.356" stop-color="#f4f200"/>
<stop offset="0.436" stop-color="#ffa000"/>
<stop offset="0.516" stop-color="#ff8900"/>
<stop offset="0.596" stop-color="#ff8900"/>
<stop offset="0.676" stop-color="#ffa000"/>
<stop offset="0.756" stop-color="#ffc300"/>
<stop offset="0.836" stop-color="#f4f200"/>
<stop offset="0.907" stop-color="#cef700"/>
<stop offset="0.960" stop-color="#cef700"/>
<stop offset="0.996" stop-color="#f4f200"/>
</linearGradient>
<linearGradient id="s124" x1="0" y1="0" x2="0" y2="1">
<stop offset="0.013" stop-color="#00dfff"/>
<stop offset="0.071" stop-color="#00ffdd"/>
<stop offset="0.133" stop-color="#00ff67"/>
<stop offset="0.204" stop-color="#0cff00"/>
<stop offset="0.276" stop-color="#8cff00"/>
<stop offset="0.356" stop-color="#ffd600"/>
<stop offset="0.436" stop-color="#ff7f00"/>
<stop offset="0.516" stop-color="#ff6300"/>
<stop offset="0.596" stop-color="#ff6300"/>
<stop offset="0.676" stop-color="#ff7900"/>
<stop offset="0.756" stop-color="#ff9900"/>
<stop offset="0.836" stop-color="#ffca00"/>
<stop offset="0.907" stop-color="#fcf000"/>
<stop offset="0.960" stop-color="#ffed00"/>
<stop offset="0.996" stop-color="#ffbf00"/>
</linearGradient>
<linearGradient id="s125" x1="0" y1="0" x2="0" y2="1">
<stop offset="0.013" stop-color="#00f9ff"/>
<stop offset="0.071" stop-color="#00ffbd"/>
<stop offset="0.133" stop-color="#00ff4d"/>
<stop offset="0.204" stop-color="#1aff00"/>
<stop offset="0.276" stop-color="#6eff00"/>
<stop offset="0.356" stop-color="#d7f600"/>
<stop offset="0.436" stop-color="#ffd500"/>
<stop offset="0.516" stop-color="#ffac00"/>
<stop offset="0.596" stop-color="#ffac00"/>
<stop offset="0.676" stop-color="#ffc400"/>
<stop offset="0.756" stop-color="#ffde00"/>
<stop offset="0.836" stop-color="#f4f200"/>
<stop offset="0.907" stop-color="#dcf500"/>
<stop offset="0.960" stop-color="#eaf300"/>
<stop offset="0.996" stop-color="#ffdb00"/>
</linearGradient>
<linearGradient id="s126" x1="0" y1="0" x2="0" y2="1">
<stop offset="0.013" stop-color="#00cdff"/>
<stop offset="0.071" stop-color="#00ffd9"/>
<stop offset="0.133" stop-color="#00ff5f"/>
<stop offset="0.204" stop-color="#00ff02"/>
<stop offset="0.276" stop-color="#3fff00"/>
<stop offset="0.356" stop-color="#9bfe00"/>
<stop offset="0.436" stop-color="#d4f600"/>
<stop offset="0.516" stop-color="#faf100"/>
<stop offset="0.596" stop-color="#fff000"/>
<stop offset="0.676" stop-color="#ecf300"/>
<stop offset="0.756" stop-color="#d9f500"/>
<stop offset="0.836" stop-color="#c6f800"/>
<stop offset="0.907" stop-color="#b3fb00"/>
<stop offset="0.960" stop-color="#c1f900"/>
<stop offset="0.996" stop-color="#e2f400"/>
</linearGradient>
<linearGradient id="s127" x1="0" y1="0" x2="0" y2="1">
<stop offset="0.013" stop-color="#005dff"/>
<stop offset="0.071" stop-color="#00d1ff"/>
<stop offset="0.133" stop-color="#00ff9d"/>
<stop offset="0.204" stop-color="#00ff36"/>
<stop offset="0.276" stop-color="#04ff00"/>
<stop offset="0.356" stop-color="#55ff00"/>
<stop offset="0.436" stop-color="#9efe00"/>
<stop offset="0.516" stop-color="#c4f800"/>
<stop offset="0.596" stop-color="#d2f600"/>
<stop offset="0.676" stop-color="#bff900"/>
<stop offset="0.756" stop-color="#acfc00"/>
<stop offset="0.836" stop-color="#99ff00"/>
<stop offset="0.907" stop-color="#81ff00"/>
<stop offset="0.960" stop-color="#87ff00"/>
<stop offset="0.996" stop-color="#a3fd00"/>
</linearGradient>
<linearGradient id="s128" x1="0" y1="0" x2="0" y2="1">
<stop offset="0.013" stop-color="#0073ff"/>
<stop offset="0.071" stop-color="#00fff1"/>
<stop offset="0.133" stop-color="#00ff63"/>
<stop offset="0.204" stop-color="#07ff00"/>
<stop offset="0.276" stop-color="#5fff00"/>
<stop offset="0.356" stop-color="#b8fa00"/>
<stop offset="0.436" stop-color="#f6f100"/>
<stop offset="0.516" stop-color="#ffd200"/>
<stop offset="0.596" stop-color="#ffc000"/>
<stop offset="0.676" stop-color="#ffdb00"/>
<stop offset="0.756" stop-color="#f6f100"/>
<stop offset="0.836" stop-color="#daf500"/>
<stop offset="0.907" stop-color="#c2f900"/>
<stop offset="0.960" stop-color="#bdf900"/>
<stop offset="0.996" stop-color="#d0f700"/>
</linearGradient>
<linearGradient id="s129" x1="0" y1="0" x2="0" y2="1">
<stop offset="0.013" stop-color="#0069ff"/>
<stop offset="0.071" stop-color="#00eeff"/>
<stop offset="0.133" stop-color="#00ff7c"/>
<stop offset="0.204" stop-color="#00ff09"/>
<stop offset="0.276" stop-color="#65ff00"/>
<stop offset="0.356" stop-color="#e3f400"/>
<stop offset="0.436" stop-color="#ffba00"/>
<stop offset="0.516" stop-color="#ff9d00"/>
<stop offset="0.596" stop-color="#ff9700"/>
<stop offset="0.676" stop-color="#ffb700"/>
<stop offset="0.756" stop-color="#ffe900"/>
<stop offset="0.836" stop-color="#d5f600"/>
<stop offset="0.907" stop-color="#b4fb00"/>
<stop offset="0.960" stop-color="#a5fd00"/>
<stop offset="0.996" stop-color="#b8fa00"/>
</linearGradient>
<linearGradient id="s130" x1="0" y1="0" x2="0" y2="1">
<stop offset="0.013" stop-color="#003eff"/>
<stop offset="0.071" stop-color="#00afff"/>
<stop offset="0.133" stop-color="#00ffc5"/>
<stop offset="0.204" stop-color="#00ff38"/>
<stop offset="0.276" stop-color="#46ff00"/>
<stop offset="0.356" stop-color="#d5f600"/>
<stop offset="0.436" stop-color="#ffcb00"/>
<stop offset="0.516" stop-color="#ffae00"/>
<stop offset="0.596" stop-color="#ffa800"/>
<stop offset="0.676" stop-color="#ffc800"/>
<stop offset="0.756" stop-color="#f7f100"/>
<stop offset="0.836" stop-color="#c7f800"/>
<stop offset="0.907" stop-color="#a6fd00"/>
<stop offset="0.960" stop-color="#97ff00"/>
<stop offset="0.996" stop-color="#aafc00"/>
</linearGradient>
<linearGradient id="s131" x1="0" y1="0" x2="0" y2="1">
<stop offset="0.013" stop-color="#1400ff"/>
<stop offset="0.071" stop-color="#0031ff"/>
<stop offset="0.133" stop-color="#009eff"/>
<stop offset="0.204" stop-color="#00ffae"/>
<stop offset="0.276" stop-color="#00ff1c"/>
<stop offset="0.356" stop-color="#67ff00"/>
<stop offset="0.436" stop-color="#b0fb00"/>
<stop offset="0.516" stop-color="#d1f700"/>
<stop offset="0.596" stop-color="#e0f400"/>
<stop offset="0.676" stop-color="#caf800"/>
<stop offset="0.756" stop-color="#b0fb00"/>
<stop offset="0.836" stop-color="#92ff00"/>
<stop offset="0.907" stop-color="#73ff00"/>
<stop offset="0.960" stop-color="#6dff00"/>
<stop offset="0.996" stop-color="#86ff00"/>
</linearGradient>
<linearGradient id="s132" x1="0" y1="0" x2="0" y2="1">
<stop offset="0.013" stop-color="#4000ff"/>
<stop offset="0.071" stop-color="#1c00ff"/>
<stop offset="0.133" stop-color="#002dff"/>
<stop offset="0.204" stop-color="#00deff"/>
<stop offset="0.276" stop-color="#00ff60"/>
<stop offset="0.356" stop-color="#18ff00"/>
<stop offset="0.436" stop-color="#69ff00"/>
<stop offset="0.516" stop-color="#a3fd00"/>
<stop offset="0.596" stop-color="#b6fa00"/>
<stop offset="0.676" stop-color="#adfc00"/>
<stop offset="0.756" stop-color="#9afe00"/>
<stop offset="0.836" stop-color="#82ff00"/>
<stop offset="0.907" stop-color="#69ff00"/>
<stop offset="0.960" stop-color="#69ff00"/>
<stop offset="0.996" stop-color="#82ff00"/>
</linearGradient>
<linearGradient id="s133" x1="0" y1="0" x2="0" y2="1">
<stop offset="0.013" stop-color="#5300ff"/>
<stop offset="0.071" stop-color="#3700ff"/>
<stop offset="0.133" stop-color="#0b00ff"/>
<stop offset="0.204" stop-color="#0088ff"/>
<stop offset="0.276" stop-color="#00ffa8"/>
<stop offset="0.356" stop-color="#00ff12"/>
<stop offset="0.436" stop-color="#4aff00"/>
<stop offset="0.516" stop-color="#9afe00"/>
<stop offset="0.596" stop-color="#b2fb00"/>
<stop offset="0.676" stop-color="#b2fb00"/>
<stop offset="0.756" stop-color="#9ffe00"/>
<stop offset="0.836" stop-color="#89ff00"/>
<stop offset="0.907" stop-color="#70ff00"/>
<stop offset="0.960" stop-color="#70ff00"/>
<stop offset="0.996" stop-color="#89ff00"/>
</linearGradient>
<linearGradient id="s134" x1="0" y1="0" x2="0" y2="1">
<stop offset="0.013" stop-color="#5e00ff"/>
<stop offset="0.071" stop-color="#4700ff"/>
<stop offset="0.133" stop-color="#1500ff"/>
<stop offset="0.204" stop-color="#0044ff"/>
<stop offset="0.276" stop-color="#00fff4"/>
<stop offset="0.356" stop-color="#00ff36"/>
<stop offset="0.436" stop-color="#31ff00"/>
<stop offset="0.516" stop-color="#8eff00"/>
<stop offset="0.596" stop-color="#b2fb00"/>
<stop offset="0.676" stop-color="#b2fb00"/>
<stop offset="0.756" stop-color="#9efe00"/>
<stop offset="0.836" stop-color="#88ff00"/>
<stop offset="0.907" stop-color="#6fff00"/>
<stop offset="0.960" stop-color="#6fff00"/>
<stop offset="0.996" stop-color="#88ff00"/>
</linearGradient>
<linearGradient id="s135" x1="0" y1="0" x2="0" y2="1">
<stop offset="0.013" stop-color="#5f00ff"/>
<stop offset="0.071" stop-color="#4a00ff"/>
<stop offset="0.133" stop-color="#1100ff"/>
<stop offset="0.204" stop-color="#0054ff"/>
<stop offset="0.276" stop-color="#00ffda"/>
<stop offset="0.356" stop-color="#00ff21"/>
<stop offset="0.436" stop-color="#54ff00"/>
<stop offset="0.516" stop-color="#abfc00"/>
<stop offset="0.596" stop-color="#c8f800"/>
<stop offset="0.676" stop-color="#bef900"/>
<stop offset="0.756" stop-color="#a6fd00"/>
<stop offset="0.836" stop-color="#8cff00"/>
<stop offset="0.907" stop-color="#73ff00"/>
<stop offset="0.960" stop-color="#73ff00"/>
<stop offset="0.996" stop-color="#86ff00"/>
</linearGradient>
<linearGradient id="s136" x1="0" y1="0" x2="0" y2="1">
<stop offset="0.013" stop-color="#6100ff"/>
<stop offset="0.071" stop-color="#4c00ff"/>
<stop offset="0.133" stop-color="#0900ff"/>
<stop offset="0.204" stop-color="#00abff"/>
<stop offset="0.276" stop-color="#00ff85"/>
<stop offset="0.356" stop-color="#0dff00"/>
<stop offset="0.436" stop-color="#8aff00"/>
<stop offset="0.516" stop-color="#cbf700"/>
<stop offset="0.596" stop-color="#d4f600"/>
<stop offset="0.676" stop-color="#b8fa00"/>
<stop offset="0.756" stop-color="#96ff00"/>
<stop offset="0.836" stop-color="#6bff00"/>
<stop offset="0.907" stop-color="#52ff00"/>
<stop offset="0.960" stop-color="#52ff00"/>
<stop offset="0.996" stop-color="#58ff00"/>
</linearGradient>
<linearGradient id="s137" x1="0" y1="0" x2="0" y2="1">
<stop offset="0.013" stop-color="#6c00ff"/>
<stop offset="0.071" stop-color="#5700ff"/>
<stop offset="0.133" stop-color="#0f00ff"/>
<stop offset="0.204" stop-color="#009bff"/>
<stop offset="0.276" stop-color="#00ff97"/>
<stop offset="0.356" stop-color="#00ff0a"/>
<stop offset="0.436" stop-color="#6cff00"/>
<stop offset="0.516" stop-color="#b0fb00"/>
<stop offset="0.596" stop-color="#b0fb00"/>
<stop offset="0.676" stop-color="#85ff00"/>
<stop offset="0.756" stop-color="#53ff00"/>
<stop offset="0.836" stop-color="#2aff00"/>
<stop offset="0.907" stop-color="#11ff00"/>
<stop offset="0.960" stop-color="#11ff00"/>
<stop offset="0.996" stop-color="#11ff00"/>
</linearGradient>
<linearGradient id="s138" x1="0" y1="0" x2="0" y2="1">
<stop offset="0.013" stop-color="#6900ff"/>
<stop offset="0.071" stop-color="#5500ff"/>
<stop offset="0.133" stop-color="#0c00ff"/>
<stop offset="0.204" stop-color="#008dff"/>
<stop offset="0.276" stop-color="#00ffb6"/>
<stop offset="0.356" stop-color="#00ff15"/>
<stop offset="0.436" stop-color="#56ff00"/>
<stop offset="0.516" stop-color="#9efe00"/>
<stop offset="0.596" stop-color="#9efe00"/>
<stop offset="0.676" stop-color="#6fff00"/>
<stop offset="0.756" stop-color="#3dff00"/>
<stop offset="0.836" stop-color="#24ff00"/>
<stop offset="0.907" stop-color="#0bff00"/>
<stop offset="0.960" stop-color="#0bff00"/>
<stop offset="0.996" stop-color="#0bff00"/>
</linearGradient>
<linearGradient id="s139" x1="0" y1="0" x2="0" y2="1">
<stop offset="0.013" stop-color="#6e00ff"/>
<stop offset="0.071" stop-color="#5200ff"/>
<stop offset="0.133" stop-color="#1e00ff"/>
<stop offset="0.204" stop-color="#002fff"/>
<stop offset="0.276" stop-color="#0064ff"/>
<stop offset="0.356" stop-color="#00ffdb"/>
<stop offset="0.436" stop-color="#00ff26"/>
<stop offset="0.516" stop-color="#2cff00"/>
<stop offset="0.596" stop-color="#3dff00"/>
<stop offset="0.676" stop-color="#2cff00"/>
<stop offset="0.756" stop-color="#0bff00"/>
<stop offset="0.836" stop-color="#00ff05"/>
<stop offset="0.907" stop-color="#00ff12"/>
<stop offset="0.960" stop-color="#00ff19"/>
<stop offset="0.996" stop-color="#00ff19"/>
</linearGradient>
<linearGradient id="s140" x1="0" y1="0" x2="0" y2="1">
<stop offset="0.013" stop-color="#5f00ff"/>
<stop offset="0.071" stop-color="#4300ff"/>
<stop offset="0.133" stop-color="#1900ff"/>
<stop offset="0.204" stop-color="#000bff"/>
<stop offset="0.276" stop-color="#0023ff"/>
<stop offset="0.356" stop-color="#00ccff"/>
<stop offset="0.436" stop-color="#00ff6f"/>
<stop offset="0.516" stop-color="#05ff00"/>
<stop offset="0.596" stop-color="#47ff00"/>
<stop offset="0.676" stop-color="#50ff00"/>
<stop offset="0.756" stop-color="#3dff00"/>
<stop offset="0.836" stop-color="#31ff00"/>
<stop offset="0.907" stop-color="#21ff00"/>
<stop offset="0.960" stop-color="#12ff00"/>
<stop offset="0.996" stop-color="#0eff00"/>
</linearGradient>
<linearGradient id="s141" x1="0" y1="0" x2="0" y2="1">
<stop offset="0.013" stop-color="#6a00ff"/>
<stop offset="0.071" stop-color="#5300ff"/>
<stop offset="0.133" stop-color="#2900ff"/>
<stop offset="0.204" stop-color="#0200ff"/>
<stop offset="0.276" stop-color="#000eff"/>
<stop offset="0.356" stop-color="#004cff"/>
<stop offset="0.436" stop-color="#00b6ff"/>
<stop offset="0.516" stop-color="#00ff68"/>
<stop offset="0.596" stop-color="#11ff00"/>
<stop offset="0.676" stop-color="#2dff00"/>
<stop offset="0.756" stop-color="#27ff00"/>
<stop offset="0.836" stop-color="#1bff00"/>
<stop offset="0.907" stop-color="#05ff00"/>
<stop offset="0.960" stop-color="#00ff0e"/>
<stop offset="0.996" stop-color="#00ff15"/>
</linearGradient>
<linearGradient id="s142" x1="0" y1="0" x2="0" y2="1">
<stop offset="0.013" stop-color="#6b00ff"/>
<stop offset="0.071" stop-color="#5700ff"/>
<stop offset="0.133" stop-color="#2d00ff"/>
<stop offset="0.204" stop-color="#0300ff"/>
<stop offset="0.276" stop-color="#0009ff"/>
<stop offset="0.356" stop-color="#0017ff"/>
<stop offset="0.436" stop-color="#0043ff"/>
<stop offset="0.516" stop-color="#00ffb3"/>
<stop offset="0.596" stop-color="#00ff07"/>
<stop offset="0.676" stop-color="#26ff00"/>
<stop offset="0.756" stop-color="#2dff00"/>
<stop offset="0.836" stop-color="#20ff00"/>
<stop offset="0.907" stop-color="#07ff00"/>
<stop offset="0.960" stop-color="#00ff0e"/>
<stop offset="0.996" stop-color="#00ff18"/>
</linearGradient>
<linearGradient id="s143" x1="0" y1="0" x2="0" y2="1">
<stop offset="0.013" stop-color="#6400ff"/>
<stop offset="0.071" stop-color="#5000ff"/>
<stop offset="0.133" stop-color="#2600ff"/>
<stop offset="0.204" stop-color="#0005ff"/>
<stop offset="0.276" stop-color="#0013ff"/>
<stop offset="0.356" stop-color="#0020ff"/>
<stop offset="0.436" stop-color="#0038ff"/>
<stop offset="0.516" stop-color="#00ffd5"/>
<stop offset="0.596" stop-color="#00ff09"/>
<stop offset="0.676" stop-color="#36ff00"/>
<stop offset="0.756" stop-color="#49ff00"/>
<stop offset="0.836" stop-color="#3dff00"/>
<stop offset="0.907" stop-color="#24ff00"/>
<stop offset="0.960" stop-color="#0bff00"/>
<stop offset="0.996" stop-color="#00ff02"/>
</linearGradient>
<linearGradient id="s144" x1="0" y1="0" x2="0" y2="1">
<stop offset="0.013" stop-color="#6e00ff"/>
<stop offset="0.071" stop-color="#5a00ff"/>
<stop offset="0.133" stop-color="#3000ff"/>
<stop offset="0.204" stop-color="#0600ff"/>
<stop offset="0.276" stop-color="#0005ff"/>
<stop offset="0.356" stop-color="#0013ff"/>
<stop offset="0.436" stop-color="#0021ff"/>
<stop offset="0.516" stop-color="#00e1ff"/>
<stop offset="0.596" stop-color="#00ff36"/>
<stop offset="0.676" stop-color="#08ff00"/>
<stop offset="0.756" stop-color="#21ff00"/>
<stop offset="0.836" stop-color="#14ff00"/>
<stop offset="0.907" stop-color="#00ff04"/>
<stop offset="0.960" stop-color="#00ff18"/>
<stop offset="0.996" stop-color="#00ff22"/>
</linearGradient>
<linearGradient id="s145" x1="0" y1="0" x2="0" y2="1">
<stop offset="0.013" stop-color="#6500ff"/>
<stop offset="0.071" stop-color="#5000ff"/>
<stop offset="0.133" stop-color="#2700ff"/>
<stop offset="0.204" stop-color="#0004ff"/>
<stop offset="0.276" stop-color="#0011ff"/>
<stop offset="0.356" stop-color="#001fff"/>
<stop offset="0.436" stop-color="#002dff"/>
<stop offset="0.516" stop-color="#00fff8"/>
<stop offset="0.596" stop-color="#00ff18"/>
<stop offset="0.676" stop-color="#2dff00"/>
<stop offset="0.756" stop-color="#46ff00"/>
<stop offset="0.836" stop-color="#39ff00"/>
<stop offset="0.907" stop-color="#20ff00"/>
<stop offset="0.960" stop-color="#07ff00"/>
<stop offset="0.996" stop-color="#00ff04"/>
</linearGradient>
<linearGradient id="s146" x1="0" y1="0" x2="0" y2="1">
<stop offset="0.013" stop-color="#0025ff"/>
<stop offset="0.071" stop-color="#0055ff"/>
<stop offset="0.133" stop-color="#009aff"/>
<stop offset="0.204" stop-color="#00ffed"/>
<stop offset="0.276" stop-color="#00ff83"/>
<stop offset="0.356" stop-color="#00ff51"/>
<stop offset="0.436" stop-color="#00ff3d"/>
<stop offset="0.516" stop-color="#1eff00"/>
<stop offset="0.596" stop-color="#9afe00"/>
<stop offset="0.676" stop-color="#adfc00"/>
<stop offset="0.756" stop-color="#a8fc00"/>
<stop offset="0.836" stop-color="#95ff00"/>
<stop offset="0.907" stop-color="#7cff00"/>
<stop offset="0.960" stop-color="#7cff00"/>
<stop offset="0.996" stop-color="#8fff00"/>
</linearGradient>
<linearGradient id="s147" x1="0" y1="0" x2="0" y2="1">
<stop offset="0.013" stop-color="#00efff"/>
<stop offset="0.071" stop-color="#00ffd0"/>
<stop offset="0.133" stop-color="#00ff5d"/>
<stop offset="0.204" stop-color="#48ff00"/>
<stop offset="0.276" stop-color="#f3f200"/>
<stop offset="0.356" stop-color="#ff9600"/>
<stop offset="0.436" stop-color="#ff7300"/>
<stop offset="0.516" stop-color="#ff6000"/>
<stop offset="0.596" stop-color="#ff6000"/>
<stop offset="0.676" stop-color="#ff7300"/>
<stop offset="0.756" stop-color="#ff9600"/>
<stop offset="0.836" stop-color="#ffb900"/>
<stop offset="0.907" stop-color="#ffd000"/>
<stop offset="0.960" stop-color="#ffb900"/>
<stop offset="0.996" stop-color="#ff8a00"/>
</linearGradient>
<linearGradient id="s148" x1="0" y1="0" x2="0" y2="1">
<stop offset="0.013" stop-color="#00deff"/>
<stop offset="0.071" stop-color="#00ffe2"/>
<stop offset="0.133" stop-color="#00ff6b"/>
<stop offset="0.204" stop-color="#36ff00"/>
<stop offset="0.276" stop-color="#e5f400"/>
<stop offset="0.356" stop-color="#ffa600"/>
<stop offset="0.436" stop-color="#ff8300"/>
<stop offset="0.516" stop-color="#ff6c00"/>
<stop offset="0.596" stop-color="#ff6c00"/>
<stop offset="0.676" stop-color="#ff8300"/>
<stop offset="0.756" stop-color="#ffa600"/>
<stop offset="0.836" stop-color="#ffc900"/>
<stop offset="0.907" stop-color="#ffe100"/>
<stop offset="0.960" stop-color="#ffc900"/>
<stop offset="0.996" stop-color="#ff9b00"/>
</linearGradient>
<linearGradient id="s149" x1="0" y1="0" x2="0" y2="1">
<stop offset="0.013" stop-color="#00c0ff"/>
<stop offset="0.071" stop-color="#00fff6"/>
<stop offset="0.133" stop-color="#00ff76"/>
<stop offset="0.204" stop-color="#25ff00"/>
<stop offset="0.276" stop-color="#d9f500"/>
<stop offset="0.356" stop-color="#ffb300"/>
<stop offset="0.436" stop-color="#ff8a00"/>
<stop offset="0.516" stop-color="#ff7600"/>
<stop offset="0.596" stop-color="#ff7600"/>
<stop offset="0.676" stop-color="#ff8d00"/>
<stop offset="0.756" stop-color="#ffb300"/>
<stop offset="0.836" stop-color="#ffd900"/>
<stop offset="0.907" stop-color="#fff000"/>
<stop offset="0.960" stop-color="#ffd900"/>
<stop offset="0.996" stop-color="#ffaa00"/>
</linearGradient>
<linearGradient id="s150" x1="0" y1="0" x2="0" y2="1">
<stop offset="0.013" stop-color="#00fffc"/>
<stop offset="0.071" stop-color="#00ffa1"/>
<stop offset="0.133" stop-color="#00ff28"/>
<stop offset="0.204" stop-color="#80ff00"/>
<stop offset="0.276" stop-color="#ffca00"/>
<stop offset="0.356" stop-color="#ff5e00"/>
<stop offset="0.436" stop-color="#ff4300"/>
<stop offset="0.516" stop-color="#ff3b00"/>
<stop offset="0.596" stop-color="#ff3b00"/>
<stop offset="0.676" stop-color="#ff4700"/>
<stop offset="0.756" stop-color="#ff5e00"/>
<stop offset="0.836" stop-color="#ff8400"/>
<stop offset="0.907" stop-color="#ff9b00"/>
<stop offset="0.960" stop-color="#ff8400"/>
<stop offset="0.996" stop-color="#ff5c00"/>
</linearGradient>
<linearGradient id="s151" x1="0" y1="0" x2="0" y2="1">
<stop offset="0.013" stop-color="#00f8ff"/>
<stop offset="0.071" stop-color="#00ffa2"/>
<stop offset="0.133" stop-color="#00ff24"/>
<stop offset="0.204" stop-color="#83ff00"/>
<stop offset="0.276" stop-color="#ffc800"/>
<stop offset="0.356" stop-color="#ff5b00"/>
<stop offset="0.436" stop-color="#ff3d00"/>
<stop offset="0.516" stop-color="#ff3700"/>
<stop offset="0.596" stop-color="#ff3700"/>
<stop offset="0.676" stop-color="#ff4300"/>
<stop offset="0.756" stop-color="#ff5b00"/>
<stop offset="0.836" stop-color="#ff8200"/>
<stop offset="0.907" stop-color="#ff9900"/>
<stop offset="0.960" stop-color="#ff8200"/>
<stop offset="0.996" stop-color="#ff5b00"/>
</linearGradient>
<linearGradient id="s152" x1="0" y1="0" x2="0" y2="1">
<stop offset="0.013" stop-color="#00ffee"/>
<stop offset="0.071" stop-color="#00ff8a"/>
<stop offset="0.133" stop-color="#00ff11"/>
<stop offset="0.204" stop-color="#99ff00"/>
<stop offset="0.276" stop-color="#ffb200"/>
<stop offset="0.356" stop-color="#ff5000"/>
<stop offset="0.436" stop-color="#ff3200"/>
<stop offset="0.516" stop-color="#ff2c00"/>
<stop offset="0.596" stop-color="#ff2c00"/>
<stop offset="0.676" stop-color="#ff3800"/>
<stop offset="0.756" stop-color="#ff5000"/>
<stop offset="0.836" stop-color="#ff6c00"/>
<stop offset="0.907" stop-color="#ff8300"/>
<stop offset="0.960" stop-color="#ff6c00"/>
<stop offset="0.996" stop-color="#ff5000"/>
</linearGradient>
<linearGradient id="s153" x1="0" y1="0" x2="0" y2="1">
<stop offset="0.013" stop-color="#00ffed"/>
<stop offset="0.071" stop-color="#00ff89"/>
<stop offset="0.133" stop-color="#00ff0f"/>
<stop offset="0.204" stop-color="#9afe00"/>
<stop offset="0.276" stop-color="#ffb000"/>
<stop offset="0.356" stop-color="#ff4f00"/>
<stop offset="0.436" stop-color="#ff3100"/>
<stop offset="0.516" stop-color="#ff2b00"/>
<stop offset="0.596" stop-color="#ff2b00"/>
<stop offset="0.676" stop-color="#ff3700"/>
<stop offset="0.756" stop-color="#ff4f00"/>
<stop offset="0.836" stop-color="#ff6a00"/>
<stop offset="0.907" stop-color="#ff8200"/>
<stop offset="0.960" stop-color="#ff6a00"/>
<stop offset="0.996" stop-color="#ff4f00"/>
</linearGradient>
<linearGradient id="s154" x1="0" y1="0" x2="0" y2="1">
<stop offset="0.013" stop-color="#00bbff"/>
<stop offset="0.071" stop-color="#00ffef"/>
<stop offset="0.133" stop-color="#00ff68"/>
<stop offset="0.204" stop-color="#25ff00"/>
<stop offset="0.276" stop-color="#cbf700"/>
<stop offset="0.356" stop-color="#ffba00"/>
<stop offset="0.436" stop-color="#ff8800"/>
<stop offset="0.516" stop-color="#ff7400"/>
<stop offset="0.596" stop-color="#ff8400"/>
<stop offset="0.676" stop-color="#ff9b00"/>
<stop offset="0.756" stop-color="#ffba00"/>
<stop offset="0.836" stop-color="#ffda00"/>
<stop offset="0.907" stop-color="#ffd200"/>
<stop offset="0.960" stop-color="#ff9b00"/>
<stop offset="0.996" stop-color="#ff6d00"/>
</linearGradient>
<linearGradient id="s155" x1="0" y1="0" x2="0" y2="1">
<stop offset="0.013" stop-color="#00aaff"/>
<stop offset="0.071" stop-color="#00e5ff"/>
<stop offset="0.133" stop-color="#00ffa9"/>
<stop offset="0.204" stop-color="#00ff3a"/>
<stop offset="0.276" stop-color="#56ff00"/>
<stop offset="0.356" stop-color="#c5f800"/>
<stop offset="0.436" stop-color="#f8f100"/>
<stop offset="0.516" stop-color="#ffca00"/>
<stop offset="0.596" stop-color="#ffca00"/>
<stop offset="0.676" stop-color="#ffd200"/>
<stop offset="0.756" stop-color="#ffda00"/>
<stop offset="0.836" stop-color="#ffda00"/>
<stop offset="0.907" stop-color="#ffbb00"/>
<stop offset="0.960" stop-color="#ff7900"/>
<stop offset="0.996" stop-color="#ff5900"/>
</linearGradient>
<linearGradient id="s156" x1="0" y1="0" x2="0" y2="1">
<stop offset="0.013" stop-color="#004bff"/>
<stop offset="0.071" stop-color="#0066ff"/>
<stop offset="0.133" stop-color="#00a6ff"/>
<stop offset="0.204" stop-color="#00e5ff"/>
<stop offset="0.276" stop-color="#00ff9c"/>
<stop offset="0.356" stop-color="#00ff33"/>
<stop offset="0.436" stop-color="#24ff00"/>
<stop offset="0.516" stop-color="#88ff00"/>
<stop offset="0.596" stop-color="#b2fb00"/>
<stop offset="0.676" stop-color="#c5f800"/>
<stop offset="0.756" stop-color="#d8f600"/>
<stop offset="0.836" stop-color="#fef000"/>
<stop offset="0.907" stop-color="#ffc200"/>
<stop offset="0.960" stop-color="#ff8800"/>
<stop offset="0.996" stop-color="#ff6500"/>
</linearGradient>
<linearGradient id="s157" x1="0" y1="0" x2="0" y2="1">
<stop offset="0.013" stop-color="#0018ff"/>
<stop offset="0.071" stop-color="#0018ff"/>
<stop offset="0.133" stop-color="#0025ff"/>
<stop offset="0.204" stop-color="#0033ff"/>
<stop offset="0.276" stop-color="#004eff"/>
<stop offset="0.356" stop-color="#00a5ff"/>
<stop offset="0.436" stop-color="#00ffc3"/>
<stop offset="0.516" stop-color="#00ff2a"/>
<stop offset="0.596" stop-color="#16ff00"/>
<stop offset="0.676" stop-color="#48ff00"/>
<stop offset="0.756" stop-color="#93ff00"/>
<stop offset="0.836" stop-color="#e0f400"/>
<stop offset="0.907" stop-color="#ffd000"/>
<stop offset="0.960" stop-color="#ff8a00"/>
<stop offset="0.996" stop-color="#ff5f00"/>
</linearGradient>
<linearGradient id="s158" x1="0" y1="0" x2="0" y2="1">
<stop offset="0.013" stop-color="#001aff"/>
<stop offset="0.071" stop-color="#001aff"/>
<stop offset="0.133" stop-color="#0028ff"/>
<stop offset="0.204" stop-color="#0035ff"/>
<stop offset="0.276" stop-color="#0051ff"/>
<stop offset="0.356" stop-color="#00abff"/>
<stop offset="0.436" stop-color="#00ffbd"/>
<stop offset="0.516" stop-color="#00ff25"/>
<stop offset="0.596" stop-color="#1dff00"/>
<stop offset="0.676" stop-color="#4fff00"/>
<stop offset="0.756" stop-color="#99ff00"/>
<stop offset="0.836" stop-color="#e5f400"/>
<stop offset="0.907" stop-color="#ffca00"/>
<stop offset="0.960" stop-color="#ff8400"/>
<stop offset="0.996" stop-color="#ff5c00"/>
</linearGradient>
<linearGradient id="s159" x1="0" y1="0" x2="0" y2="1">
<stop offset="0.013" stop-color="#005aff"/>
<stop offset="0.071" stop-color="#006fff"/>
<stop offset="0.133" stop-color="#0089ff"/>
<stop offset="0.204" stop-color="#009aff"/>
<stop offset="0.276" stop-color="#00abff"/>
<stop offset="0.356" stop-color="#00ddff"/>
<stop offset="0.436" stop-color="#00ffb1"/>
<stop offset="0.516" stop-color="#00ff33"/>
<stop offset="0.596" stop-color="#03ff00"/>
<stop offset="0.676" stop-color="#35ff00"/>
<stop offset="0.756" stop-color="#80ff00"/>
<stop offset="0.836" stop-color="#d2f600"/>
<stop offset="0.907" stop-color="#ffe100"/>
<stop offset="0.960" stop-color="#ff9b00"/>
<stop offset="0.996" stop-color="#ff6d00"/>
</linearGradient>
<linearGradient id="s160" x1="0" y1="0" x2="0" y2="1">
<stop offset="0.013" stop-color="#00c5ff"/>
<stop offset="0.071" stop-color="#00ffee"/>
<stop offset="0.133" stop-color="#00ffbc"/>
<stop offset="0.204" stop-color="#00ffa3"/>
<stop offset="0.276" stop-color="#00ffa3"/>
<stop offset="0.356" stop-color="#00ffa3"/>
<stop offset="0.436" stop-color="#00ff7e"/>
<stop offset="0.516" stop-color="#00ff38"/>
<stop offset="0.596" stop-color="#00ff10"/>
<stop offset="0.676" stop-color="#1dff00"/>
<stop offset="0.756" stop-color="#68ff00"/>
<stop offset="0.836" stop-color="#c0f900"/>
<stop offset="0.907" stop-color="#f9f100"/>
<stop offset="0.960" stop-color="#ffb100"/>
<stop offset="0.996" stop-color="#ff8300"/>
</linearGradient>
<linearGradient id="s161" x1="0" y1="0" x2="0" y2="1">
<stop offset="0.013" stop-color="#00e8ff"/>
<stop offset="0.071" stop-color="#00ffcb"/>
<stop offset="0.133" stop-color="#00ff99"/>
<stop offset="0.204" stop-color="#00ff81"/>
<stop offset="0.276" stop-color="#00ff81"/>
<stop offset="0.356" stop-color="#00ff81"/>
<stop offset="0.436" stop-color="#00ff63"/>
<stop offset="0.516" stop-color="#00ff1d"/>
<stop offset="0.596" stop-color="#0eff00"/>
<stop offset="0.676" stop-color="#40ff00"/>
<stop offset="0.756" stop-color="#8bff00"/>
<stop offset="0.836" stop-color="#daf500"/>
<stop offset="0.907" stop-color="#ffd700"/>
<stop offset="0.960" stop-color="#ff9100"/>
<stop offset="0.996" stop-color="#ff6300"/>
</linearGradient>
<linearGradient id="s162" x1="0" y1="0" x2="0" y2="1">
<stop offset="0.013" stop-color="#0057ff"/>
<stop offset="0.071" stop-color="#0080ff"/>
<stop offset="0.133" stop-color="#0099ff"/>
<stop offset="0.204" stop-color="#00a6ff"/>
<stop offset="0.276" stop-color="#00a6ff"/>
<stop offset="0.356" stop-color="#00acff"/>
<stop offset="0.436" stop-color="#00c5ff"/>
<stop offset="0.516" stop-color="#00ffc2"/>
<stop offset="0.596" stop-color="#00ff3d"/>
<stop offset="0.676" stop-color="#00ff01"/>
<stop offset="0.756" stop-color="#49ff00"/>
<stop offset="0.836" stop-color="#a8fc00"/>
<stop offset="0.907" stop-color="#e1f400"/>
<stop offset="0.960" stop-color="#ffce00"/>
<stop offset="0.996" stop-color="#ff9400"/>
</linearGradient>
<linearGradient id="s163" x1="0" y1="0" x2="0" y2="1">
<stop offset="0.013" stop-color="#0016ff"/>
<stop offset="0.071" stop-color="#0016ff"/>
<stop offset="0.133" stop-color="#0016ff"/>
<stop offset="0.204" stop-color="#0016ff"/>
<stop offset="0.276" stop-color="#0016ff"/>
<stop offset="0.356" stop-color="#0023ff"/>
<stop offset="0.436" stop-color="#0031ff"/>
<stop offset="0.516" stop-color="#00d1ff"/>
<stop offset="0.596" stop-color="#00ff43"/>
<stop offset="0.676" stop-color="#10ff00"/>
<stop offset="0.756" stop-color="#5bff00"/>
<stop offset="0.836" stop-color="#b5fb00"/>
<stop offset="0.907" stop-color="#eff200"/>
<stop offset="0.960" stop-color="#ffbe00"/>
<stop offset="0.996" stop-color="#ff7800"/>
</linearGradient>
<linearGradient id="s164" x1="0" y1="0" x2="0" y2="1">
<stop offset="0.013" stop-color="#0009ff"/>
<stop offset="0.071" stop-color="#0009ff"/>
<stop offset="0.133" stop-color="#0009ff"/>
<stop offset="0.204" stop-color="#0009ff"/>
<stop offset="0.276" stop-color="#0009ff"/>
<stop offset="0.356" stop-color="#0017ff"/>
<stop offset="0.436" stop-color="#0024ff"/>
<stop offset="0.516" stop-color="#00aaff"/>
<stop offset="0.596" stop-color="#00ff62"/>
<stop offset="0.676" stop-color="#00ff12"/>
<stop offset="0.756" stop-color="#34ff00"/>
<stop offset="0.836" stop-color="#98ff00"/>
<stop offset="0.907" stop-color="#d1f700"/>
<stop offset="0.960" stop-color="#ffe200"/>
<stop offset="0.996" stop-color="#ff9c00"/>
</linearGradient>
<linearGradient id="s165" x1="0" y1="0" x2="0" y2="1">
<stop offset="0.013" stop-color="#0050ff"/>
<stop offset="0.071" stop-color="#004bff"/>
<stop offset="0.133" stop-color="#0078ff"/>
<stop offset="0.204" stop-color="#009fff"/>
<stop offset="0.276" stop-color="#00bcff"/>
<stop offset="0.356" stop-color="#00d5ff"/>
<stop offset="0.436" stop-color="#00ddff"/>
<stop offset="0.516" stop-color="#00ffce"/>
<stop offset="0.596" stop-color="#00ff40"/>
<stop offset="0.676" stop-color="#00ff04"/>
<stop offset="0.756" stop-color="#46ff00"/>
<stop offset="0.836" stop-color="#a5fd00"/>
<stop offset="0.907" stop-color="#dff500"/>
<stop offset="0.960" stop-color="#ffd100"/>
<stop offset="0.996" stop-color="#ff9300"/>
</linearGradient>
<linearGradient id="s166" x1="0" y1="0" x2="0" y2="1">
<stop offset="0.013" stop-color="#00caff"/>
<stop offset="0.071" stop-color="#00ffe9"/>
<stop offset="0.133" stop-color="#00ff70"/>
<stop offset="0.204" stop-color="#00ff16"/>
<stop offset="0.276" stop-color="#3bff00"/>
<stop offset="0.356" stop-color="#6dff00"/>
<stop offset="0.436" stop-color="#6dff00"/>
<stop offset="0.516" stop-color="#3bff00"/>
<stop offset="0.596" stop-color="#22ff00"/>
<stop offset="0.676" stop-color="#3bff00"/>
<stop offset="0.756" stop-color="#86ff00"/>
<stop offset="0.836" stop-color="#d6f600"/>
<stop offset="0.907" stop-color="#ffdc00"/>
<stop offset="0.960" stop-color="#ff9600"/>
<stop offset="0.996" stop-color="#ff6700"/>
</linearGradient>
<linearGradient id="s167" x1="0" y1="0" x2="0" y2="1">
<stop offset="0.013" stop-color="#00ceff"/>
<stop offset="0.071" stop-color="#00ffe5"/>
<stop offset="0.133" stop-color="#00ff6d"/>
<stop offset="0.204" stop-color="#00ff13"/>
<stop offset="0.276" stop-color="#40ff00"/>
<stop offset="0.356" stop-color="#72ff00"/>
<stop offset="0.436" stop-color="#72ff00"/>
<stop offset="0.516" stop-color="#40ff00"/>
<stop offset="0.596" stop-color="#27ff00"/>
<stop offset="0.676" stop-color="#40ff00"/>
<stop offset="0.756" stop-color="#8bff00"/>
<stop offset="0.836" stop-color="#daf500"/>
<stop offset="0.907" stop-color="#ffd700"/>
<stop offset="0.960" stop-color="#ff9100"/>
<stop offset="0.996" stop-color="#ff6300"/>
</linearGradient>
<linearGradient id="s168" x1="0" y1="0" x2="0" y2="1">
<stop offset="0.013" stop-color="#00c1ff"/>
<stop offset="0.071" stop-color="#00fbff"/>
<stop offset="0.133" stop-color="#00ff9f"/>
<stop offset="0.204" stop-color="#00ff42"/>
<stop offset="0.276" stop-color="#26ff00"/>
<stop offset="0.356" stop-color="#7eff00"/>
<stop offset="0.436" stop-color="#96ff00"/>
<stop offset="0.516" stop-color="#7eff00"/>
<stop offset="0.596" stop-color="#6dff00"/>
<stop offset="0.676" stop-color="#86ff00"/>
<stop offset="0.756" stop-color="#bdf900"/>
<stop offset="0.836" stop-color="#ffe400"/>
<stop offset="0.907" stop-color="#ff9e00"/>
<stop offset="0.960" stop-color="#ff5e00"/>
<stop offset="0.996" stop-color="#ff4800"/>
</linearGradient>
<linearGradient id="s169" x1="0" y1="0" x2="0" y2="1">
<stop offset="0.013" stop-color="#0029ff"/>
<stop offset="0.071" stop-color="#0044ff"/>
<stop offset="0.133" stop-color="#006bff"/>
<stop offset="0.204" stop-color="#00d1ff"/>
<stop offset="0.276" stop-color="#00ff75"/>
<stop offset="0.356" stop-color="#10ff00"/>
<stop offset="0.436" stop-color="#5bff00"/>
<stop offset="0.516" stop-color="#74ff00"/>
<stop offset="0.596" stop-color="#74ff00"/>
<stop offset="0.676" stop-color="#8dff00"/>
<stop offset="0.756" stop-color="#b5fb00"/>
<stop offset="0.836" stop-color="#ffed00"/>
<stop offset="0.907" stop-color="#ffa700"/>
<stop offset="0.960" stop-color="#ff6200"/>
<stop offset="0.996" stop-color="#ff5000"/>
</linearGradient>
<linearGradient id="s170" x1="0" y1="0" x2="0" y2="1">
<stop offset="0.013" stop-color="#00c5ff"/>
<stop offset="0.071" stop-color="#00ffde"/>
<stop offset="0.133" stop-color="#00ff5a"/>
<stop offset="0.204" stop-color="#2eff00"/>
<stop offset="0.276" stop-color="#c3f900"/>
<stop offset="0.356" stop-color="#ffd900"/>
<stop offset="0.436" stop-color="#ffb200"/>
<stop offset="0.516" stop-color="#ffaa00"/>
<stop offset="0.596" stop-color="#ffb900"/>
<stop offset="0.676" stop-color="#ffc100"/>
<stop offset="0.756" stop-color="#ffc100"/>
<stop offset="0.836" stop-color="#ffa200"/>
<stop offset="0.907" stop-color="#ff7b00"/>
<stop offset="0.960" stop-color="#ff5400"/>
<stop offset="0.996" stop-color="#ff3e00"/>
</linearGradient>
<linearGradient id="s171" x1="0" y1="0" x2="0" y2="1">
<stop offset="0.013" stop-color="#00ffff"/>
<stop offset="0.071" stop-color="#00ff82"/>
<stop offset="0.133" stop-color="#19ff00"/>
<stop offset="0.204" stop-color="#c5f800"/>
<stop offset="0.276" stop-color="#ffaa00"/>
<stop offset="0.356" stop-color="#ff6400"/>
<stop offset="0.436" stop-color="#ff5800"/>
<stop offset="0.516" stop-color="#ff5800"/>
<stop offset="0.596" stop-color="#ff6400"/>
<stop offset="0.676" stop-color="#ff7c00"/>
<stop offset="0.756" stop-color="#ff9300"/>
<stop offset="0.836" stop-color="#ff9300"/>
<stop offset="0.907" stop-color="#ff7c00"/>
<stop offset="0.960" stop-color="#ff5800"/>
<stop offset="0.996" stop-color="#ff4000"/>
</linearGradient>
<linearGradient id="s172" x1="0" y1="0" x2="0" y2="1">
<stop offset="0.013" stop-color="#00d9ff"/>
<stop offset="0.071" stop-color="#00ffa8"/>
<stop offset="0.133" stop-color="#00ff0a"/>
<stop offset="0.204" stop-color="#a9fc00"/>
<stop offset="0.276" stop-color="#ffcd00"/>
<stop offset="0.356" stop-color="#ff8700"/>
<stop offset="0.436" stop-color="#ff7000"/>
<stop offset="0.516" stop-color="#ff7000"/>
<stop offset="0.596" stop-color="#ff8700"/>
<stop offset="0.676" stop-color="#ff9f00"/>
<stop offset="0.756" stop-color="#ffb600"/>
<stop offset="0.836" stop-color="#ffb600"/>
<stop offset="0.907" stop-color="#ff9f00"/>
<stop offset="0.960" stop-color="#ff7000"/>
<stop offset="0.996" stop-color="#ff5200"/>
</linearGradient>
<linearGradient id="s173" x1="0" y1="0" x2="0" y2="1">
<stop offset="0.013" stop-color="#00b7ff"/>
<stop offset="0.071" stop-color="#00ffca"/>
<stop offset="0.133" stop-color="#00ff25"/>
<stop offset="0.204" stop-color="#87ff00"/>
<stop offset="0.276" stop-color="#f3f200"/>
<stop offset="0.356" stop-color="#ffb800"/>
<stop offset="0.436" stop-color="#ffa100"/>
<stop offset="0.516" stop-color="#ffa100"/>
<stop offset="0.596" stop-color="#ffb300"/>
<stop offset="0.676" stop-color="#ffc400"/>
<stop offset="0.756" stop-color="#ffd600"/>
<stop offset="0.836" stop-color="#ffd600"/>
<stop offset="0.907" stop-color="#ffbe00"/>
<stop offset="0.960" stop-color="#ff9000"/>
<stop offset="0.996" stop-color="#ff6200"/>
</linearGradient>
<linearGradient id="s174" x1="0" y1="0" x2="0" y2="1">
<stop offset="0.013" stop-color="#00a3ff"/>
<stop offset="0.071" stop-color="#00ffde"/>
<stop offset="0.133" stop-color="#00ff36"/>
<stop offset="0.204" stop-color="#66ff00"/>
<stop offset="0.276" stop-color="#c7f800"/>
<stop offset="0.356" stop-color="#ffee00"/>
<stop offset="0.436" stop-color="#ffd700"/>
<stop offset="0.516" stop-color="#ffd700"/>
<stop offset="0.596" stop-color="#ffdd00"/>
<stop offset="0.676" stop-color="#ffe300"/>
<stop offset="0.756" stop-color="#ffe900"/>
<stop offset="0.836" stop-color="#ffe900"/>
<stop offset="0.907" stop-color="#ffd100"/>
<stop offset="0.960" stop-color="#ffa300"/>
<stop offset="0.996" stop-color="#ff7400"/>
</linearGradient>
<linearGradient id="s175" x1="0" y1="0" x2="0" y2="1">
<stop offset="0.013" stop-color="#00a3ff"/>
<stop offset="0.071" stop-color="#00ffcf"/>
<stop offset="0.133" stop-color="#00ff2e"/>
<stop offset="0.204" stop-color="#65ff00"/>
<stop offset="0.276" stop-color="#bbfa00"/>
<stop offset="0.356" stop-color="#edf300"/>
<stop offset="0.436" stop-color="#fbf100"/>
<stop offset="0.516" stop-color="#f2f200"/>
<stop offset="0.596" stop-color="#e3f400"/>
<stop offset="0.676" stop-color="#dff500"/>
<stop offset="0.756" stop-color="#daf500"/>
<stop offset="0.836" stop-color="#d5f600"/>
<stop offset="0.907" stop-color="#e3f400"/>
<stop offset="0.960" stop-color="#ffe900"/>
<stop offset="0.996" stop-color="#ffba00"/>
</linearGradient>
<linearGradient id="s176" x1="0" y1="0" x2="0" y2="1">
<stop offset="0.013" stop-color="#00fbff"/>
<stop offset="0.071" stop-color="#00ff5f"/>
<stop offset="0.133" stop-color="#31ff00"/>
<stop offset="0.204" stop-color="#bef900"/>
<stop offset="0.276" stop-color="#ffeb00"/>
<stop offset="0.356" stop-color="#ffbf00"/>
<stop offset="0.436" stop-color="#ffb900"/>
<stop offset="0.516" stop-color="#ffdc00"/>
<stop offset="0.596" stop-color="#e4f400"/>
<stop offset="0.676" stop-color="#d6f600"/>
<stop offset="0.756" stop-color="#c8f800"/>
<stop offset="0.836" stop-color="#b9fa00"/>
<stop offset="0.907" stop-color="#bef900"/>
<stop offset="0.960" stop-color="#d6f600"/>
<stop offset="0.996" stop-color="#fcf000"/>
</linearGradient>
<linearGradient id="s177" x1="0" y1="0" x2="0" y2="1">
<stop offset="0.013" stop-color="#00ff75"/>
<stop offset="0.071" stop-color="#29ff00"/>
<stop offset="0.133" stop-color="#bff900"/>
<stop offset="0.204" stop-color="#ffb200"/>
<stop offset="0.276" stop-color="#ff6200"/>
<stop offset="0.356" stop-color="#ff5000"/>
<stop offset="0.436" stop-color="#ff5000"/>
<stop offset="0.516" stop-color="#ff6c00"/>
<stop offset="0.596" stop-color="#ffb200"/>
<stop offset="0.676" stop-color="#ffca00"/>
<stop offset="0.756" stop-color="#ffe100"/>
<stop offset="0.836" stop-color="#f8f100"/>
<stop offset="0.907" stop-color="#f8f100"/>
<stop offset="0.960" stop-color="#ffe100"/>
<stop offset="0.996" stop-color="#ffb200"/>
</linearGradient>
<linearGradient id="s178" x1="0" y1="0" x2="0" y2="1">
<stop offset="0.013" stop-color="#00ff77"/>
<stop offset="0.071" stop-color="#27ff00"/>
<stop offset="0.133" stop-color="#bef900"/>
<stop offset="0.204" stop-color="#ffb400"/>
<stop offset="0.276" stop-color="#ff6300"/>
<stop offset="0.356" stop-color="#ff5100"/>
<stop offset="0.436" stop-color="#ff5100"/>
<stop offset="0.516" stop-color="#ff6e00"/>
<stop offset="0.596" stop-color="#ffb400"/>
<stop offset="0.676" stop-color="#ffcb00"/>
<stop offset="0.756" stop-color="#ffe300"/>
<stop offset="0.836" stop-color="#f7f100"/>
<stop offset="0.907" stop-color="#f7f100"/>
<stop offset="0.960" stop-color="#ffe300"/>
<stop offset="0.996" stop-color="#ffb400"/>
</linearGradient>
<linearGradient id="s179" x1="0" y1="0" x2="0" y2="1">
<stop offset="0.013" stop-color="#00e4ff"/>
<stop offset="0.071" stop-color="#00ffbd"/>
<stop offset="0.133" stop-color="#00ff70"/>
<stop offset="0.204" stop-color="#00ff34"/>
<stop offset="0.276" stop-color="#00ff11"/>
<stop offset="0.356" stop-color="#00ff02"/>
<stop offset="0.436" stop-color="#04ff00"/>
<stop offset="0.516" stop-color="#49ff00"/>
<stop offset="0.596" stop-color="#cdf700"/>
<stop offset="0.676" stop-color="#e1f400"/>
<stop offset="0.756" stop-color="#d7f600"/>
<stop offset="0.836" stop-color="#cdf700"/>
<stop offset="0.907" stop-color="#e1f400"/>
<stop offset="0.960" stop-color="#ffcf00"/>
<stop offset="0.996" stop-color="#ff9500"/>
</linearGradient>
<linearGradient id="s180" x1="0" y1="0" x2="0" y2="1">
<stop offset="0.013" stop-color="#000aff"/>
<stop offset="0.071" stop-color="#000aff"/>
<stop offset="0.133" stop-color="#000aff"/>
<stop offset="0.204" stop-color="#000aff"/>
<stop offset="0.276" stop-color="#000aff"/>
<stop offset="0.356" stop-color="#000aff"/>
<stop offset="0.436" stop-color="#0018ff"/>
<stop offset="0.516" stop-color="#00c7ff"/>
<stop offset="0.596" stop-color="#1fff00"/>
<stop offset="0.676" stop-color="#6aff00"/>
<stop offset="0.756" stop-color="#6aff00"/>
<stop offset="0.836" stop-color="#6aff00"/>
<stop offset="0.907" stop-color="#9bfe00"/>
<stop offset="0.960" stop-color="#faf100"/>
<stop offset="0.996" stop-color="#ffb000"/>
</linearGradient>
<linearGradient id="s181" x1="0" y1="0" x2="0" y2="1">
<stop offset="0.013" stop-color="#0017ff"/>
<stop offset="0.071" stop-color="#0017ff"/>
<stop offset="0.133" stop-color="#0017ff"/>
<stop offset="0.204" stop-color="#0017ff"/>
<stop offset="0.276" stop-color="#0017ff"/>
<stop offset="0.356" stop-color="#0017ff"/>
<stop offset="0.436" stop-color="#0025ff"/>
<stop offset="0.516" stop-color="#00edff"/>
<stop offset="0.596" stop-color="#46ff00"/>
<stop offset="0.676" stop-color="#91ff00"/>
<stop offset="0.756" stop-color="#91ff00"/>
<stop offset="0.836" stop-color="#91ff00"/>
<stop offset="0.907" stop-color="#b8fa00"/>
<stop offset="0.960" stop-color="#ffd200"/>
<stop offset="0.996" stop-color="#ff8c00"/>
</linearGradient>
<linearGradient id="s182" x1="0" y1="0" x2="0" y2="1">
<stop offset="0.013" stop-color="#0013ff"/>
<stop offset="0.071" stop-color="#0013ff"/>
<stop offset="0.133" stop-color="#0013ff"/>
<stop offset="0.204" stop-color="#0013ff"/>
<stop offset="0.276" stop-color="#0013ff"/>
<stop offset="0.356" stop-color="#0013ff"/>
<stop offset="0.436" stop-color="#0021ff"/>
<stop offset="0.516" stop-color="#00e2ff"/>
<stop offset="0.596" stop-color="#3aff00"/>
<stop offset="0.676" stop-color="#85ff00"/>
<stop offset="0.756" stop-color="#85ff00"/>
<stop offset="0.836" stop-color="#85ff00"/>
<stop offset="0.907" stop-color="#affb00"/>
<stop offset="0.960" stop-color="#ffdd00"/>
<stop offset="0.996" stop-color="#ff9700"/>
</linearGradient>
</defs>
<rect x="76.5" y="139" width="368" height="112.5" fill="url(#gl)"/>
<rect x="444.0" y="139" width="2.5" height="112.5" fill="url(#s0)"/>
<rect x="446.0" y="139" width="2.5" height="112.5" fill="url(#s1)"/>
<rect x="448.0" y="139" width="2.5" height="112.5" fill="url(#s2)"/>
<rect x="450.0" y="139" width="2.5" height="112.5" fill="url(#s3)"/>
<rect x="452.0" y="139" width="2.5" height="112.5" fill="url(#s4)"/>
<rect x="454.0" y="139" width="2.5" height="112.5" fill="url(#s5)"/>
<rect x="456.0" y="139" width="2.5" height="112.5" fill="url(#s6)"/>
<rect x="458.0" y="139" width="2.5" height="112.5" fill="url(#s7)"/>
<rect x="460.0" y="139" width="2.5" height="112.5" fill="url(#s8)"/>
<rect x="462.0" y="139" width="2.5" height="112.5" fill="url(#s9)"/>
<rect x="464.0" y="139" width="2.5" height="112.5" fill="url(#s10)"/>
<rect x="466.0" y="139" width="2.5" height="112.5" fill="url(#s11)"/>
<rect x="468.0" y="139" width="2.5" height="112.5" fill="url(#s12)"/>
<rect x="470.0" y="139" width="2.5" height="112.5" fill="url(#s13)"/>
<rect x="472.0" y="139" width="2.5" height="112.5" fill="url(#s14)"/>
<rect x="474.0" y="139" width="2.5" height="112.5" fill="url(#s15)"/>
<rect x="476.0" y="139" width="2.5" height="112.5" fill="url(#s16)"/>
<rect x="478.0" y="139" width="2.5" height="112.5" fill="url(#s17)"/>
<rect x="480.0" y="139" width="2.5" height="112.5" fill="url(#s18)"/>
<rect x="482.0" y="139" width="2.5" height="112.5" fill="url(#s19)"/>
<rect x="484.0" y="139" width="2.5" height="112.5" fill="url(#s20)"/>
<rect x="486.0" y="139" width="2.5" height="112.5" fill="url(#s21)"/>
<rect x="488.0" y="139" width="2.5" height="112.5" fill="url(#s22)"/>
<rect x="490.0" y="139" width="2.5" height="112.5" fill="url(#s23)"/>
<rect x="492.0" y="139" width="2.5" height="112.5" fill="url(#s24)"/>
<rect x="494.0" y="139" width="2.5" height="112.5" fill="url(#s25)"/>
<rect x="496.0" y="139" width="2.5" height="112.5" fill="url(#s26)"/>
<rect x="498.0" y="139" width="2.5" height="112.5" fill="url(#s27)"/>
<rect x="500.0" y="139" width="2.5" height="112.5" fill="url(#s28)"/>
<rect x="502.0" y="139" width="2.5" height="112.5" fill="url(#s29)"/>
<rect x="504.0" y="139" width="2.5" height="112.5" fill="url(#s30)"/>
<rect x="506.0" y="139" width="2.5" height="112.5" fill="url(#s31)"/>
<rect x="508.0" y="139" width="2.5" height="112.5" fill="url(#s32)"/>
<rect x="510.0" y="139" width="2.5" height="112.5" fill="url(#s33)"/>
<rect x="512.0" y="139" width="2.5" height="112.5" fill="url(#s34)"/>
<rect x="514.0" y="139" width="2.5" height="112.5" fill="url(#s35)"/>
<rect x="516.0" y="139" width="2.5" height="112.5" fill="url(#s36)"/>
<rect x="518.0" y="139" width="2.5" height="112.5" fill="url(#s37)"/>
<rect x="520.0" y="139" width="2.5" height="112.5" fill="url(#s38)"/>
<rect x="522.0" y="139" width="2.5" height="112.5" fill="url(#s39)"/>
<rect x="524.0" y="139" width="2.5" height="112.5" fill="url(#s40)"/>
<rect x="526.0" y="139" width="2.5" height="112.5" fill="url(#s41)"/>
<rect x="528.0" y="139" width="2.5" height="112.5" fill="url(#s42)"/>
<rect x="530.0" y="139" width="2.5" height="112.5" fill="url(#s43)"/>
<rect x="532.0" y="139" width="2.5" height="112.5" fill="url(#s44)"/>
<rect x="534.0" y="139" width="2.5" height="112.5" fill="url(#s45)"/>
<rect x="536.0" y="139" width="2.5" height="112.5" fill="url(#s46)"/>
<rect x="538.0" y="139" width="2.5" height="112.5" fill="url(#s47)"/>
<rect x="540.0" y="139" width="2.5" height="112.5" fill="url(#s48)"/>
<rect x="542.0" y="139" width="2.5" height="112.5" fill="url(#s49)"/>
<rect x="544.0" y="139" width="2.5" height="112.5" fill="url(#s50)"/>
<rect x="546.0" y="139" width="2.5" height="112.5" fill="url(#s51)"/>
<rect x="548.0" y="139" width="2.5" height="112.5" fill="url(#s52)"/>
<rect x="550.0" y="139" width="2.5" height="112.5" fill="url(#s53)"/>
<rect x="552.0" y="139" width="2.5" height="112.5" fill="url(#s54)"/>
<rect x="554.0" y="139" width="2.5" height="112.5" fill="url(#s55)"/>
<rect x="556.0" y="139" width="2.5" height="112.5" fill="url(#s56)"/>
<rect x="558.0" y="139" width="2.5" height="112.5" fill="url(#s57)"/>
<rect x="560.0" y="139" width="2.5" height="112.5" fill="url(#s58)"/>
<rect x="562.0" y="139" width="2.5" height="112.5" fill="url(#s59)"/>
<rect x="564.0" y="139" width="2.5" height="112.5" fill="url(#s60)"/>
<rect x="566.0" y="139" width="2.5" height="112.5" fill="url(#s61)"/>
<rect x="568.0" y="139" width="2.5" height="112.5" fill="url(#s62)"/>
<rect x="570.0" y="139" width="2.5" height="112.5" fill="url(#s63)"/>
<rect x="572.0" y="139" width="2.5" height="112.5" fill="url(#s64)"/>
<rect x="574.0" y="139" width="2.5" height="112.5" fill="url(#s65)"/>
<rect x="576.0" y="139" width="2.5" height="112.5" fill="url(#s66)"/>
<rect x="578.0" y="139" width="2.5" height="112.5" fill="url(#s67)"/>
<rect x="580.0" y="139" width="2.5" height="112.5" fill="url(#s68)"/>
<rect x="582.0" y="139" width="2.5" height="112.5" fill="url(#s69)"/>
<rect x="584.0" y="139" width="2.5" height="112.5" fill="url(#s70)"/>
<rect x="586.0" y="139" width="2.5" height="112.5" fill="url(#s71)"/>
<rect x="588.0" y="139" width="2.5" height="112.5" fill="url(#s72)"/>
<rect x="590.0" y="139" width="2.5" height="112.5" fill="url(#s73)"/>
<rect x="592.0" y="139" width="2.5" height="112.5" fill="url(#s74)"/>
<rect x="594.0" y="139" width="2.5" height="112.5" fill="url(#s75)"/>
<rect x="596.0" y="139" width="2.5" height="112.5" fill="url(#s76)"/>
<rect x="598.0" y="139" width="2.5" height="112.5" fill="url(#s77)"/>
<rect x="600.0" y="139" width="2.5" height="112.5" fill="url(#s78)"/>
<rect x="602.0" y="139" width="2.5" height="112.5" fill="url(#s79)"/>
<rect x="604.0" y="139" width="2.5" height="112.5" fill="url(#s80)"/>
<rect x="606.0" y="139" width="2.5" height="112.5" fill="url(#s81)"/>
<rect x="608.0" y="139" width="2.5" height="112.5" fill="url(#s82)"/>
<rect x="610.0" y="139" width="2.5" height="112.5" fill="url(#s83)"/>
<rect x="612.0" y="139" width="2.5" height="112.5" fill="url(#s84)"/>
<rect x="614.0" y="139" width="2.5" height="112.5" fill="url(#s85)"/>
<rect x="616.0" y="139" width="2.5" height="112.5" fill="url(#s86)"/>
<rect x="618.0" y="139" width="2.5" height="112.5" fill="url(#s87)"/>
<rect x="620.0" y="139" width="2.5" height="112.5" fill="url(#s88)"/>
<rect x="622.0" y="139" width="2.5" height="112.5" fill="url(#s89)"/>
<rect x="624.0" y="139" width="2.5" height="112.5" fill="url(#s90)"/>
<rect x="626.0" y="139" width="2.5" height="112.5" fill="url(#s91)"/>
<rect x="628.0" y="139" width="2.5" height="112.5" fill="url(#s92)"/>
<rect x="630.0" y="139" width="2.5" height="112.5" fill="url(#s93)"/>
<rect x="632.0" y="139" width="2.5" height="112.5" fill="url(#s94)"/>
<rect x="634.0" y="139" width="2.5" height="112.5" fill="url(#s95)"/>
<rect x="636.0" y="139" width="2.5" height="112.5" fill="url(#s96)"/>
<rect x="638.0" y="139" width="2.5" height="112.5" fill="url(#s97)"/>
<rect x="640.0" y="139" width="2.5" height="112.5" fill="url(#s98)"/>
<rect x="642.0" y="139" width="2.5" height="112.5" fill="url(#s99)"/>
<rect x="644.0" y="139" width="2.5" height="112.5" fill="url(#s100)"/>
<rect x="646.0" y="139" width="2.5" height="112.5" fill="url(#s101)"/>
<rect x="648.0" y="139" width="2.5" height="112.5" fill="url(#s102)"/>
<rect x="650.0" y="139" width="2.5" height="112.5" fill="url(#s103)"/>
<rect x="652.0" y="139" width="2.5" height="112.5" fill="url(#s104)"/>
<rect x="654.0" y="139" width="2.5" height="112.5" fill="url(#s105)"/>
<rect x="656.0" y="139" width="2.5" height="112.5" fill="url(#s106)"/>
<rect x="658.0" y="139" width="2.5" height="112.5" fill="url(#s107)"/>
<rect x="660.0" y="139" width="2.5" height="112.5" fill="url(#s108)"/>
<rect x="662.0" y="139" width="2.5" height="112.5" fill="url(#s109)"/>
<rect x="664.0" y="139" width="2.5" height="112.5" fill="url(#s110)"/>
<rect x="666.0" y="139" width="2.5" height="112.5" fill="url(#s111)"/>
<rect x="668.0" y="139" width="2.5" height="112.5" fill="url(#s112)"/>
<rect x="670.0" y="139" width="2.5" height="112.5" fill="url(#s113)"/>
<rect x="672.0" y="139" width="2.5" height="112.5" fill="url(#s114)"/>
<rect x="674.0" y="139" width="2.5" height="112.5" fill="url(#s115)"/>
<rect x="676.0" y="139" width="2.5" height="112.5" fill="url(#s116)"/>
<rect x="678.0" y="139" width="2.5" height="112.5" fill="url(#s117)"/>
<rect x="680.0" y="139" width="2.5" height="112.5" fill="url(#s118)"/>
<rect x="682.0" y="139" width="2.5" height="112.5" fill="url(#s119)"/>
<rect x="684.0" y="139" width="2.5" height="112.5" fill="url(#s120)"/>
<rect x="686.0" y="139" width="2.5" height="112.5" fill="url(#s121)"/>
<rect x="688.0" y="139" width="2.5" height="112.5" fill="url(#s122)"/>
<rect x="690.0" y="139" width="2.5" height="112.5" fill="url(#s123)"/>
<rect x="692.0" y="139" width="2.5" height="112.5" fill="url(#s124)"/>
<rect x="694.0" y="139" width="2.5" height="112.5" fill="url(#s125)"/>
<rect x="696.0" y="139" width="2.5" height="112.5" fill="url(#s126)"/>
<rect x="698.0" y="139" width="2.5" height="112.5" fill="url(#s127)"/>
<rect x="700.0" y="139" width="2.5" height="112.5" fill="url(#s128)"/>
<rect x="702.0" y="139" width="2.5" height="112.5" fill="url(#s129)"/>
<rect x="704.0" y="139" width="2.5" height="112.5" fill="url(#s130)"/>
<rect x="706.0" y="139" width="2.5" height="112.5" fill="url(#s131)"/>
<rect x="708.0" y="139" width="2.5" height="112.5" fill="url(#s132)"/>
<rect x="710.0" y="139" width="2.5" height="112.5" fill="url(#s133)"/>
<rect x="712.0" y="139" width="2.5" height="112.5" fill="url(#s134)"/>
<rect x="714.0" y="139" width="2.5" height="112.5" fill="url(#s135)"/>
<rect x="716.0" y="139" width="2.5" height="112.5" fill="url(#s136)"/>
<rect x="718.0" y="139" width="2.5" height="112.5" fill="url(#s137)"/>
<rect x="720.0" y="139" width="2.5" height="112.5" fill="url(#s138)"/>
<rect x="722.0" y="139" width="2.5" height="112.5" fill="url(#s139)"/>
<rect x="724.0" y="139" width="2.5" height="112.5" fill="url(#s140)"/>
<rect x="726.0" y="139" width="2.5" height="112.5" fill="url(#s141)"/>
<rect x="728.0" y="139" width="2.5" height="112.5" fill="url(#s142)"/>
<rect x="730.0" y="139" width="2.5" height="112.5" fill="url(#s143)"/>
<rect x="732.0" y="139" width="2.5" height="112.5" fill="url(#s144)"/>
<rect x="734.0" y="139" width="2.5" height="112.5" fill="url(#s145)"/>
<rect x="736.0" y="139" width="2.5" height="112.5" fill="url(#s146)"/>
<rect x="738.0" y="139" width="2.5" height="112.5" fill="url(#s147)"/>
<rect x="740.0" y="139" width="2.5" height="112.5" fill="url(#s148)"/>
<rect x="742.0" y="139" width="2.5" height="112.5" fill="url(#s149)"/>
<rect x="744.0" y="139" width="2.5" height="112.5" fill="url(#s150)"/>
<rect x="746.0" y="139" width="2.5" height="112.5" fill="url(#s151)"/>
<rect x="748.0" y="139" width="2.5" height="112.5" fill="url(#s152)"/>
<rect x="750.0" y="139" width="2.5" height="112.5" fill="url(#s153)"/>
<rect x="752.0" y="139" width="2.5" height="112.5" fill="url(#s154)"/>
<rect x="754.0" y="139" width="2.5" height="112.5" fill="url(#s155)"/>
<rect x="756.0" y="139" width="2.5" height="112.5" fill="url(#s156)"/>
<rect x="758.0" y="139" width="2.5" height="112.5" fill="url(#s157)"/>
<rect x="760.0" y="139" width="2.5" height="112.5" fill="url(#s158)"/>
<rect x="762.0" y="139" width="2.5" height="112.5" fill="url(#s159)"/>
<rect x="764.0" y="139" width="2.5" height="112.5" fill="url(#s160)"/>
<rect x="766.0" y="139" width="2.5" height="112.5" fill="url(#s161)"/>
<rect x="768.0" y="139" width="2.5" height="112.5" fill="url(#s162)"/>
<rect x="770.0" y="139" width="2.5" height="112.5" fill="url(#s163)"/>
<rect x="772.0" y="139" width="2.5" height="112.5" fill="url(#s164)"/>
<rect x="774.0" y="139" width="2.5" height="112.5" fill="url(#s165)"/>
<rect x="776.0" y="139" width="2.5" height="112.5" fill="url(#s166)"/>
<rect x="778.0" y="139" width="2.5" height="112.5" fill="url(#s167)"/>
<rect x="780.0" y="139" width="2.5" height="112.5" fill="url(#s168)"/>
<rect x="782.0" y="139" width="2.5" height="112.5" fill="url(#s169)"/>
<rect x="784.0" y="139" width="2.5" height="112.5" fill="url(#s170)"/>
<rect x="786.0" y="139" width="2.5" height="112.5" fill="url(#s171)"/>
<rect x="788.0" y="139" width="2.5" height="112.5" fill="url(#s172)"/>
<rect x="790.0" y="139" width="2.5" height="112.5" fill="url(#s173)"/>
<rect x="792.0" y="139" width="2.5" height="112.5" fill="url(#s174)"/>
<rect x="794.0" y="139" width="2.5" height="112.5" fill="url(#s175)"/>
<rect x="796.0" y="139" width="2.5" height="112.5" fill="url(#s176)"/>
<rect x="798.0" y="139" width="2.5" height="112.5" fill="url(#s177)"/>
<rect x="800.0" y="139" width="2.5" height="112.5" fill="url(#s178)"/>
<rect x="802.0" y="139" width="2.5" height="112.5" fill="url(#s179)"/>
<rect x="804.0" y="139" width="2.5" height="112.5" fill="url(#s180)"/>
<rect x="806.0" y="139" width="2.5" height="112.5" fill="url(#s181)"/>
<rect x="808.0" y="139" width="2.5" height="112.5" fill="url(#s182)"/>
<polyline points="76.9,50.9 77.9,54.3 78.9,49.1 79.9,46.6 81.0,55.1 82.0,52.6 83.0,56.9 84.1,50.9 85.1,58.6 86.1,48.3 87.1,60.3 88.2,52.6 89.2,62.0 90.2,51.7 91.3,63.7 92.3,65.4 93.3,68.9 94.3,70.6 95.7,68.9 97.1,65.4 98.5,62.0 99.8,58.6 101.2,56.0 102.6,56.9 103.9,55.1 105.3,58.6 106.3,60.3 107.4,65.4 108.7,72.3 110.1,75.7 111.5,77.4 112.9,79.1 114.2,75.7 115.6,80.9 117.0,82.6 118.3,86.0 119.7,84.3 121.1,89.4 122.5,98.0 123.5,94.6 124.5,103.1 125.5,107.4 126.6,99.7 127.6,82.6 128.6,67.1 129.7,63.7 131.0,65.4 132.4,62.9 133.8,65.4 135.1,63.7 136.5,62.0 137.9,62.9 139.3,65.4 140.6,63.7 142.0,67.1 143.4,74.0 144.7,77.4 146.1,80.0 147.5,78.3 148.9,79.1 150.2,77.4 151.6,78.3 153.0,75.7 154.3,77.4 155.7,81.7 157.1,77.4 158.5,72.3 159.8,74.0 161.2,73.1 162.6,74.0 163.9,73.1 165.3,79.1 166.7,80.0 168.1,78.3 169.4,80.0 170.8,80.9 172.2,79.1 173.5,77.4 174.9,75.7 176.3,76.6 177.3,68.9 178.7,67.1 180.1,65.4 181.4,64.6 182.8,65.4 184.2,63.7 185.5,64.6 186.9,63.7 188.3,62.9 190.0,62.9 191.0,62.9 192.3,60.3 193.7,62.0 195.1,61.1 196.5,62.9 197.8,61.1 199.2,62.0 200.2,60.3 201.3,65.4 202.3,73.1 203.3,65.4 204.3,62.9 205.7,63.7 207.1,64.6 208.5,63.7 209.8,65.4 211.2,63.7 212.6,64.6 213.9,62.9 215.3,62.0 216.7,61.7 218.1,62.9 219.4,63.7 220.8,62.9 222.2,63.7 223.5,62.9 224.9,63.7 226.3,62.9 227.7,63.7 229.0,64.6 230.4,63.7 231.8,62.0 233.1,61.1 234.5,60.3 235.9,63.7 237.3,65.4 238.6,62.9 240.0,64.6 241.4,62.0 242.7,60.3 244.1,59.4 245.5,62.0 246.9,65.4 248.2,72.3 249.6,70.6 251.0,69.7 252.3,68.9 253.7,68.0 255.1,67.1 256.5,65.4 257.8,68.9 259.2,67.1 260.6,66.3 261.9,68.0 263.3,65.4 264.7,67.1 266.1,70.6 267.4,74.0 268.8,68.9 270.2,65.4 271.5,70.6 272.9,72.3 274.3,73.1 275.7,71.4 277.0,75.7 278.1,80.9 279.1,72.3 280.5,73.1 281.8,74.9 283.2,74.0 284.6,74.9 285.9,74.0 287.3,73.1 288.7,75.7 290.1,76.6 291.4,77.4 292.8,76.6 294.2,78.3 295.5,77.4 296.9,79.1 297.9,82.6 299.0,85.1 300.0,82.6 300.3,77.4 301.3,72.3 302.3,69.7 303.7,68.9 305.1,68.0 306.5,66.3 307.8,67.1 309.2,68.0 310.6,67.5 311.9,68.5 313.3,68.9 314.7,67.1 316.1,65.4 317.4,66.3 318.8,68.0 319.8,70.6 320.9,79.1 321.9,78.3 322.9,76.6 323.9,75.7 325.0,74.0 326.0,75.7 327.0,74.9 328.1,77.4 329.1,76.6 330.1,78.3 331.1,77.4 332.2,80.0 333.2,79.1 334.2,80.9 335.3,78.3 336.3,79.1 337.3,81.7 338.3,80.0 339.4,84.3 340.4,82.6 341.4,80.0 342.5,81.7 343.5,80.9 344.5,82.6 345.5,81.7 346.6,86.0 347.6,91.1 348.6,86.0 349.7,92.0 350.7,87.7 351.7,92.9 352.7,89.4 353.8,92.0 354.8,90.3 355.8,92.9 356.9,92.0 357.9,90.3 358.9,91.1 359.9,89.4 361.0,91.1 362.0,88.6 363.0,90.3 364.1,89.4 365.1,88.6 366.1,89.4 367.1,90.3 368.2,89.1 369.5,88.6 370.9,89.4 372.3,88.6 373.7,89.1 375.0,87.7 376.4,86.0 377.8,86.9 379.1,86.0 380.5,88.6 381.9,87.7 383.3,86.0 384.6,85.1 386.0,84.3 387.4,83.4 388.7,86.0 390.1,86.9 391.5,87.7 392.9,84.3 394.2,82.6 395.6,83.4 397.0,81.7 398.0,77.4 399.0,73.1 399.7,82.6 400.7,89.4 401.8,92.9 402.8,94.6 403.8,99.7 404.9,103.1 405.9,110.0 406.6,114.3 407.6,106.6 408.6,99.7 410.0,97.1 411.0,103.1 412.0,98.9 413.0,101.4 414.1,103.1 415.1,107.4 416.1,104.9 417.1,109.1 418.2,106.6 419.2,103.1 420.2,105.7 421.3,115.1 422.3,118.6 423.3,117.7 424.3,125.4 425.4,119.4 426.4,120.3 427.4,118.6 428.5,116.9 429.5,118.6 430.5,115.1 431.5,109.1 432.6,111.7 433.6,115.1 434.6,116.9 435.7,117.7 436.7,116.9 437.7,119.4 439.1,117.7 440.5,116.9 441.8,118.6 443.2,117.7 444.6,118.6 445.9,117.7 447.3,118.6 448.7,116.9 450.1,116.5 451.4,117.7 452.8,120.3 454.2,122.9 455.5,122.0 456.9,121.1 458.3,122.9 459.7,120.3 461.0,119.4 462.4,122.0 463.8,123.7 465.1,126.3 466.5,123.7 467.9,122.9 469.3,123.7 470.6,122.0 472.0,122.9 473.4,121.7 474.7,122.3 476.1,121.1 477.5,123.7 478.9,124.6 479.5,116.9 480.2,106.6 481.3,103.1 482.3,107.4 483.3,98.0 484.3,87.7 485.4,92.9 486.4,86.0 487.4,77.4 488.5,82.6 489.5,81.7 490.5,89.4 491.5,91.1 492.6,92.9 493.6,89.4 494.6,90.3 496.0,92.0 497.4,92.9 498.7,91.1 500.1,89.4 501.5,86.0 502.9,84.3 504.2,81.7 505.6,77.4 506.6,74.9 507.7,79.1 508.7,87.7 509.7,84.3 510.7,88.6 511.8,86.0 512.8,98.9 513.8,86.0 514.9,89.4 515.9,84.3 516.9,82.6 517.9,84.3 519.0,89.4 520.0,94.6 520.3,95.4 521.3,77.4 522.3,70.6 523.7,69.7 525.1,68.9 526.5,68.0 527.8,68.9 529.2,69.7 530.6,70.6 531.9,68.9 533.3,73.1 534.7,68.0 536.1,70.6 537.4,74.9 538.8,75.7 540.2,73.1 541.5,74.9 542.9,74.0 544.3,78.3 545.7,76.6 547.0,74.9 548.4,73.1 549.8,71.4 551.1,69.7 552.5,71.4 553.5,68.9 554.6,78.3 555.6,79.1 556.3,87.7 557.3,72.3 558.3,68.9 559.4,65.4 560.4,67.1 561.4,63.7 562.5,72.3 563.5,67.1 564.5,65.4 565.5,72.3 566.6,76.6 567.6,73.1 568.6,65.4 569.7,68.0 570.7,78.3 571.7,67.1 572.7,80.9 573.8,68.9 575.1,68.0 576.5,68.5 577.9,67.1 579.3,65.4 580.6,64.6 582.0,66.3 583.4,68.0 584.7,67.1 586.1,68.9 587.5,68.0 588.9,65.4 590.2,67.1 591.6,68.0 593.0,66.3 594.3,68.0 595.7,66.3 597.1,65.4 598.5,64.6 599.8,66.3 601.2,68.0 602.6,69.7 603.9,68.9 605.0,63.7 606.0,60.3 607.0,56.9 608.4,58.6 609.8,61.1 611.1,62.9 612.5,60.3 613.9,59.4 614.9,63.7 615.9,60.3 617.3,56.9 618.7,56.0 620.1,56.9 621.4,54.3 622.8,55.1 624.2,54.3 625.5,55.1 626.9,54.3 628.3,55.1 630.0,54.3 631.0,63.7 632.3,62.0 633.7,65.4 634.7,70.6 635.4,94.6 636.1,70.6 637.1,55.1 638.2,58.6 639.2,65.4 640.6,77.4 641.9,87.7 643.0,98.0 644.0,110.0 645.0,116.9 646.1,121.1 647.1,118.6 647.8,122.0 648.8,106.6 649.8,86.0 650.9,63.7 651.9,48.3 652.9,44.9 653.9,45.7 655.0,47.4 656.0,56.9 657.0,70.6 658.1,91.1 659.1,106.6 660.1,115.1 661.1,120.3 662.2,110.0 662.9,86.0 663.9,94.6 664.9,118.6 665.9,117.7 667.0,121.1 668.0,125.4 669.0,122.0 670.1,121.1 671.1,118.6 671.8,96.3 672.8,70.6 673.8,58.6 674.9,55.1 675.9,56.9 676.9,55.1 677.9,58.6 679.0,60.3 680.0,57.7 681.0,61.1 682.1,63.7 683.1,62.0 684.1,60.3 685.1,62.9 686.5,65.4 687.9,62.9 689.3,70.6 690.3,85.1 691.3,68.9 692.7,67.1 694.1,70.6 695.4,68.0 696.8,65.4 698.2,72.3 699.5,80.9 700.9,70.6 702.3,68.9 703.7,65.4 705.0,67.1 706.4,70.6 707.8,73.1 709.1,80.9 710.5,89.4 711.5,96.3 712.6,108.3 713.6,96.3 714.6,89.4 715.7,91.1 716.7,96.3 717.7,94.6 718.7,89.4 719.8,94.6 720.8,106.6 721.8,113.4 722.5,117.7 723.5,103.1 724.6,94.6 725.6,99.7 726.6,108.3 727.7,115.1 728.7,119.4 729.7,123.7 730.7,120.3 731.8,118.6 732.8,121.1 733.8,119.4 734.9,120.3 735.9,115.1 736.6,96.3 737.6,77.4 738.6,72.3 740.0,70.6 740.9,87.7 741.9,74.0 743.0,62.0 744.0,58.6 745.0,56.9 746.1,60.3 747.1,62.9 748.1,60.3 749.1,57.7 750.2,59.4 751.2,62.0 752.2,60.3 753.3,63.7 754.3,75.7 755.0,87.7 756.0,70.6 757.0,82.6 758.1,96.3 759.1,104.9 760.1,111.7 761.1,115.1 762.2,118.6 763.2,122.0 764.2,115.1 765.3,99.7 766.3,86.0 767.3,103.1 768.3,111.7 769.4,118.6 770.4,122.0 771.4,122.9 772.5,119.4 773.5,122.0 774.5,115.1 775.5,103.1 776.2,86.0 777.3,70.6 778.3,77.4 779.3,89.4 780.3,101.4 781.4,110.0 782.1,113.4 782.7,99.7 783.8,79.1 784.8,67.1 785.8,62.0 786.9,59.4 787.9,58.6 788.9,60.3 789.9,62.9 791.0,70.6 792.0,80.9 793.0,75.7 794.1,65.4 795.1,58.6 796.1,56.9 797.1,55.1 797.8,48.3 798.5,44.9 799.5,49.1 800.6,46.6 801.6,58.6 802.6,82.6 803.3,110.0 804.0,121.1 805.0,120.3 805.7,117.7 806.4,99.7 807.1,82.6 807.8,70.6 808.5,65.4" fill="none" stroke="#8000ff" stroke-width="1" shape-rendering="crispEdges"/>
<polyline points="76.9,51.7 78.2,55.1 79.6,50.0 81.0,56.9 82.3,55.1 83.7,58.6 85.1,56.9 86.5,62.0 87.8,58.6 89.2,60.3 90.6,56.9 91.9,60.3 93.0,67.1 94.0,64.6 95.4,65.4 96.7,63.7 98.1,60.3 99.5,55.1 100.9,50.9 102.2,49.1 103.6,48.3 105.0,49.1 106.0,53.4 107.0,62.0 108.4,70.6 109.8,65.4 111.1,56.9 112.5,51.7 113.5,50.9 114.6,55.1 115.6,65.4 117.0,72.3 118.3,67.1 119.7,65.4 120.6,50.0 121.1,65.4 122.1,79.1 123.5,86.0 124.9,89.4 126.2,79.1 127.3,65.4 128.3,55.1 129.7,52.6 131.0,50.9 132.4,53.4 133.8,55.1 135.1,51.7 136.5,50.0 137.9,50.9 139.3,50.0 140.6,50.9 142.0,53.4 143.4,55.1 144.7,52.6 146.1,53.4 147.5,55.1 148.9,52.6 150.2,54.3 151.6,52.6 153.0,53.4 154.3,54.3 155.7,58.6 157.1,60.3 158.5,58.6 159.8,60.3 161.2,59.4 162.6,60.3 163.9,59.4 165.3,62.0 166.7,65.4 168.1,67.1 169.4,64.6 170.8,66.3 172.2,67.1 173.5,63.7 174.9,62.0 176.3,60.3 177.7,55.1 179.0,48.3 180.4,47.4 181.8,48.3 183.1,46.6 184.5,47.4 185.9,46.6 187.3,47.4 188.6,46.6 190.0,47.4 190.3,46.6 192.0,47.4 193.7,45.7 195.4,46.6 197.1,45.7 198.9,47.4 200.6,45.7 202.3,47.4 203.7,48.3 205.0,50.0 206.4,49.1 207.8,48.3 209.1,50.0 210.5,49.1 211.9,50.9 213.3,51.7 214.6,49.1 216.0,50.0 217.4,49.1 218.7,50.0 220.1,49.1 221.5,50.0 222.9,48.3 224.2,49.1 225.6,50.0 227.0,50.9 228.3,51.7 229.7,50.9 231.1,49.1 232.5,46.6 233.8,44.9 235.2,45.7 236.6,44.0 237.9,43.1 239.3,42.3 240.7,44.0 242.1,43.1 243.4,44.0 244.8,44.9 246.2,46.6 247.5,50.0 248.9,50.9 250.3,49.1 251.7,48.3 253.0,50.0 254.4,51.7 255.8,50.0 257.1,48.3 258.5,47.4 259.9,46.6 261.3,48.3 262.6,45.7 264.0,47.4 265.4,46.6 266.7,48.3 268.1,49.1 269.5,47.4 270.9,50.9 272.2,55.1 273.6,56.0 275.0,56.9 276.3,56.0 277.7,57.7 279.1,56.9 280.5,59.4 281.8,58.6 283.2,57.7 284.6,56.9 285.9,56.0 287.3,54.3 288.7,55.1 290.1,56.0 291.4,55.1 292.8,56.9 294.2,56.0 295.5,56.9 296.9,57.7 298.3,58.6 300.0,59.4 301.3,46.6 302.7,45.7 304.1,44.9 305.4,43.1 306.8,41.4 308.2,43.1 309.5,44.5 310.9,45.7 312.3,44.9 313.7,44.0 315.0,43.1 316.4,44.5 317.8,44.0 319.1,45.7 320.5,48.3 321.9,52.6 323.3,55.1 324.6,54.3 326.0,55.1 327.4,52.6 328.7,52.1 330.1,53.4 331.5,52.6 332.9,54.3 334.2,53.1 335.6,55.1 337.0,54.3 338.3,56.9 339.7,56.0 341.1,57.7 342.5,56.9 343.8,59.4 345.2,58.6 346.6,61.1 347.9,59.4 349.3,62.0 350.7,61.1 352.1,64.6 353.4,65.4 354.8,67.1 356.2,68.0 357.5,69.7 358.9,65.4 360.3,66.3 361.7,64.6 363.0,65.4 364.4,62.9 365.8,64.6 367.1,62.9 368.5,64.6 369.9,62.0 371.3,62.9 372.6,60.3 374.0,59.4 375.4,56.9 376.7,57.7 378.1,56.0 379.5,56.9 380.9,55.1 382.2,56.0 383.6,54.3 385.0,53.4 386.3,52.6 387.7,53.4 389.1,50.9 390.5,52.6 391.8,50.0 393.2,50.9 394.6,49.1 395.9,50.0 397.3,47.4 398.7,45.7 399.7,53.4 400.7,62.0 402.1,65.4 403.5,67.1 404.9,72.3 406.2,80.0 407.6,77.4 409.0,74.0 410.0,74.0 410.3,74.9 411.7,72.3 413.0,74.9 414.4,75.7 415.8,77.4 417.1,76.6 418.5,78.3 419.9,77.4 420.9,82.6 421.9,87.7 423.0,92.9 424.0,96.3 425.0,99.7 426.1,94.6 427.1,98.9 428.1,92.9 429.1,94.6 430.2,91.1 431.5,87.7 432.9,92.9 434.3,98.0 435.7,94.6 437.0,91.1 438.4,89.4 439.8,86.0 441.1,85.1 442.5,86.0 443.9,85.1 445.3,86.9 446.6,87.7 448.0,88.6 449.4,89.4 450.7,91.1 452.1,94.6 453.5,97.1 454.9,98.0 456.2,97.1 457.6,98.0 459.0,95.4 460.3,96.3 461.7,94.6 463.1,96.3 464.5,98.0 465.8,99.7 467.2,101.4 468.6,102.3 469.9,103.1 471.3,104.0 472.7,104.9 474.1,105.7 475.4,103.1 476.8,104.9 478.2,101.4 479.2,104.0 480.2,96.3 481.3,87.7 482.3,89.4 483.3,84.3 484.3,79.1 485.4,72.3 486.4,65.4 487.4,64.6 488.5,68.9 489.5,64.6 490.5,70.6 491.5,74.0 492.6,75.7 493.6,72.3 494.6,65.4 495.7,63.7 496.7,65.4 498.1,72.3 499.4,74.0 500.8,68.9 502.2,72.3 503.5,66.3 504.9,63.7 506.3,60.3 507.7,63.7 509.0,70.6 510.4,77.4 511.8,80.0 513.1,74.0 514.5,65.4 515.9,61.1 517.3,67.1 518.6,74.0 520.0,75.7 521.0,74.0 522.3,65.4 523.7,63.7 525.1,64.6 526.5,63.7 527.8,65.4 529.2,54.3 530.6,62.0 531.9,65.4 533.3,63.7 534.7,62.0 536.1,64.6 537.4,63.7 538.8,62.9 540.2,62.0 541.5,63.7 542.9,64.6 544.3,63.7 545.7,62.0 547.0,60.3 548.4,58.6 549.8,56.9 551.1,56.0 552.5,57.7 553.9,65.4 554.9,73.1 555.9,65.4 557.3,58.6 558.7,55.1 560.1,56.9 561.4,55.1 562.8,54.3 564.2,52.6 565.2,45.7 566.2,48.3 567.3,47.4 568.3,50.9 569.7,52.6 571.0,63.7 572.4,60.3 573.8,55.1 575.1,52.6 576.5,51.7 577.9,53.4 579.3,55.1 580.6,54.3 582.0,52.6 583.4,53.4 584.7,55.1 586.1,57.7 587.5,55.1 588.5,50.9 589.9,53.4 591.3,55.1 592.6,56.0 594.0,54.3 595.4,55.1 596.7,52.6 598.1,50.9 599.5,53.4 600.9,56.9 602.2,59.4 603.6,56.9 605.0,55.1 606.3,52.6 607.4,47.4 608.7,49.1 610.1,52.6 611.5,50.9 612.9,51.7 614.2,50.9 615.6,50.0 617.0,50.9 618.3,48.3 619.7,49.1 621.1,47.4 622.5,49.1 623.8,48.3 625.2,49.1 626.6,50.0 627.9,50.9 629.3,50.0 630.0,50.9 631.0,65.4 632.3,62.0 633.7,53.4 635.1,55.1 636.5,50.9 637.8,58.6 639.2,65.4 640.6,77.4 641.9,86.0 643.3,91.1 644.7,96.3 646.1,98.0 647.4,97.1 648.8,86.0 650.2,72.3 651.2,56.9 652.2,45.7 653.3,43.1 654.3,41.4 655.3,40.6 656.3,48.3 657.4,62.0 658.4,82.6 659.4,92.9 660.8,93.7 662.2,92.0 663.2,80.9 664.2,92.9 665.3,93.7 666.6,99.7 668.0,102.3 669.4,104.0 670.4,96.3 671.4,82.6 672.5,63.7 673.5,50.0 674.5,46.6 675.5,44.0 676.6,40.6 677.6,45.7 678.6,48.3 679.7,47.4 680.7,44.9 681.7,44.0 682.7,45.7 683.8,47.4 684.8,44.9 685.8,47.4 687.2,48.3 688.6,50.0 689.9,53.4 691.3,49.1 692.7,52.6 694.1,56.0 695.4,54.3 696.8,51.7 698.2,60.3 699.5,55.1 700.9,57.7 702.3,56.9 703.7,51.7 705.0,52.6 706.4,54.3 707.8,55.1 709.1,62.0 710.5,65.4 711.9,62.0 713.3,61.1 714.6,68.9 716.0,82.6 717.4,70.6 718.4,59.4 719.4,70.6 720.8,82.6 722.2,86.0 723.5,79.1 724.9,80.9 726.3,89.4 727.7,96.3 729.0,101.4 730.4,98.9 731.8,100.6 733.1,99.7 734.5,101.4 735.5,92.9 736.6,70.6 737.6,55.1 738.6,45.7 739.7,40.6 740.0,41.4 740.2,44.9 741.3,47.4 742.3,45.7 743.3,44.0 744.3,41.4 745.4,43.1 746.4,42.3 747.4,44.0 748.5,45.7 749.5,44.9 750.5,47.4 751.5,50.9 752.6,55.1 753.6,62.0 754.6,70.6 755.7,75.7 756.7,81.7 757.7,86.0 758.7,89.4 759.8,91.1 760.8,92.9 761.8,95.4 762.9,98.0 763.9,96.3 764.9,92.9 765.9,86.0 767.0,91.1 768.0,96.3 769.0,101.4 770.1,104.0 771.1,102.3 772.1,103.1 773.1,102.3 774.2,96.3 775.2,82.6 776.2,58.6 777.3,65.4 778.3,82.6 779.3,91.1 780.3,94.6 781.4,98.0 782.4,86.0 783.4,74.0 784.5,65.4 785.5,58.6 786.5,55.1 787.5,56.9 788.6,56.0 789.6,58.6 790.6,65.4 791.7,74.0 792.7,72.3 793.7,63.7 794.7,56.9 795.8,55.1 796.8,53.4 797.8,48.3 798.9,47.4 799.9,49.1 800.9,50.9 801.9,70.6 803.0,86.0 804.0,96.3 805.0,99.7 806.1,106.6 807.1,87.7 808.1,65.4" fill="none" stroke="#0096ff" stroke-width="1" shape-rendering="crispEdges"/>
<polyline points="76.9,55.1 78.2,58.6 79.6,55.1 81.0,60.3 82.3,58.6 83.7,63.7 85.1,62.0 86.5,65.4 87.8,63.7 89.2,67.1 90.6,63.7 91.9,65.4 93.0,70.6 94.0,74.0 95.4,75.7 96.7,70.6 98.1,65.4 99.5,60.3 100.9,55.1 102.2,52.6 103.6,53.4 105.0,56.9 106.3,65.4 107.7,74.0 109.1,77.4 110.5,68.9 111.8,63.7 113.2,62.0 114.6,65.4 115.9,70.6 117.3,65.4 118.7,63.7 120.1,65.4 121.4,74.0 122.8,79.1 124.2,82.6 125.5,79.1 126.9,65.4 128.3,55.1 129.3,50.9 130.7,55.1 132.1,54.3 133.4,56.0 134.8,55.1 136.2,56.9 137.5,55.1 138.9,56.9 140.3,55.1 141.7,52.6 143.0,55.1 144.4,53.4 145.8,54.3 147.1,56.0 148.5,53.4 149.9,55.1 151.3,53.4 152.6,55.1 154.0,52.6 155.4,55.1 156.7,60.3 158.1,58.6 159.5,60.3 160.9,57.7 162.2,59.4 163.6,56.9 165.0,60.3 166.3,63.7 167.7,65.4 169.1,62.0 170.5,63.7 171.8,65.4 173.2,60.3 174.6,56.9 175.9,55.1 177.3,53.4 178.7,50.9 180.1,49.1 181.4,48.3 182.8,49.1 184.2,47.4 185.5,49.1 186.9,47.4 188.3,48.3 190.0,48.3 190.3,47.4 192.0,50.0 193.7,44.0 194.6,41.4 195.8,46.6 197.1,45.7 198.9,47.4 200.6,46.6 202.3,48.3 203.7,50.0 205.0,52.6 206.4,51.7 207.8,50.0 209.1,50.9 210.5,52.6 211.9,54.3 213.3,56.0 214.6,54.3 216.0,55.1 217.4,53.8 218.7,55.1 220.1,51.7 221.5,50.0 222.9,50.9 224.2,49.1 225.6,50.9 227.0,54.3 228.3,55.1 229.7,56.9 231.1,53.4 232.5,50.9 233.8,49.1 235.2,47.4 236.6,49.1 237.9,47.4 239.3,46.6 240.7,47.4 242.1,46.6 243.4,47.4 244.8,46.6 246.2,48.3 247.5,52.6 248.9,49.1 250.3,44.9 251.7,46.6 253.0,48.3 254.4,52.6 255.8,54.3 257.1,48.3 258.5,45.7 259.9,47.4 261.3,44.9 262.6,46.6 264.0,44.0 265.0,42.3 266.4,45.7 267.8,47.4 269.1,45.7 270.5,50.0 271.9,55.1 273.3,58.6 274.6,57.7 276.0,59.4 277.4,57.7 278.7,60.3 280.1,59.4 281.5,62.9 282.9,60.3 284.2,59.4 285.6,56.9 287.0,54.3 288.3,53.4 289.7,55.1 291.1,56.0 292.5,54.3 293.8,56.0 295.2,56.9 296.6,57.7 297.9,58.6 300.0,59.4 301.3,45.7 302.7,46.6 304.1,45.7 305.4,46.6 306.8,44.9 308.2,45.7 309.5,44.9 310.9,47.4 312.3,46.6 313.7,44.9 315.0,44.0 316.4,45.7 317.8,44.9 319.1,46.6 320.5,48.3 321.9,52.6 323.3,54.3 324.6,53.4 326.0,54.3 327.4,51.7 328.7,50.9 330.1,51.7 331.5,50.9 332.9,52.6 334.2,50.0 335.6,53.4 337.0,51.7 338.3,55.1 339.7,52.6 341.1,55.1 342.5,54.3 343.8,56.9 345.2,56.0 346.6,58.6 347.9,56.9 349.3,59.4 350.7,57.7 352.1,62.0 353.4,62.9 354.8,64.6 356.2,65.4 357.5,67.1 358.9,63.7 360.3,64.6 361.7,62.0 363.0,62.9 364.4,59.4 365.8,62.0 367.1,60.3 368.5,62.0 369.9,59.4 371.3,60.3 372.6,57.7 374.0,56.9 375.4,55.1 376.7,54.3 378.1,53.4 379.5,54.3 380.9,52.6 382.2,53.4 383.6,52.6 385.0,51.7 386.3,50.9 387.7,51.7 389.1,50.0 390.5,50.9 391.8,49.1 393.2,50.0 394.6,48.3 395.9,49.1 397.3,48.3 398.7,49.1 400.1,55.1 401.4,60.3 402.8,63.7 404.2,65.4 405.5,68.9 406.9,72.3 408.3,73.1 410.0,72.3 411.0,73.1 412.3,70.6 413.7,72.3 415.1,71.4 416.5,73.1 417.8,72.3 419.2,74.9 420.6,75.7 421.9,76.6 423.3,78.3 424.7,77.4 426.1,78.3 427.4,75.7 428.8,76.6 430.2,74.0 431.5,76.6 432.9,77.4 434.3,76.6 435.7,74.0 437.0,70.6 438.4,65.4 439.8,62.9 441.1,62.0 442.5,61.1 443.9,62.9 445.3,64.6 446.6,65.4 448.0,67.1 449.4,68.9 450.7,69.7 452.1,72.3 453.5,75.7 454.9,77.4 456.2,76.6 457.6,75.7 459.0,74.9 460.3,76.6 461.7,74.0 463.1,73.1 464.5,74.9 465.8,78.3 467.2,81.7 468.6,82.6 469.9,84.3 471.3,82.6 472.7,84.3 474.1,82.6 475.4,85.1 476.8,81.7 478.2,80.9 479.5,79.1 480.9,81.7 482.3,80.0 483.7,86.0 484.7,87.7 485.7,79.1 486.7,68.9 487.8,70.6 488.8,68.9 489.8,70.6 491.2,74.0 492.6,74.9 493.9,70.6 495.3,67.1 496.7,64.6 498.1,68.9 499.4,65.4 500.8,63.7 502.2,65.4 503.5,63.7 504.9,65.4 506.3,63.7 507.7,68.9 509.0,72.3 510.4,74.0 511.8,72.3 513.1,68.9 514.5,62.9 515.9,59.4 517.3,63.7 518.6,67.1 520.0,68.9 521.0,67.1 522.3,63.7 523.7,65.4 525.1,63.7 526.5,65.4 527.8,62.9 529.2,56.9 530.6,63.7 531.9,65.4 533.3,62.0 534.7,58.6 536.1,63.7 537.4,62.9 538.8,56.9 540.2,60.3 541.5,62.0 542.9,63.7 544.3,62.9 545.7,62.0 547.0,60.3 548.4,59.4 549.8,58.6 551.1,56.9 552.5,59.4 553.9,65.4 554.9,74.0 555.9,68.9 557.3,60.3 558.7,56.0 560.1,56.9 561.4,55.1 562.8,54.3 564.2,53.4 565.5,52.6 566.9,56.9 568.3,56.0 569.7,58.6 571.0,63.7 572.4,58.6 573.8,54.3 575.1,52.6 576.5,53.4 577.9,54.3 579.3,55.1 580.6,54.3 582.0,53.4 583.4,52.6 584.7,54.3 586.1,57.7 587.5,58.6 588.9,54.3 590.2,56.0 591.6,56.9 593.0,56.0 594.3,56.9 595.7,54.3 597.1,53.4 598.5,52.6 599.8,54.3 601.2,56.9 602.6,59.4 603.9,58.6 605.3,56.0 606.7,53.4 608.1,54.3 609.4,56.9 610.8,60.3 612.2,55.1 613.5,52.6 614.9,54.3 616.3,52.6 617.7,51.7 619.0,53.4 620.4,54.3 621.8,55.1 623.1,54.3 624.5,55.1 625.9,56.0 627.3,55.1 628.6,56.9 630.0,56.0 631.0,56.9 632.3,56.0 633.7,57.7 635.1,55.1 636.5,50.9 637.8,56.9 639.2,63.7 640.6,72.3 641.9,75.7 643.3,74.9 644.7,74.0 646.1,75.7 647.4,78.3 648.8,80.0 650.2,77.4 651.2,70.6 652.2,60.3 653.3,52.6 654.3,50.9 655.3,50.0 656.3,53.4 657.4,60.3 658.4,72.3 659.8,74.0 661.1,70.6 662.5,68.9 663.9,68.0 665.3,69.7 666.6,72.3 668.0,74.9 669.4,72.3 670.7,68.9 672.1,60.3 673.5,53.4 674.9,50.9 676.2,48.3 677.6,50.9 679.0,48.3 680.3,47.4 681.7,50.9 683.1,49.1 684.5,52.6 685.8,55.1 687.2,54.3 688.6,56.9 689.9,55.1 691.3,58.6 692.7,56.9 694.1,60.3 695.4,59.4 696.8,57.7 698.2,61.1 699.5,59.4 700.9,58.6 702.3,57.7 703.7,60.3 705.0,59.4 706.4,62.9 707.8,63.7 709.1,65.4 710.5,67.1 711.9,69.7 713.3,65.4 714.6,72.3 716.0,74.9 717.4,68.9 718.4,62.9 719.4,74.0 720.8,77.4 722.2,80.0 723.5,77.4 724.9,79.1 726.3,78.3 727.7,80.9 729.0,84.3 730.4,81.7 731.8,80.0 733.1,79.1 734.5,77.4 735.9,70.6 737.3,58.6 738.3,50.9 739.3,48.3 740.0,47.4 740.2,46.6 741.3,48.3 742.3,47.4 743.3,48.3 744.3,47.4 745.4,49.1 746.4,47.4 747.4,48.3 748.5,50.0 749.5,51.7 750.5,50.9 751.5,53.4 752.6,56.9 753.6,60.3 754.6,63.7 755.7,68.9 756.7,69.7 757.7,68.0 758.7,68.9 759.8,68.5 760.8,69.7 761.8,72.3 762.9,74.9 763.9,77.4 764.9,79.1 765.9,80.0 767.0,78.3 768.0,80.0 769.0,80.9 770.1,80.0 771.1,80.5 772.1,79.1 773.1,77.4 774.2,74.0 775.2,68.9 776.2,56.9 777.3,62.0 778.3,70.6 779.3,73.1 780.3,68.9 781.4,65.4 782.4,72.3 783.4,68.9 784.5,62.0 785.5,56.9 786.5,55.1 787.5,54.3 788.6,56.0 789.6,59.4 790.6,63.7 791.7,68.9 792.7,70.6 793.7,65.4 794.7,60.3 795.8,59.4 796.8,62.9 797.8,63.7 798.9,64.6 799.9,63.7 800.9,64.6 801.9,65.4 803.0,72.3 804.0,74.0 805.0,74.9 806.1,76.6 807.1,74.0 808.1,65.4" fill="none" stroke="#00ff3c" stroke-width="1" shape-rendering="crispEdges"/>
<polyline points="76.9,56.9 78.2,62.0 79.6,58.6 81.0,65.4 82.3,63.7 83.7,68.9 85.1,67.1 86.5,74.0 87.8,72.3 89.2,77.4 90.6,75.7 91.9,70.6 93.0,79.1 94.0,86.0 95.4,87.7 96.7,84.3 98.1,80.9 99.5,77.4 100.9,72.3 102.2,70.6 103.6,75.7 105.0,82.6 106.3,86.0 107.7,91.1 109.1,92.9 110.5,84.3 111.8,79.1 113.2,77.4 114.6,79.1 115.9,82.6 117.3,80.9 118.7,86.0 120.1,82.6 121.4,87.7 122.8,80.9 124.2,86.0 125.5,82.6 126.9,74.0 128.3,68.9 129.7,70.6 131.0,68.9 132.4,70.6 133.8,72.3 135.1,69.7 136.5,68.9 137.9,65.4 139.3,63.7 140.6,65.4 142.0,63.7 143.4,62.0 144.7,65.4 146.1,63.7 147.5,72.3 148.9,62.0 150.2,60.3 151.6,65.4 153.0,74.0 154.3,58.6 155.7,55.1 157.1,62.0 158.5,63.7 159.8,62.0 161.2,63.7 162.6,64.6 163.9,67.1 165.3,68.9 166.7,65.4 168.1,63.7 169.4,68.9 170.8,72.3 172.2,67.1 173.5,63.7 174.9,60.3 176.3,58.6 177.7,56.9 179.0,55.1 180.4,53.4 181.8,52.6 183.1,51.7 184.5,52.6 185.9,50.9 187.3,52.6 188.6,51.7 190.0,52.6 190.3,55.1 192.0,58.6 193.7,55.1 195.4,53.4 197.1,55.1 198.9,56.9 200.6,54.3 202.3,56.0 204.0,57.7 205.7,62.0 207.4,62.9 209.1,63.7 210.9,64.6 212.6,65.4 214.3,64.6 216.0,65.1 217.7,63.7 219.4,64.6 221.1,63.7 222.9,64.1 224.6,62.9 226.3,63.7 228.0,65.1 229.7,64.6 231.4,62.9 233.1,61.1 234.5,58.9 235.9,58.2 237.3,58.9 238.6,57.7 240.0,56.9 241.4,57.7 242.7,56.9 244.1,58.2 245.5,58.6 246.9,57.7 248.2,58.2 249.6,57.7 251.0,59.4 252.3,62.9 253.7,65.4 255.1,64.6 256.5,62.0 257.8,56.9 259.2,60.3 260.6,55.1 261.9,58.6 263.3,56.9 264.7,62.0 266.1,65.4 267.4,58.6 268.8,56.9 270.2,55.1 271.5,62.0 272.9,65.4 274.3,63.7 275.7,69.7 277.0,65.4 278.4,70.6 279.8,65.4 281.1,68.9 282.5,65.4 283.9,62.0 285.3,58.6 286.6,56.9 288.0,54.3 289.4,56.0 290.7,57.7 292.1,56.9 293.5,58.6 294.9,57.7 296.2,59.4 297.6,58.6 299.0,59.9 300.0,60.3 301.3,57.7 302.7,55.1 304.1,56.9 305.4,54.3 306.8,56.9 308.2,55.1 309.5,56.9 310.9,55.1 312.3,54.3 313.7,55.1 315.0,52.6 316.4,53.4 317.8,52.6 319.1,54.3 320.5,56.9 321.9,62.0 323.3,58.6 324.6,60.3 326.0,59.4 327.4,56.9 328.7,56.0 330.1,56.9 331.5,58.6 332.9,60.3 334.2,59.4 335.6,61.1 337.0,62.9 338.3,62.0 339.7,64.6 341.1,66.3 342.5,63.7 343.8,62.9 345.2,62.0 346.6,65.4 347.9,64.6 349.3,67.1 350.7,65.4 352.1,68.9 353.4,68.0 354.8,70.6 356.2,71.4 357.2,74.9 358.2,70.6 359.6,69.7 361.0,68.0 362.3,68.9 363.7,66.3 365.1,68.9 366.5,65.4 367.8,67.1 369.2,65.4 370.6,67.1 371.9,64.6 373.3,62.9 374.7,61.1 376.1,59.4 377.4,58.6 378.8,59.4 380.2,57.7 381.5,58.6 382.9,57.7 384.3,59.4 385.7,57.7 387.0,56.9 388.4,55.1 389.8,54.3 391.1,52.6 392.5,53.4 393.9,51.7 395.3,52.6 396.6,50.9 398.0,51.7 399.4,55.1 400.7,60.3 402.1,63.7 403.5,65.4 404.9,68.0 406.2,70.6 407.6,68.9 409.0,71.4 410.0,70.6 411.0,70.6 412.3,67.1 413.7,68.9 415.1,68.0 416.5,69.7 417.8,68.9 419.2,70.6 420.6,69.7 421.9,70.6 423.3,68.9 424.7,69.7 426.1,68.0 427.4,68.9 428.8,67.1 430.2,69.7 431.5,71.4 432.9,69.7 434.3,68.0 435.7,66.3 437.0,63.7 438.4,59.4 439.8,56.0 441.1,57.7 442.5,53.4 443.9,58.6 445.3,60.3 446.6,62.0 448.0,62.9 449.4,63.7 450.7,65.4 452.1,68.0 453.5,68.9 454.9,69.7 456.2,68.9 457.6,70.6 459.0,68.9 460.3,71.4 461.7,69.7 463.1,68.9 464.5,69.7 465.8,71.4 467.2,74.0 468.6,74.9 469.9,77.4 471.3,78.3 472.7,80.0 474.1,78.3 475.4,80.0 476.8,74.9 478.2,79.1 479.5,78.3 480.9,80.0 482.3,78.3 483.7,82.6 484.7,79.1 485.7,75.7 487.1,72.3 488.5,74.0 489.8,72.3 491.2,74.9 492.6,73.1 493.9,70.6 495.3,67.1 496.7,65.4 498.1,67.1 499.4,63.7 500.8,65.4 502.2,63.7 503.5,66.3 504.9,64.6 506.3,68.9 507.7,70.6 509.0,72.3 510.4,71.4 511.8,68.9 513.1,65.4 514.5,63.7 515.9,65.4 517.3,67.1 518.6,69.7 520.0,68.9 521.0,65.4 522.3,60.3 523.7,70.6 525.1,67.1 526.5,65.4 527.8,67.1 529.2,58.6 530.6,65.4 531.9,71.4 533.3,63.7 534.7,60.3 535.7,55.1 537.1,63.7 538.5,65.4 539.8,63.7 541.2,65.4 542.6,67.1 543.9,66.3 545.3,68.0 546.7,66.3 548.1,67.1 549.4,66.3 550.8,65.4 552.2,67.1 553.5,65.4 554.6,71.4 555.9,67.1 557.3,64.6 558.7,63.7 560.1,65.4 561.4,62.9 562.8,64.6 564.2,62.9 565.5,62.0 566.9,63.7 568.3,62.9 569.7,64.6 571.0,63.7 572.4,62.9 573.8,63.7 575.1,62.0 576.5,61.1 577.9,62.9 579.3,65.4 580.6,64.6 582.0,65.4 583.4,64.6 584.7,66.3 586.1,65.4 587.5,67.1 588.9,66.3 590.2,68.0 591.6,67.1 593.0,66.3 594.3,68.0 595.7,67.1 597.1,66.3 598.5,68.0 599.8,68.9 601.2,69.7 602.6,70.6 603.9,71.4 605.3,69.7 606.7,68.9 608.1,65.4 609.4,67.1 610.8,70.6 612.2,68.0 613.5,65.4 614.9,66.3 616.3,64.6 617.7,63.7 619.0,65.4 620.4,64.6 621.8,66.3 623.1,65.4 624.5,67.1 625.9,68.0 627.3,67.1 628.6,65.4 630.0,63.7 631.0,65.4 632.3,63.7 633.7,67.1 635.1,65.4 636.5,62.9 637.8,63.7 639.2,65.4 640.6,68.9 641.9,69.7 643.3,68.0 644.7,65.4 646.1,67.1 647.4,68.9 648.8,70.6 650.2,71.4 651.2,68.9 652.2,62.0 653.3,55.1 654.3,53.4 655.3,51.7 656.3,55.1 657.4,60.3 658.4,65.4 659.8,67.1 661.1,64.6 662.5,65.4 663.9,62.9 665.3,64.6 666.6,63.7 668.0,65.4 669.4,63.7 670.7,62.0 672.1,59.4 673.5,56.9 674.9,58.6 676.2,57.7 677.6,60.3 679.0,56.9 680.3,58.6 681.7,60.3 683.1,58.6 684.5,59.4 685.8,61.1 687.2,62.0 688.6,63.7 689.9,65.4 691.3,67.1 692.7,68.9 694.1,72.3 695.4,74.0 696.8,70.6 698.2,67.1 699.5,70.6 700.9,73.1 702.3,74.9 703.7,73.1 705.0,71.4 706.4,72.3 707.8,74.0 709.1,73.1 710.5,74.0 711.9,74.9 713.3,76.6 714.6,79.1 716.0,80.0 717.4,78.3 718.7,76.6 720.1,78.3 721.5,76.6 722.9,74.9 724.2,76.6 725.6,74.9 727.0,76.6 728.3,74.9 729.7,75.7 731.1,74.0 732.5,73.1 733.8,74.0 735.2,70.6 736.6,65.4 737.9,63.7 739.0,65.4 740.0,64.6 740.2,54.3 741.3,56.0 742.3,53.4 743.3,55.1 744.3,52.6 745.4,50.9 746.4,52.6 747.4,55.1 748.5,56.9 749.5,55.1 750.5,53.4 751.5,55.1 752.6,54.3 753.6,56.0 754.6,58.6 755.7,61.1 756.7,60.3 757.7,59.4 758.7,59.9 759.8,59.4 760.8,61.1 761.8,62.9 762.9,64.6 763.9,67.1 764.9,69.7 765.9,72.3 767.0,71.4 768.0,69.7 769.0,68.9 770.1,69.7 771.1,68.9 772.1,68.0 773.1,66.3 774.2,64.6 775.2,62.0 776.2,56.9 777.3,59.4 778.3,63.7 779.3,65.4 780.3,62.0 781.4,59.4 782.4,65.4 783.4,63.7 784.5,60.3 785.5,56.9 786.5,56.0 787.5,55.1 788.6,56.9 789.6,58.6 790.6,56.9 791.7,59.4 792.7,57.7 793.7,60.3 794.7,58.6 795.8,61.1 796.8,63.7 797.8,68.9 798.9,72.3 799.9,67.1 800.9,64.6 801.9,63.7 803.0,64.6 804.0,65.4 805.0,66.3 806.1,65.4 807.1,67.1 808.1,66.3" fill="none" stroke="#e6ff00" stroke-width="1" shape-rendering="crispEdges"/>
<polyline points="76.9,53.4 77.7,67.1 78.6,50.0 79.4,47.4 80.3,63.7 81.3,50.0 82.0,65.4 83.0,48.3 84.1,70.6 85.1,56.9 86.1,75.7 87.1,62.0 88.2,80.9 89.2,67.1 89.9,87.7 90.9,74.0 91.6,50.9 92.3,44.9 92.8,65.4 93.5,96.3 94.3,107.4 95.4,96.3 96.6,99.7 97.4,97.1 98.8,101.4 100.0,91.1 101.2,86.0 102.6,77.4 103.9,82.6 105.1,86.0 106.3,94.6 107.4,104.9 108.4,114.3 109.4,99.7 110.5,89.4 111.7,82.6 112.9,79.1 114.2,89.4 115.4,90.3 116.6,86.0 117.7,89.4 118.9,99.7 119.7,92.9 120.7,103.1 121.8,110.0 122.5,114.3 123.5,99.7 124.5,89.4 125.5,94.6 126.6,89.4 127.6,82.6 128.6,87.7 129.7,79.1 130.7,84.3 131.7,82.6 132.7,77.4 133.8,86.0 134.8,81.7 135.5,89.4 136.5,79.1 137.5,75.7 138.6,80.9 139.6,70.6 140.6,74.0 141.7,63.7 142.7,51.7 143.7,74.0 144.7,56.9 145.8,70.6 146.8,58.6 147.8,55.1 148.9,44.9 149.9,50.9 150.9,42.3 151.9,48.3 153.0,46.6 154.0,53.4 155.0,48.3 156.1,51.7 157.1,50.9 158.1,48.3 159.1,43.1 160.2,45.7 161.2,50.0 162.2,46.6 163.3,44.0 164.3,38.9 165.3,42.3 166.3,38.0 167.4,37.1 168.4,40.6 169.4,38.0 170.5,41.4 171.5,47.4 172.5,45.7 173.5,38.9 174.6,43.1 175.6,37.1 176.6,42.3 177.7,48.3 178.7,56.9 179.7,46.6 180.7,63.7 181.8,55.1 182.8,43.1 183.8,65.4 184.9,56.9 185.9,44.9 186.9,60.3 187.9,63.7 189.0,56.9 190.0,65.4 190.3,46.6 191.3,44.0 192.3,42.3 193.4,56.9 194.4,69.7 195.4,48.3 196.5,62.0 197.5,69.7 198.5,45.7 199.5,56.9 200.6,46.6 201.6,55.1 202.6,42.3 203.7,53.4 204.7,65.4 205.7,70.6 206.7,68.9 207.8,73.1 208.8,72.3 209.8,79.1 210.9,74.0 211.9,72.3 212.9,79.1 213.9,78.3 215.0,80.9 216.0,79.1 217.0,81.7 218.1,82.6 219.1,80.0 220.1,79.1 221.1,80.9 222.2,76.6 223.2,79.1 224.2,75.7 225.3,80.0 226.3,77.4 227.3,79.1 228.3,78.3 229.4,81.7 230.4,79.1 231.4,80.0 232.5,77.4 233.5,75.7 234.5,73.1 235.5,75.7 236.6,74.0 237.6,73.1 238.6,70.6 239.7,74.0 240.7,75.7 241.7,76.6 242.7,74.9 243.8,73.1 244.8,74.0 245.8,75.7 246.9,76.6 247.9,79.1 248.9,75.7 249.9,77.4 251.0,80.9 252.0,78.3 252.7,82.6 253.7,79.1 254.7,80.0 255.8,72.3 256.5,56.9 257.1,45.7 257.8,65.4 258.5,44.9 259.2,78.3 259.9,62.0 260.6,74.9 261.3,48.3 261.9,45.7 262.6,65.4 263.3,50.0 264.0,68.9 264.7,46.6 265.4,49.1 266.1,65.4 266.7,51.7 267.4,56.9 268.1,68.9 268.8,58.6 269.5,65.4 270.2,48.3 270.9,46.6 271.9,53.4 272.9,55.1 273.9,56.9 275.0,54.3 276.0,56.0 277.0,53.4 278.1,50.9 279.1,48.3 280.1,44.9 281.1,47.4 282.2,42.3 283.2,39.7 284.2,39.4 285.3,41.4 286.3,40.6 287.3,45.7 288.3,50.0 289.4,51.7 290.4,48.3 291.4,45.7 292.5,55.1 293.5,47.4 294.5,45.7 295.5,44.9 296.6,47.4 297.6,42.3 298.6,51.7 300.0,56.9 300.6,43.1 301.7,60.3 302.7,46.6 303.7,44.9 304.7,56.9 305.8,48.3 306.8,46.6 307.8,56.9 308.9,51.7 309.9,62.0 310.9,56.9 311.9,48.3 313.0,45.7 314.0,44.0 315.0,45.7 316.1,42.3 317.1,44.9 318.1,43.1 319.1,45.7 320.2,46.6 320.9,56.0 321.9,44.9 322.6,56.9 323.6,48.3 324.6,55.1 325.7,44.0 326.3,53.4 327.0,65.4 328.1,64.6 329.1,66.3 330.1,65.4 331.1,67.1 332.2,72.3 333.2,74.0 334.2,75.7 335.3,74.9 336.3,76.6 337.3,79.1 338.3,78.3 339.4,84.3 340.4,80.0 341.4,77.4 342.5,81.7 343.5,79.1 344.5,80.9 345.5,77.4 346.6,84.3 347.6,79.1 348.6,82.6 349.7,80.0 350.7,86.0 351.7,82.6 352.7,88.6 353.8,89.4 354.8,87.7 355.8,90.3 356.9,88.6 357.9,83.4 358.9,89.4 359.9,82.6 361.0,84.3 362.0,90.3 363.0,77.4 364.1,87.7 365.1,80.9 366.1,86.0 367.1,82.6 368.2,81.7 369.2,86.0 370.2,82.6 371.3,84.3 372.3,80.9 373.3,80.0 374.3,77.4 375.4,74.0 376.4,70.6 377.4,67.1 378.5,65.4 379.5,63.7 380.5,64.6 381.5,62.9 382.6,62.0 383.6,60.3 384.6,59.4 385.3,70.6 386.3,72.3 387.4,74.9 388.4,62.0 389.4,53.4 390.5,44.9 391.1,65.4 391.8,50.0 392.5,74.0 393.2,53.4 394.2,48.3 394.9,65.4 395.6,50.0 396.3,72.3 397.0,48.3 397.7,67.1 398.3,50.0 399.0,55.1 399.7,68.9 400.4,63.7 401.1,55.1 401.8,48.3 402.8,46.6 403.8,45.7 404.9,45.7 405.9,46.2 406.9,46.6 407.9,47.4 409.0,46.9 410.0,48.3 411.0,48.3 412.3,47.4 413.7,48.3 415.1,47.4 416.5,46.6 417.8,47.4 419.2,44.9 420.6,45.7 421.9,46.6 423.3,45.7 424.7,47.4 426.1,46.6 427.4,48.3 428.8,49.1 430.2,48.3 431.5,50.9 432.9,50.0 434.3,51.7 435.7,50.9 437.0,52.6 438.4,50.0 439.8,55.1 441.1,56.9 442.2,54.3 443.2,58.6 444.2,54.3 445.3,59.4 446.3,58.6 447.3,61.1 448.3,59.4 449.4,60.3 450.4,58.6 451.4,59.4 452.1,68.9 453.1,74.9 454.2,74.0 455.2,76.6 456.2,74.0 457.3,75.7 458.3,73.1 459.3,75.7 460.3,74.0 461.4,76.6 462.4,74.0 463.4,77.4 464.5,79.1 465.5,77.4 466.5,82.6 467.5,90.3 468.6,85.1 469.6,91.1 470.6,86.0 471.7,89.4 472.7,92.0 473.7,92.9 474.7,93.7 475.8,89.4 476.8,82.6 477.8,89.4 478.9,90.3 479.9,85.1 480.9,91.1 481.9,92.9 483.0,98.0 484.0,104.9 485.0,92.9 486.1,89.4 487.1,96.3 488.1,86.0 489.1,98.0 490.2,94.6 491.2,101.4 492.2,87.7 493.3,92.9 494.3,82.6 495.3,70.6 496.3,63.7 497.4,50.9 498.4,50.9 499.4,50.0 500.5,55.1 501.5,60.3 502.5,53.4 503.5,56.9 504.6,52.6 505.6,56.9 506.6,53.4 507.7,51.7 508.7,50.9 509.7,50.0 510.7,50.9 511.8,49.1 512.5,47.4 513.1,53.4 514.2,56.9 515.2,58.6 516.2,56.9 517.3,55.1 518.3,48.3 519.3,49.1 520.0,54.3 520.3,46.6 521.3,52.6 522.3,44.9 523.4,58.6 524.4,50.9 525.4,48.3 526.5,60.3 527.5,50.0 528.5,46.6 529.5,41.4 530.6,40.6 531.6,55.1 532.6,47.4 533.7,50.9 534.7,43.1 535.7,39.7 536.7,48.3 537.8,44.0 538.8,50.0 539.8,42.3 540.9,46.6 541.9,44.9 542.9,49.1 543.9,47.4 545.0,50.9 546.0,48.3 547.0,50.0 548.1,47.4 549.1,45.7 550.1,50.9 551.1,46.6 552.2,54.3 553.2,48.3 554.2,52.6 555.3,47.4 556.3,54.3 557.3,45.7 558.3,58.6 559.4,54.3 560.4,64.6 561.4,50.0 562.5,65.4 563.5,54.3 564.5,74.0 565.5,52.6 566.6,76.6 567.6,64.6 568.6,77.4 569.7,68.9 570.7,81.7 571.7,78.3 572.4,65.4 573.1,80.9 574.1,80.0 575.1,78.3 576.2,79.1 577.2,80.0 578.2,82.6 579.3,80.0 580.3,81.7 581.3,79.1 582.3,80.9 583.4,78.3 584.4,82.6 585.4,80.0 586.5,84.3 587.5,81.7 588.5,85.1 589.5,78.3 590.6,87.7 591.6,83.4 592.6,80.9 593.7,84.3 594.7,80.0 595.7,82.6 596.7,80.9 597.8,78.3 598.8,81.7 599.8,83.4 600.9,80.0 601.9,81.7 602.9,85.1 603.9,82.6 605.0,85.1 606.0,81.7 607.0,80.0 608.1,79.1 609.1,78.3 610.1,82.6 611.1,88.6 612.2,82.6 613.2,84.3 614.2,81.7 615.3,78.3 616.3,75.7 617.3,76.6 618.3,74.0 619.4,77.4 620.4,75.7 621.4,78.3 622.5,74.9 623.5,75.7 624.5,71.4 625.5,73.1 626.6,74.9 627.6,72.3 628.3,53.4 629.0,50.0 630.0,50.9 630.6,50.9 631.7,74.0 632.7,53.4 633.7,70.6 634.7,56.9 635.8,72.3 636.8,44.9 637.8,68.9 638.9,55.1 639.9,58.6 640.9,48.3 641.9,46.6 643.0,49.1 644.0,47.4 645.0,48.3 646.1,50.0 647.1,47.4 648.1,49.1 649.1,50.9 650.2,48.3 651.2,67.1 652.2,48.3 653.3,44.0 654.3,50.9 655.3,44.9 656.3,47.4 657.4,50.9 658.4,46.6 659.4,49.1 660.5,47.4 661.5,50.9 662.5,47.4 663.5,49.1 664.6,50.0 665.6,51.7 666.6,48.3 667.7,50.0 668.7,48.3 669.7,49.1 670.7,50.9 671.8,48.3 672.8,58.6 673.8,48.3 674.9,63.7 675.9,50.0 676.9,65.4 677.9,51.7 679.0,67.1 680.0,44.0 681.0,67.1 682.1,55.1 683.1,74.0 684.1,60.3 685.1,80.9 686.2,65.4 687.2,73.1 688.2,68.9 689.3,79.1 690.3,70.6 691.3,82.6 692.3,75.7 693.4,86.0 694.4,89.4 695.4,92.0 696.5,87.7 697.5,82.6 698.5,79.1 699.5,84.3 700.6,89.4 701.6,95.4 702.6,89.4 703.7,86.0 704.7,89.4 705.7,84.3 706.7,87.7 707.8,86.0 708.8,89.4 709.8,80.9 710.9,94.6 711.9,82.6 712.9,91.1 713.9,87.7 715.0,94.6 716.0,84.3 717.0,91.1 718.1,89.4 719.1,79.1 720.1,87.7 721.1,84.3 722.2,89.4 723.2,95.4 724.2,87.7 725.3,94.6 726.3,89.4 727.3,82.6 728.3,87.7 729.4,86.0 730.4,89.4 731.4,82.6 732.5,79.1 733.5,77.4 734.5,74.0 735.2,62.0 735.9,51.7 736.9,68.9 737.9,53.4 739.0,58.6 740.0,53.4 740.2,63.7 740.9,56.9 741.6,67.1 742.3,58.6 743.0,55.1 743.7,68.9 744.3,60.3 745.0,70.6 745.7,63.7 746.4,68.9 747.1,58.6 747.8,62.0 748.5,65.4 749.1,59.4 749.8,63.7 750.5,55.1 751.2,50.9 751.9,58.6 752.6,49.1 753.3,62.0 753.9,50.9 754.6,47.4 755.3,45.7 756.3,46.6 757.4,44.9 758.4,47.4 759.4,44.0 760.5,46.6 761.5,43.1 762.5,45.7 763.5,42.3 764.6,41.4 765.6,44.0 766.6,45.7 767.7,47.4 768.7,46.6 769.7,47.4 770.7,45.7 771.8,46.6 772.8,48.3 773.8,47.4 774.9,49.1 775.9,50.9 776.9,48.3 777.9,52.6 779.0,49.1 780.0,45.7 781.0,44.0 782.1,39.7 782.7,45.7 783.8,44.0 784.8,49.1 785.8,50.9 786.5,59.4 787.2,50.9 787.9,55.1 788.6,50.9 789.3,56.9 789.9,39.7 790.6,55.1 791.3,62.0 792.0,50.9 792.7,60.3 793.4,52.6 794.1,62.0 794.7,58.6 795.4,65.4 796.1,60.3 796.8,68.9 797.5,74.0 798.2,67.1 798.9,72.3 799.5,76.6 800.2,70.6 800.9,63.7 801.6,50.9 802.6,50.0 803.7,52.6 804.7,54.3 805.7,56.0 806.4,57.7 807.1,53.4 807.8,49.1" fill="none" stroke="#ff0000" stroke-width="1" shape-rendering="crispEdges"/>
<polyline points="77.1,334.2 78.0,354.7 78.9,332.4 79.8,348.4 80.7,328.9 81.6,344.9 82.4,327.1 83.5,311.1 84.2,344.9 85.1,328.9 86.0,341.3 87.2,321.8 88.3,332.4 89.6,348.4 91.0,344.9 92.2,328.9 92.8,309.3 94.0,306.7 95.2,308.4 96.7,304.9 98.1,308.4 99.3,314.7 100.6,334.2 101.6,344.9 102.5,339.6 103.4,348.4 104.3,355.6 105.0,332.4 106.1,316.4 107.3,306.7 109.1,305.8 110.5,303.6 111.8,307.6 112.7,312.9 114.4,307.6 115.9,304.9 117.6,304.0 119.4,308.4 120.7,315.6 121.6,310.2 123.0,309.3 124.8,310.8 126.5,313.8 127.8,320.0 128.7,330.7 129.6,346.7 130.1,356.4 131.0,344.9 132.6,330.7 133.6,341.3 134.4,358.2 135.4,327.1 136.3,339.6 137.6,348.4 138.4,349.3 139.7,341.3 140.8,334.2 141.6,337.8 142.9,334.2 144.7,325.3 146.1,317.3 147.3,312.9 148.6,309.3 149.6,316.4 150.5,327.1 151.8,314.7 153.0,305.8 153.9,314.7 155.0,325.3 155.7,332.4 156.8,327.1 158.0,317.3 159.2,323.6 160.7,326.2 162.4,323.6 164.2,316.4 165.6,309.3 166.9,304.0 167.8,307.6 168.8,300.4 170.4,304.0 171.7,307.6 173.1,313.8 174.9,308.4 176.1,300.4 177.6,291.6 178.8,294.2 180.2,298.7 181.6,307.6 182.9,298.7 184.1,293.3 185.2,304.0 186.1,314.7 187.0,304.0 187.7,327.1 188.8,344.0 190.0,330.7 191.2,320.0 192.3,325.3 193.2,311.1 194.4,327.1 195.9,334.2 197.1,339.6 198.0,347.6 198.7,339.6 199.4,353.8 200.1,332.4 201.0,307.6 201.7,299.6 202.6,309.3 203.7,324.4 205.1,320.0 206.9,317.3 208.3,318.2 209.6,312.0 210.8,324.4 212.2,318.2 213.6,313.8 214.9,318.2 216.7,323.6 218.4,319.1 220.2,318.2 221.5,321.8 222.5,318.2 223.8,324.4 225.2,327.1 226.4,324.4 227.9,316.4 229.1,307.6 230.0,306.7 230.0,304.0 230.9,307.6 232.1,318.2 233.2,339.6 233.6,348.4 235.0,339.6 236.8,346.7 238.0,355.6 238.5,362.7 239.8,355.6 241.0,352.9 242.1,364.4 242.8,348.4 243.5,335.1 245.1,338.7 246.4,343.1 247.8,330.7 249.6,312.9 251.3,307.6 252.8,296.0 253.5,292.4 254.9,297.8 256.3,304.0 258.1,302.2 259.5,297.8 260.6,306.7 262.0,296.0 263.1,298.7 264.1,309.3 265.2,323.6 266.4,335.1 267.3,316.4 268.2,302.2 269.5,303.1 270.9,296.9 272.7,288.0 274.1,279.1 275.3,272.9 276.2,287.1 277.3,272.9 278.9,272.9 280.3,278.2 281.6,283.6 283.0,284.4 284.4,288.0 285.6,292.4 287.2,292.4 288.7,280.9 290.4,271.1 292.2,274.7 293.6,277.3 295.1,278.2 296.5,286.2 297.6,302.2 299.0,316.4 300.8,326.2 302.5,332.4 303.8,328.9 305.6,335.1 307.3,332.4 309.1,327.1 311.4,318.2 313.2,312.0 315.0,310.2 316.8,311.1 318.5,306.7 320.3,304.0 322.1,296.0 323.9,297.8 325.3,284.4 326.4,271.1 327.8,284.4 328.8,298.7 330.3,302.2 331.7,316.4 332.8,334.2 333.6,346.7 334.9,330.7 335.8,323.6 337.2,334.2 338.4,318.2 339.5,306.7 340.6,311.1 342.0,324.4 343.1,314.7 344.1,304.0 345.2,322.7 346.6,335.1 348.0,344.9 349.1,344.0 350.9,341.3 352.3,324.4 353.7,315.6 355.3,312.9 356.6,312.0 358.0,314.7 359.8,324.4 361.2,312.9 362.4,305.8 363.3,323.6 364.4,331.6 365.5,314.7 366.9,307.6 368.7,303.1 370.4,298.7 371.9,294.2 373.3,296.9 374.9,295.1 376.7,294.2 378.4,296.0 379.9,296.9 381.5,289.8 382.9,291.6 384.3,295.1 385.7,297.8 387.2,305.8 388.6,314.7 389.5,327.1 390.0,327.1 390.0,327.1 390.9,334.2 392.1,347.6 393.2,327.1 394.4,309.3 395.3,305.8 396.4,330.7 397.5,323.6 398.9,309.3 400.0,307.6 401.0,319.1 402.1,307.6 402.8,291.6 403.5,282.7 404.6,283.6 406.0,288.9 407.8,294.2 409.2,295.1 411.0,293.3 413.1,300.4 414.9,294.2 416.7,295.1 418.4,294.2 420.2,294.2 422.0,296.9 423.8,295.1 425.6,292.4 427.3,291.2 429.1,291.6 430.9,294.2 432.7,292.4 434.4,295.1 435.9,293.3 437.3,290.7 438.9,295.1 440.7,298.7 441.9,299.6 443.3,298.7 444.8,293.3 446.0,291.2 447.8,294.2 449.6,294.2 451.3,296.9 453.1,297.8 454.9,300.4 456.7,297.8 458.1,295.5 459.3,297.8 461.1,299.6 462.9,301.9 464.7,302.2 466.4,303.1 468.2,303.6 470.0,304.4 471.8,304.4 473.6,303.6 475.0,301.9 476.8,303.1 478.5,302.6 480.3,304.0 482.1,303.6 483.9,304.9 485.6,303.6 486.9,304.0 488.7,307.6 490.4,314.7 492.2,317.3 494.0,317.3 495.8,318.6 497.6,317.3 499.3,317.7 501.1,316.4 503.8,312.0 506.4,307.6 509.1,303.6 510.9,303.1 512.7,304.0 514.4,303.6 516.6,302.6 518.0,304.9 519.8,309.3 521.6,317.3 523.0,311.1 524.2,336.9 525.5,307.6 526.5,304.0 527.8,318.2 528.7,334.2 529.4,352.9 530.1,309.3 530.8,301.3 531.5,298.7 532.2,309.3 533.3,323.6 534.4,316.4 535.4,312.0 536.5,310.2 537.6,317.3 538.6,320.9 540.2,318.2 542.0,316.4 543.8,315.6 545.6,312.9 546.4,305.8 547.3,297.8 548.6,296.5 550.0,300.4 550.0,301.3 551.4,307.6 552.7,315.6 553.9,300.4 555.3,280.9 556.4,288.0 557.8,298.7 559.2,306.7 560.7,296.9 562.1,282.7 562.8,276.4 564.2,280.9 565.6,290.7 567.4,300.4 569.2,307.6 570.4,295.1 571.3,290.7 572.8,291.6 574.2,298.7 575.8,303.1 577.6,305.8 579.3,308.4 580.8,302.2 582.4,304.9 583.8,303.1 585.6,298.7 587.0,297.8 588.2,303.6 589.5,294.2 590.9,289.8 592.7,288.9 594.4,288.0 595.9,290.7 597.3,294.2 598.9,291.6 600.7,290.7 602.1,286.2 603.7,283.6 605.1,288.9 606.2,296.9 607.2,309.3 608.7,307.6 610.1,296.9 611.3,282.7 612.6,274.7 613.6,279.1 614.7,288.9 615.8,301.3 616.8,287.1 618.1,279.1 619.3,272.0 620.4,265.8 621.5,270.2 622.9,277.3 624.3,281.8 625.7,285.3 626.8,280.9 627.7,273.4 628.6,284.4 629.6,309.3 630.9,327.1 632.1,343.1 632.8,353.8 633.6,343.1 634.4,358.2 635.3,344.9 636.4,339.6 637.5,320.0 638.5,300.4 639.4,312.9 640.7,293.3 641.7,279.1 643.2,282.7 644.2,287.1 645.3,283.6 646.9,289.8 648.1,295.1 649.6,303.1 650.6,294.2 651.3,279.1 652.4,328.9 653.5,304.0 654.5,314.7 655.6,304.0 656.7,323.6 657.7,307.6 658.8,295.1 660.2,293.7 662.0,292.4 663.8,290.7 665.6,290.1 667.3,289.8 668.8,285.3 670.2,289.8 671.6,291.6 672.7,309.3 673.6,327.1 674.4,316.4 675.5,305.8 676.6,327.1 677.6,331.6 678.7,332.4 679.8,327.1 680.7,343.1 681.6,311.1 682.6,327.1 683.3,362.7 684.4,348.4 685.1,339.6 686.2,350.2 687.2,365.3 688.3,341.3 689.2,307.6 690.4,292.4 691.5,307.6 692.6,334.2 693.6,358.2 694.7,339.6 695.8,327.1 696.8,321.8 697.6,307.6 698.6,290.7 699.7,293.3 700.8,301.3 702.0,307.6 702.9,323.6 704.0,334.2 704.7,343.1 705.6,355.6 706.4,330.7 707.5,341.3 708.6,327.1 709.3,315.6 710.0,325.3 711.0,314.7 712.1,309.3 713.3,315.6 714.8,303.1 716.0,304.9 717.1,327.1 717.8,337.8 719.2,342.2 719.9,323.6 720.6,307.6 722.2,305.8 724.0,303.1 725.8,299.6 727.6,297.8 728.4,293.3 729.5,290.7 730.6,295.1 732.0,298.7 733.4,301.3 734.8,298.7 736.1,296.9 737.0,304.9 738.0,316.4 738.8,327.1 739.5,347.6 740.2,314.7 741.2,298.7 742.0,316.4 742.7,332.4 743.6,352.0 744.4,362.7 745.2,341.3 745.9,334.2 746.6,333.3 747.6,357.3 748.7,341.3 749.8,327.1 750.7,318.2 751.9,320.9 753.0,327.1 754.0,330.7 754.8,314.7 755.5,298.7 756.9,294.2 758.0,296.9 759.0,288.9 760.4,289.8 761.5,293.3 762.9,289.8 764.4,287.1 765.8,288.9 767.2,292.4 768.6,296.9 770.0,295.1 771.5,296.0 772.9,299.6 774.3,297.8 775.7,298.7 776.8,307.6 777.5,314.7 778.6,302.2 779.6,297.8 780.9,293.3 782.1,291.6 782.8,302.2 783.6,315.6 784.6,300.4 785.3,291.6 786.4,300.4 787.1,327.1 787.8,344.9 788.5,357.3 789.2,363.6 790.0,352.0 790.7,332.4 791.4,311.1 792.1,321.8 792.8,332.4 793.5,342.2 794.2,323.6 794.9,309.3 796.0,300.4 797.1,294.2 797.8,302.2 798.5,311.1 799.6,298.7 800.6,309.3 801.7,300.4 802.8,292.4 804.2,293.3 805.8,291.6 807.6,289.8 809.3,288.4 810.6,287.6" fill="none" stroke="#000" stroke-width="1" shape-rendering="crispEdges"/>
<polyline points="77.1,530.0 78.0,512.2 79.2,521.1 80.3,530.0 81.0,521.1 81.7,532.7 82.8,524.7 83.9,521.1 84.9,525.6 86.0,530.9 87.4,528.2 88.7,524.7 89.9,519.3 90.6,515.8 91.7,524.7 93.1,528.2 94.9,529.6 96.7,528.2 98.1,530.4 99.5,529.6 100.6,537.1 101.5,549.6 102.0,530.0 102.9,515.8 103.6,509.6 104.7,517.6 105.6,526.4 106.6,530.9 108.2,530.0 110.0,529.6 111.8,529.1 113.6,530.0 115.3,528.6 117.1,527.9 118.9,530.0 120.7,531.8 122.4,529.1 124.2,527.3 126.0,526.1 127.2,526.4 128.3,518.4 129.0,531.8 130.1,549.6 130.8,530.0 131.5,514.0 132.2,510.4 133.3,507.8 134.4,517.6 135.4,512.2 136.7,514.9 137.9,515.8 139.3,514.0 140.8,512.2 142.2,514.9 143.6,513.1 145.0,514.9 146.4,514.0 147.9,519.3 149.3,522.0 150.7,520.2 152.1,522.9 153.6,525.6 155.0,521.1 156.4,516.7 157.5,525.6 158.9,522.9 160.3,517.6 161.7,511.3 163.2,506.5 164.2,512.2 165.6,518.4 167.1,520.8 168.8,522.0 170.6,521.6 172.4,522.9 174.2,522.5 176.0,523.8 177.7,522.9 179.5,522.0 181.3,519.3 182.7,522.9 184.1,526.4 185.6,524.7 187.0,517.6 188.4,509.6 189.5,521.1 190.5,532.7 191.6,515.8 192.7,517.6 193.7,513.1 194.8,519.3 195.9,530.9 196.9,510.4 198.0,526.4 199.1,532.7 200.1,524.7 201.6,515.8 203.0,507.8 204.4,511.3 205.8,515.8 207.2,510.4 208.7,513.1 210.1,516.7 211.5,520.2 212.9,522.9 214.4,524.3 215.8,524.7 217.6,524.3 219.3,521.1 221.1,516.7 222.5,513.1 224.0,510.4 225.4,515.8 226.8,522.9 228.2,527.3 230.0,529.6 230.0,529.6 231.4,524.7 232.8,519.3 234.4,514.0 235.7,516.7 236.8,514.0 238.0,518.4 239.2,522.9 240.3,517.6 241.4,514.0 242.3,527.3 243.2,507.8 244.2,514.9 245.3,511.3 246.4,515.8 247.8,514.0 249.2,509.6 250.6,506.5 252.0,509.0 253.5,510.1 254.9,510.8 256.3,509.6 257.7,507.2 259.2,504.8 260.6,505.1 261.6,509.6 262.7,513.1 263.8,506.5 264.8,508.7 266.3,512.2 267.7,515.4 269.1,516.7 270.9,517.2 272.7,519.3 274.4,522.0 276.2,524.3 278.0,526.4 279.8,527.9 281.6,524.7 283.3,523.2 285.1,524.7 286.9,526.1 288.7,528.2 290.4,529.6 292.2,527.3 293.6,528.2 295.1,524.7 296.1,517.6 297.2,512.2 298.6,513.6 300.0,514.9 301.5,515.8 302.9,517.2 304.7,519.3 306.4,522.0 308.2,522.5 310.0,521.1 311.8,520.2 313.6,522.0 315.3,521.1 317.1,522.9 318.9,524.3 320.3,521.5 321.7,522.9 323.2,523.8 324.6,522.5 326.0,522.9 327.4,530.0 328.8,528.2 330.3,527.3 331.3,529.1 332.4,535.3 333.1,544.2 333.6,552.2 334.5,540.7 335.8,536.2 337.0,538.0 338.4,534.4 340.2,532.7 342.0,531.8 343.8,532.7 345.2,530.9 346.4,523.8 347.0,531.8 347.7,545.1 348.4,533.6 349.1,527.3 350.2,536.2 351.2,541.6 352.3,534.4 353.7,533.6 355.2,535.3 356.6,536.2 358.0,534.4 359.4,537.1 360.8,535.3 362.3,531.8 363.3,536.2 364.4,540.7 365.5,542.4 366.5,536.2 368.0,533.6 369.7,534.4 371.5,533.2 373.3,532.7 375.1,532.1 376.8,531.8 378.6,530.9 380.4,530.4 382.2,530.9 384.0,530.9 385.7,531.2 387.2,531.8 388.2,537.1 389.3,542.4 390.0,543.3 390.0,543.3 391.1,546.0 392.1,549.6 393.2,536.2 394.4,531.8 395.3,530.9 396.4,538.0 397.5,539.8 398.9,537.1 400.0,528.2 401.0,521.1 401.7,520.2 402.8,523.8 404.2,527.3 406.0,529.1 407.8,530.9 409.6,532.7 411.3,534.4 412.4,535.3 413.8,531.8 415.2,530.9 416.7,531.4 418.1,530.0 419.5,530.9 421.3,531.8 423.1,532.1 424.8,531.8 426.6,530.9 428.4,531.8 430.2,530.9 432.0,530.5 433.7,530.4 435.5,530.0 437.3,530.4 439.1,529.1 440.8,530.0 442.6,529.3 444.4,530.0 446.2,529.6 448.0,528.6 449.7,529.1 451.5,528.2 453.3,529.1 455.1,530.4 456.8,528.6 458.6,527.3 460.4,526.8 462.2,527.3 464.0,527.9 465.7,527.0 467.5,527.9 469.3,527.3 471.1,528.2 472.8,527.9 474.6,528.2 476.4,528.6 478.2,527.3 479.6,526.1 481.0,526.8 482.4,526.1 484.2,524.7 486.0,526.8 487.8,524.7 489.2,522.9 490.6,521.1 492.0,524.7 493.8,525.6 495.6,525.0 497.4,526.1 499.2,525.6 500.6,524.3 502.0,525.6 503.8,526.1 505.6,525.6 507.3,523.8 508.8,525.0 510.5,524.7 512.3,525.6 514.1,525.2 515.9,526.1 517.6,526.4 519.4,528.2 521.2,530.9 522.3,536.2 523.3,545.6 524.0,533.6 524.8,524.7 525.8,518.4 526.9,521.1 528.0,526.4 528.7,519.3 529.4,510.1 530.1,521.1 530.8,525.6 531.9,519.3 532.9,522.9 534.0,528.2 535.4,524.7 536.8,520.2 538.3,516.7 539.7,518.4 541.1,515.4 542.5,519.3 544.0,520.2 545.4,520.8 546.8,522.9 548.2,524.7 550.0,525.6 550.0,525.6 551.8,524.7 553.2,525.6 554.6,528.2 556.0,529.1 557.5,528.6 558.9,527.3 560.3,525.6 561.7,524.3 563.2,527.3 564.6,530.9 565.6,532.7 567.1,530.0 568.5,530.9 569.9,528.6 571.3,529.6 573.1,529.1 574.9,530.0 576.7,531.4 578.4,530.0 580.2,527.9 581.6,529.1 583.1,530.9 584.5,528.2 585.9,527.3 587.3,529.1 588.8,532.1 590.2,529.6 591.6,528.2 593.4,529.6 595.2,529.1 596.9,529.6 598.7,527.9 600.5,526.8 602.3,527.9 604.0,530.0 605.5,532.7 606.5,536.2 607.6,530.0 609.0,528.2 610.4,530.0 611.9,531.8 613.3,529.6 614.7,530.9 616.1,528.2 617.2,526.8 618.6,529.1 620.0,530.0 621.8,530.4 623.6,529.6 625.4,528.6 627.2,529.1 628.6,530.0 629.6,533.6 630.4,541.6 631.1,532.7 632.1,537.1 633.2,534.4 634.3,542.4 635.3,531.8 636.4,547.8 637.1,536.2 638.2,530.9 639.2,530.0 640.3,535.3 641.4,531.8 642.8,530.0 644.2,530.9 645.6,529.1 647.1,528.2 648.5,530.0 649.6,526.4 650.6,524.7 651.3,515.8 652.0,531.8 652.8,517.6 653.5,532.7 654.2,521.1 654.9,519.3 655.6,527.3 656.3,530.9 657.4,538.0 658.4,533.6 659.9,530.9 661.6,531.8 663.4,531.4 665.6,531.4 668.2,531.4 670.9,531.2 672.7,530.9 673.7,524.7 675.2,525.6 676.2,516.7 676.9,515.8 677.6,522.9 678.4,528.2 679.1,540.7 679.8,550.4 680.5,540.7 681.6,530.0 682.6,542.4 683.7,535.3 684.8,539.8 685.8,533.6 687.2,532.7 688.7,531.8 690.1,530.4 691.5,530.9 692.6,537.1 693.6,548.7 694.4,528.2 695.4,538.9 696.1,544.2 697.2,533.6 698.3,528.6 699.7,530.0 701.1,531.8 702.2,530.0 703.2,532.7 704.3,541.6 705.4,546.0 706.4,538.9 707.5,539.8 708.6,535.3 709.3,530.9 710.0,533.6 711.0,526.4 712.1,530.9 713.5,527.3 714.9,526.4 716.4,524.7 717.4,527.3 718.5,535.3 719.9,538.0 721.3,536.2 722.4,539.2 723.8,535.3 725.2,536.2 727.0,534.4 728.8,533.2 730.6,531.8 732.4,530.4 734.1,529.1 735.9,528.6 737.7,527.3 738.8,525.6 739.8,527.3 741.2,530.9 742.3,537.1 743.2,546.0 743.9,531.8 744.8,536.2 745.5,527.3 746.2,522.0 747.3,530.9 748.4,529.1 749.4,533.6 750.5,530.9 751.6,528.2 752.6,532.7 753.3,538.0 754.4,530.9 755.5,529.1 756.9,529.6 758.7,530.4 760.4,531.4 762.2,531.1 764.0,532.7 765.8,534.4 767.6,532.7 769.3,532.1 771.1,533.6 772.9,533.2 774.7,530.9 776.1,526.4 777.5,523.2 778.9,524.7 780.4,523.8 781.8,527.3 783.2,529.6 784.3,530.9 785.3,524.7 786.4,517.6 787.1,511.3 787.8,510.1 788.5,519.3 789.6,529.1 790.3,537.1 791.0,533.6 791.7,526.4 792.4,517.6 793.2,508.7 793.9,515.8 794.6,522.9 795.6,526.4 797.1,527.3 798.5,526.1 799.9,525.6 801.3,527.3 802.8,528.2 804.5,529.6 806.3,529.1 808.1,530.0 809.9,529.6 810.6,529.1" fill="none" stroke="#000" stroke-width="1" shape-rendering="crispEdges"/>
<path d="M87 383h1v1h-1zM98 383h1v1h-1zM99 384h1v1h-1zM101 400h1v1h-1zM85 438h1v1h-1zM78 441h1v1h-1zM81 445h1v1h-1zM89 456h1v1h-1zM90 469h1v1h-1zM91 473h1v1h-1zM82 473h1v1h-1zM79 484h1v1h-1zM84 488h1v1h-1zM86 489h1v1h-1zM92 488h1v1h-1zM94 488h1v1h-1zM95 489h1v1h-1zM97 488h1v1h-1zM102 471h1v1h-1zM102 476h1v1h-1zM104 476h1v1h-1zM105 485h1v1h-1zM106 487h1v1h-1zM108 489h1v1h-1zM109 489h1v1h-1zM110 487h1v1h-1zM112 487h1v1h-1zM113 488h1v1h-1zM115 489h1v1h-1zM116 489h1v1h-1zM118 488h1v1h-1zM119 489h1v1h-1zM120 487h1v1h-1zM121 489h1v1h-1zM125 382h1v1h-1zM126 386h1v1h-1zM127 390h1v1h-1zM128 395h1v1h-1zM133 399h1v1h-1zM132 412h1v1h-1zM129 419h1v1h-1zM136 417h1v1h-1zM135 419h1v1h-1zM134 424h1v1h-1zM131 433h1v1h-1zM130 453h1v1h-1zM138 382h1v1h-1zM138 390h1v1h-1zM139 458h1v1h-1zM140 470h1v1h-1zM141 476h1v1h-1zM143 476h1v1h-1zM137 485h1v1h-1zM142 488h1v1h-1zM144 382h1v1h-1zM147 382h1v1h-1zM146 396h1v1h-1zM145 401h1v1h-1zM154 383h1v1h-1zM160 383h1v1h-1zM161 385h1v1h-1zM157 388h1v1h-1zM155 390h1v1h-1zM156 392h1v1h-1zM162 391h1v1h-1zM163 391h1v1h-1zM149 486h1v1h-1zM151 486h1v1h-1zM148 488h1v1h-1zM150 489h1v1h-1zM152 491h1v1h-1zM158 491h1v1h-1zM159 491h1v1h-1zM164 486h1v1h-1zM166 488h1v1h-1zM167 489h1v1h-1zM168 485h1v1h-1zM169 487h1v1h-1zM171 488h1v1h-1zM172 490h1v1h-1zM174 488h1v1h-1zM175 486h1v1h-1zM176 487h1v1h-1zM177 482h1v1h-1zM179 481h1v1h-1zM180 482h1v1h-1zM182 480h1v1h-1zM183 482h1v1h-1zM184 481h1v1h-1zM185 480h1v1h-1zM186 484h1v1h-1zM187 486h1v1h-1zM187 484h1v1h-1zM188 460h1v1h-1zM189 435h1v1h-1zM190 441h1v1h-1zM194 483h1v1h-1zM193 488h1v1h-1zM198 429h1v1h-1zM196 439h1v1h-1zM195 452h1v1h-1zM197 452h1v1h-1zM199 474h1v1h-1zM199 489h1v1h-1zM202 490h1v1h-1zM200 383h1v1h-1zM202 383h1v1h-1zM204 389h1v1h-1zM206 393h1v1h-1zM205 396h1v1h-1zM210 457h1v1h-1zM209 459h1v1h-1zM208 472h1v1h-1zM207 482h1v1h-1zM211 470h1v1h-1zM212 472h1v1h-1zM213 474h1v1h-1zM214 470h1v1h-1zM215 469h1v1h-1zM216 471h1v1h-1zM217 476h1v1h-1zM218 476h1v1h-1zM220 477h1v1h-1zM221 480h1v1h-1zM222 482h1v1h-1zM223 483h1v1h-1zM224 480h1v1h-1zM226 478h1v1h-1zM227 480h1v1h-1zM228 482h1v1h-1zM229 481h1v1h-1zM230 482h1v1h-1zM232 481h1v1h-1zM233 484h1v1h-1zM234 480h1v1h-1zM240 392h1v1h-1zM242 391h1v1h-1zM244 389h1v1h-1zM243 397h1v1h-1zM239 408h1v1h-1zM237 412h1v1h-1zM238 415h1v1h-1zM242 433h1v1h-1zM250 454h1v1h-1zM249 458h1v1h-1zM248 459h1v1h-1zM251 461h1v1h-1zM252 476h1v1h-1zM253 480h1v1h-1zM254 483h1v1h-1zM247 480h1v1h-1zM245 484h1v1h-1zM255 488h1v1h-1zM257 491h1v1h-1zM260 491h1v1h-1zM256 389h1v1h-1zM258 383h1v1h-1zM260 382h1v1h-1zM259 407h1v1h-1zM266 389h1v1h-1zM268 385h1v1h-1zM269 384h1v1h-1zM270 382h1v1h-1zM272 383h1v1h-1zM274 385h1v1h-1zM275 388h1v1h-1zM276 388h1v1h-1zM278 389h1v1h-1zM277 384h1v1h-1zM280 384h1v1h-1zM281 383h1v1h-1zM264 478h1v1h-1zM262 483h1v1h-1zM261 484h1v1h-1zM260 485h1v1h-1zM263 484h1v1h-1zM284 485h1v1h-1zM285 484h1v1h-1zM286 482h1v1h-1zM287 481h1v1h-1zM289 480h1v1h-1zM290 480h1v1h-1zM291 480h1v1h-1zM292 479h1v1h-1zM293 481h1v1h-1zM294 482h1v1h-1zM296 484h1v1h-1zM297 383h1v1h-1zM300 382h1v1h-1zM298 394h1v1h-1zM299 397h1v1h-1zM301 485h1v1h-1zM302 483h1v1h-1zM303 484h1v1h-1zM305 480h1v1h-1zM306 479h1v1h-1zM307 479h1v1h-1zM308 480h1v1h-1zM310 480h1v1h-1zM311 480h1v1h-1zM312 483h1v1h-1zM313 484h1v1h-1zM314 486h1v1h-1zM316 487h1v1h-1zM317 488h1v1h-1zM318 487h1v1h-1zM319 489h1v1h-1zM321 490h1v1h-1zM322 491h1v1h-1zM323 489h1v1h-1zM324 489h1v1h-1zM325 488h1v1h-1zM326 481h1v1h-1zM327 470h1v1h-1zM328 470h1v1h-1zM330 474h1v1h-1zM331 474h1v1h-1zM332 464h1v1h-1zM333 477h1v1h-1zM335 475h1v1h-1zM336 465h1v1h-1zM337 469h1v1h-1zM338 486h1v1h-1zM339 490h1v1h-1zM341 491h1v1h-1zM342 483h1v1h-1zM343 490h1v1h-1zM344 490h1v1h-1zM346 475h1v1h-1zM347 438h1v1h-1zM348 443h1v1h-1zM349 455h1v1h-1zM350 473h1v1h-1zM351 448h1v1h-1zM352 438h1v1h-1zM353 437h1v1h-1zM354 436h1v1h-1zM356 436h1v1h-1zM357 437h1v1h-1zM358 441h1v1h-1zM359 439h1v1h-1zM360 441h1v1h-1zM361 436h1v1h-1zM362 434h1v1h-1zM363 440h1v1h-1zM364 441h1v1h-1zM365 442h1v1h-1zM366 436h1v1h-1zM367 442h1v1h-1zM368 440h1v1h-1zM370 439h1v1h-1zM371 438h1v1h-1zM372 438h1v1h-1zM374 439h1v1h-1zM375 439h1v1h-1zM376 438h1v1h-1zM378 437h1v1h-1zM379 438h1v1h-1zM381 437h1v1h-1zM382 436h1v1h-1zM383 436h1v1h-1zM385 437h1v1h-1zM386 439h1v1h-1zM387 440h1v1h-1zM388 445h1v1h-1zM392 432h1v1h-1zM394 442h1v1h-1zM393 449h1v1h-1zM390 450h1v1h-1zM401 453h1v1h-1zM400 462h1v1h-1zM396 463h1v1h-1zM398 480h1v1h-1zM397 481h1v1h-1zM391 488h1v1h-1zM402 438h1v1h-1zM489 440h1v1h-1zM490 443h1v1h-1zM492 441h1v1h-1zM493 440h1v1h-1zM494 438h1v1h-1zM495 439h1v1h-1zM497 440h1v1h-1zM498 439h1v1h-1zM500 436h1v1h-1zM502 436h1v1h-1zM503 437h1v1h-1zM504 438h1v1h-1zM506 437h1v1h-1zM507 436h1v1h-1zM509 437h1v1h-1zM510 437h1v1h-1zM511 436h1v1h-1zM513 437h1v1h-1zM514 438h1v1h-1zM516 438h1v1h-1zM517 439h1v1h-1zM518 440h1v1h-1zM519 437h1v1h-1zM520 440h1v1h-1zM521 450h1v1h-1zM522 463h1v1h-1zM523 474h1v1h-1zM524 464h1v1h-1zM525 456h1v1h-1zM526 458h1v1h-1zM527 462h1v1h-1zM528 466h1v1h-1zM529 446h1v1h-1zM530 426h1v1h-1zM531 428h1v1h-1zM532 436h1v1h-1zM533 442h1v1h-1zM534 433h1v1h-1zM535 432h1v1h-1zM536 434h1v1h-1zM537 437h1v1h-1zM539 431h1v1h-1zM540 433h1v1h-1zM541 438h1v1h-1zM542 440h1v1h-1zM543 443h1v1h-1zM544 448h1v1h-1zM545 444h1v1h-1zM546 441h1v1h-1zM547 434h1v1h-1zM548 432h1v1h-1zM549 432h1v1h-1zM550 436h1v1h-1zM551 441h1v1h-1zM552 446h1v1h-1zM553 442h1v1h-1zM555 434h1v1h-1zM556 436h1v1h-1zM557 439h1v1h-1zM558 440h1v1h-1zM559 442h1v1h-1zM560 438h1v1h-1zM562 438h1v1h-1zM563 438h1v1h-1zM564 439h1v1h-1zM566 441h1v1h-1zM567 442h1v1h-1zM568 443h1v1h-1zM569 442h1v1h-1zM570 437h1v1h-1zM572 437h1v1h-1zM573 437h1v1h-1zM574 440h1v1h-1zM575 442h1v1h-1zM577 442h1v1h-1zM578 441h1v1h-1zM579 438h1v1h-1zM580 438h1v1h-1zM581 439h1v1h-1zM582 440h1v1h-1zM584 441h1v1h-1zM585 440h1v1h-1zM586 439h1v1h-1zM587 438h1v1h-1zM589 438h1v1h-1zM590 438h1v1h-1zM591 438h1v1h-1zM593 438h1v1h-1zM594 439h1v1h-1zM596 439h1v1h-1zM597 439h1v1h-1zM599 439h1v1h-1zM600 439h1v1h-1zM601 439h1v1h-1zM603 439h1v1h-1zM604 439h1v1h-1zM605 442h1v1h-1zM606 450h1v1h-1zM607 462h1v1h-1zM608 464h1v1h-1zM610 469h1v1h-1zM611 449h1v1h-1zM612 445h1v1h-1zM613 444h1v1h-1zM614 448h1v1h-1zM615 454h1v1h-1zM616 446h1v1h-1zM617 443h1v1h-1zM618 439h1v1h-1zM619 443h1v1h-1zM620 446h1v1h-1zM621 443h1v1h-1zM622 442h1v1h-1zM623 440h1v1h-1zM624 439h1v1h-1zM625 439h1v1h-1zM626 441h1v1h-1zM627 439h1v1h-1zM628 431h1v1h-1zM629 415h1v1h-1zM630 424h1v1h-1zM631 423h1v1h-1zM632 427h1v1h-1zM633 412h1v1h-1zM634 443h1v1h-1zM635 449h1v1h-1zM637 436h1v1h-1zM638 442h1v1h-1zM639 436h1v1h-1zM640 438h1v1h-1zM641 434h1v1h-1zM642 434h1v1h-1zM643 435h1v1h-1zM644 436h1v1h-1zM645 435h1v1h-1zM646 436h1v1h-1zM647 436h1v1h-1zM649 438h1v1h-1zM650 466h1v1h-1zM651 432h1v1h-1zM652 423h1v1h-1zM653 424h1v1h-1zM654 425h1v1h-1zM655 424h1v1h-1zM656 429h1v1h-1zM657 445h1v1h-1zM658 441h1v1h-1zM659 437h1v1h-1zM660 437h1v1h-1zM661 437h1v1h-1zM662 438h1v1h-1zM663 439h1v1h-1zM665 438h1v1h-1zM666 438h1v1h-1zM668 438h1v1h-1zM669 438h1v1h-1zM670 438h1v1h-1zM671 440h1v1h-1zM673 442h1v1h-1zM673 443h1v1h-1zM674 486h1v1h-1zM675 489h1v1h-1zM677 403h1v1h-1zM678 459h1v1h-1zM679 439h1v1h-1zM680 439h1v1h-1zM681 442h1v1h-1zM682 444h1v1h-1zM683 424h1v1h-1zM684 440h1v1h-1zM685 441h1v1h-1zM686 443h1v1h-1zM687 470h1v1h-1zM688 449h1v1h-1zM689 443h1v1h-1zM690 440h1v1h-1zM691 436h1v1h-1zM692 430h1v1h-1zM693 465h1v1h-1zM694 458h1v1h-1zM695 471h1v1h-1zM696 476h1v1h-1zM697 432h1v1h-1zM698 434h1v1h-1zM699 436h1v1h-1zM700 437h1v1h-1zM701 446h1v1h-1zM702 441h1v1h-1zM703 449h1v1h-1zM704 433h1v1h-1zM705 400h1v1h-1zM706 487h1v1h-1zM707 384h1v1h-1zM709 383h1v1h-1zM710 383h1v1h-1zM712 386h1v1h-1zM713 385h1v1h-1zM716 385h1v1h-1zM717 391h1v1h-1zM719 428h1v1h-1zM720 433h1v1h-1zM721 438h1v1h-1zM722 438h1v1h-1zM724 438h1v1h-1zM725 440h1v1h-1zM727 439h1v1h-1zM728 437h1v1h-1zM729 437h1v1h-1zM731 437h1v1h-1zM732 438h1v1h-1zM734 439h1v1h-1zM735 440h1v1h-1zM736 439h1v1h-1zM738 436h1v1h-1zM739 446h1v1h-1zM744 447h1v1h-1zM746 440h1v1h-1zM745 396h1v1h-1zM741 383h1v1h-1zM743 385h1v1h-1zM748 382h1v1h-1zM752 384h1v1h-1zM753 471h1v1h-1zM748 476h1v1h-1zM750 479h1v1h-1zM749 483h1v1h-1zM754 484h1v1h-1zM747 489h1v1h-1zM749 490h1v1h-1zM751 490h1v1h-1zM755 491h1v1h-1zM757 489h1v1h-1zM759 490h1v1h-1zM761 491h1v1h-1zM763 491h1v1h-1zM764 491h1v1h-1zM770 382h1v1h-1zM772 382h1v1h-1zM776 384h1v1h-1zM778 384h1v1h-1zM779 383h1v1h-1zM777 388h1v1h-1zM783 385h1v1h-1zM785 385h1v1h-1zM784 388h1v1h-1zM787 387h1v1h-1zM786 390h1v1h-1zM781 491h1v1h-1zM788 489h1v1h-1zM789 482h1v1h-1zM793 479h1v1h-1zM794 488h1v1h-1zM790 426h1v1h-1zM791 436h1v1h-1zM792 437h1v1h-1zM797 383h1v1h-1zM798 387h1v1h-1zM800 387h1v1h-1zM801 385h1v1h-1zM803 383h1v1h-1zM804 384h1v1h-1zM806 383h1v1h-1zM807 383h1v1h-1zM808 382h1v1h-1zM807 490h1v1h-1zM808 489h1v1h-1zM403 436h1v1h-1zM404 435h1v1h-1zM406 436h1v1h-1zM407 436h1v1h-1zM408 436h1v1h-1zM410 437h1v1h-1zM411 437h1v1h-1zM413 437h1v1h-1zM414 437h1v1h-1zM414 436h1v1h-1zM415 436h1v1h-1zM416 436h1v1h-1zM417 436h1v1h-1zM418 436h1v1h-1zM419 436h1v1h-1zM420 437h1v1h-1zM421 437h1v1h-1zM422 438h1v1h-1zM422 438h1v1h-1zM423 438h1v1h-1zM424 437h1v1h-1zM425 437h1v1h-1zM426 438h1v1h-1zM428 439h1v1h-1zM429 439h1v1h-1zM430 440h1v1h-1zM430 440h1v1h-1zM431 441h1v1h-1zM433 440h1v1h-1zM434 439h1v1h-1zM435 439h1v1h-1zM436 439h1v1h-1zM437 439h1v1h-1zM438 438h1v1h-1zM438 439h1v1h-1zM439 439h1v1h-1zM440 438h1v1h-1zM441 438h1v1h-1zM442 438h1v1h-1zM443 438h1v1h-1zM444 439h1v1h-1zM445 439h1v1h-1zM446 439h1v1h-1zM446 440h1v1h-1zM447 439h1v1h-1zM448 439h1v1h-1zM449 439h1v1h-1zM450 440h1v1h-1zM451 439h1v1h-1zM452 439h1v1h-1zM453 439h1v1h-1zM454 439h1v1h-1zM454 438h1v1h-1zM455 438h1v1h-1zM456 438h1v1h-1zM457 438h1v1h-1zM458 438h1v1h-1zM459 438h1v1h-1zM460 438h1v1h-1zM461 438h1v1h-1zM462 438h1v1h-1zM462 438h1v1h-1zM463 438h1v1h-1zM464 438h1v1h-1zM465 437h1v1h-1zM466 437h1v1h-1zM467 437h1v1h-1zM468 437h1v1h-1zM469 437h1v1h-1zM470 437h1v1h-1zM471 436h1v1h-1zM472 437h1v1h-1zM473 437h1v1h-1zM474 437h1v1h-1zM475 437h1v1h-1zM476 437h1v1h-1zM477 437h1v1h-1zM478 438h1v1h-1zM479 438h1v1h-1zM479 438h1v1h-1zM480 438h1v1h-1zM481 438h1v1h-1zM482 438h1v1h-1zM483 437h1v1h-1zM484 438h1v1h-1zM485 438h1v1h-1zM486 437h1v1h-1zM487 437h1v1h-1zM487 437h1v1h-1z" fill="#000" shape-rendering="crispEdges"/>
<rect x="79.0" y="568" width="2.0" height="27.5" fill="#ff0000" shape-rendering="crispEdges"/>
<rect x="83.0" y="568" width="1.0" height="27.5" fill="#ff0000" shape-rendering="crispEdges"/>
<rect x="85.0" y="568" width="1.0" height="27.5" fill="#ff0000" shape-rendering="crispEdges"/>
<rect x="90.0" y="568" width="2.0" height="27.5" fill="#ff0000" shape-rendering="crispEdges"/>
<rect x="93.0" y="568" width="9.0" height="27.5" fill="#ff0000" shape-rendering="crispEdges"/>
<rect x="104.0" y="568" width="24.0" height="27.5" fill="#ff0000" shape-rendering="crispEdges"/>
<rect x="129.0" y="568" width="1.0" height="27.5" fill="#ff0000" shape-rendering="crispEdges"/>
<rect x="131.0" y="568" width="8.0" height="27.5" fill="#8000ff" shape-rendering="crispEdges"/>
<rect x="140.0" y="568" width="38.0" height="27.5" fill="#8000ff" shape-rendering="crispEdges"/>
<rect x="188.0" y="568" width="3.0" height="27.5" fill="#ff0000" shape-rendering="crispEdges"/>
<rect x="195.0" y="568" width="4.0" height="27.5" fill="#ff0000" shape-rendering="crispEdges"/>
<rect x="202.0" y="568" width="12.0" height="27.5" fill="#ff0000" shape-rendering="crispEdges"/>
<rect x="220.0" y="568" width="6.0" height="27.5" fill="#ff0000" shape-rendering="crispEdges"/>
<rect x="233.0" y="568" width="1.0" height="27.5" fill="#ff0000" shape-rendering="crispEdges"/>
<rect x="236.0" y="568" width="1.0" height="27.5" fill="#ff0000" shape-rendering="crispEdges"/>
<rect x="239.0" y="568" width="2.0" height="27.5" fill="#ff0000" shape-rendering="crispEdges"/>
<rect x="242.0" y="568" width="1.0" height="27.5" fill="#8000ff" shape-rendering="crispEdges"/>
<rect x="247.0" y="568" width="41.0" height="27.5" fill="#8000ff" shape-rendering="crispEdges"/>
<rect x="296.0" y="568" width="5.0" height="27.5" fill="#8000ff" shape-rendering="crispEdges"/>
<rect x="321.0" y="568" width="1.0" height="27.5" fill="#ff0000" shape-rendering="crispEdges"/>
<rect x="323.0" y="568" width="4.0" height="27.5" fill="#ff0000" shape-rendering="crispEdges"/>
<rect x="333.0" y="568" width="5.0" height="27.5" fill="#8000ff" shape-rendering="crispEdges"/>
<rect x="339.0" y="568" width="3.0" height="27.5" fill="#ff0000" shape-rendering="crispEdges"/>
<rect x="343.0" y="568" width="3.0" height="27.5" fill="#ff0000" shape-rendering="crispEdges"/>
<rect x="347.0" y="568" width="3.0" height="27.5" fill="#8000ff" shape-rendering="crispEdges"/>
<rect x="351.0" y="568" width="15.0" height="27.5" fill="#8000ff" shape-rendering="crispEdges"/>
<rect x="367.0" y="568" width="6.0" height="27.5" fill="#8000ff" shape-rendering="crispEdges"/>
<rect x="374.0" y="568" width="1.0" height="27.5" fill="#8000ff" shape-rendering="crispEdges"/>
<rect x="389.0" y="568" width="8.0" height="27.5" fill="#ff0000" shape-rendering="crispEdges"/>
<rect x="403.0" y="568" width="35.0" height="27.5" fill="#ff0000" shape-rendering="crispEdges"/>
<rect x="454.0" y="568" width="49.0" height="27.5" fill="#8000ff" shape-rendering="crispEdges"/>
<rect x="517.0" y="568" width="12.0" height="27.5" fill="#ff0000" shape-rendering="crispEdges"/>
<rect x="531.0" y="568" width="32.0" height="27.5" fill="#ff0000" shape-rendering="crispEdges"/>
<rect x="573.0" y="568" width="46.0" height="27.5" fill="#8000ff" shape-rendering="crispEdges"/>
<rect x="630.0" y="568" width="1.0" height="27.5" fill="#ff0000" shape-rendering="crispEdges"/>
<rect x="632.0" y="568" width="1.0" height="27.5" fill="#ff0000" shape-rendering="crispEdges"/>
<rect x="634.0" y="568" width="17.0" height="27.5" fill="#ff0000" shape-rendering="crispEdges"/>
<rect x="657.0" y="568" width="17.0" height="27.5" fill="#ff0000" shape-rendering="crispEdges"/>
<rect x="676.0" y="568" width="2.0" height="27.5" fill="#ff0000" shape-rendering="crispEdges"/>
<rect x="679.0" y="568" width="2.0" height="27.5" fill="#8000ff" shape-rendering="crispEdges"/>
<rect x="683.0" y="568" width="2.0" height="27.5" fill="#8000ff" shape-rendering="crispEdges"/>
<rect x="686.0" y="568" width="1.0" height="27.5" fill="#8000ff" shape-rendering="crispEdges"/>
<rect x="688.0" y="568" width="1.0" height="27.5" fill="#8000ff" shape-rendering="crispEdges"/>
<rect x="691.0" y="568" width="14.0" height="27.5" fill="#8000ff" shape-rendering="crispEdges"/>
<rect x="707.0" y="568" width="12.0" height="27.5" fill="#ff0000" shape-rendering="crispEdges"/>
<rect x="720.0" y="568" width="20.0" height="27.5" fill="#8000ff" shape-rendering="crispEdges"/>
<rect x="743.0" y="568" width="1.0" height="27.5" fill="#ff0000" shape-rendering="crispEdges"/>
<rect x="746.0" y="568" width="1.0" height="27.5" fill="#8000ff" shape-rendering="crispEdges"/>
<rect x="753.0" y="568" width="1.0" height="27.5" fill="#ff0000" shape-rendering="crispEdges"/>
<rect x="755.0" y="568" width="32.0" height="27.5" fill="#8000ff" shape-rendering="crispEdges"/>
<rect x="788.0" y="568" width="1.0" height="27.5" fill="#ff0000" shape-rendering="crispEdges"/>
<rect x="791.0" y="568" width="3.0" height="27.5" fill="#ff0000" shape-rendering="crispEdges"/>
<rect x="77" y="605" width="733.5" height="27.5" fill="#00ffff"/>
<rect x="94.0" y="605" width="43.0" height="27.5" fill="#8000ff" shape-rendering="crispEdges"/>
<rect x="214.0" y="605" width="43.0" height="27.5" fill="#8000ff" shape-rendering="crispEdges"/>
<rect x="333.0" y="605" width="44.0" height="27.5" fill="#8000ff" shape-rendering="crispEdges"/>
<rect x="453.0" y="605" width="44.0" height="27.5" fill="#8000ff" shape-rendering="crispEdges"/>
<rect x="573.0" y="605" width="43.0" height="27.5" fill="#8000ff" shape-rendering="crispEdges"/>
<rect x="621.0" y="605" width="1.0" height="27.5" fill="#8000ff" shape-rendering="crispEdges"/>
<rect x="693.0" y="605" width="43.0" height="27.5" fill="#8000ff" shape-rendering="crispEdges"/>
<g stroke="#000" stroke-width="1" fill="none" shape-rendering="crispEdges">
<rect x="76.5" y="19.5" width="734.0" height="111.0"/>
<rect x="76.5" y="140.5" width="734.0" height="111.0"/>
<rect x="76.5" y="260.5" width="734.0" height="111.0"/>
<rect x="76.5" y="381.5" width="734.0" height="111.0"/>
<rect x="76.5" y="502.5" width="734.0" height="55.0"/>
<rect x="76.5" y="567.5" width="734.0" height="28.0"/>
<rect x="76.5" y="604.5" width="734.0" height="28.0"/>
</g>
<path d="M77 41h15v1h-15zM795 41h15v1h-15zM77 63h15v1h-15zM795 63h15v1h-15zM77 85h15v1h-15zM795 85h15v1h-15zM77 108h15v1h-15zM795 108h15v1h-15zM77 250h8v1h-8zM802 250h8v1h-8zM77 246h8v1h-8zM802 246h8v1h-8zM77 242h8v1h-8zM802 242h8v1h-8zM77 240h8v1h-8zM802 240h8v1h-8zM77 237h8v1h-8zM802 237h8v1h-8zM77 235h8v1h-8zM802 235h8v1h-8zM77 233h15v1h-15zM795 233h15v1h-15zM77 220h8v1h-8zM802 220h8v1h-8zM77 213h8v1h-8zM802 213h8v1h-8zM77 208h8v1h-8zM802 208h8v1h-8zM77 204h8v1h-8zM802 204h8v1h-8zM77 200h8v1h-8zM802 200h8v1h-8zM77 198h8v1h-8zM802 198h8v1h-8zM77 195h8v1h-8zM802 195h8v1h-8zM77 193h8v1h-8zM802 193h8v1h-8zM77 191h15v1h-15zM795 191h15v1h-15zM77 178h8v1h-8zM802 178h8v1h-8zM77 171h8v1h-8zM802 171h8v1h-8zM77 166h8v1h-8zM802 166h8v1h-8zM77 162h8v1h-8zM802 162h8v1h-8zM77 158h8v1h-8zM802 158h8v1h-8zM77 156h8v1h-8zM802 156h8v1h-8zM77 153h8v1h-8zM802 153h8v1h-8zM77 151h8v1h-8zM802 151h8v1h-8zM77 149h15v1h-15zM795 149h15v1h-15zM77 366h8v1h-8zM802 366h8v1h-8zM77 359h8v1h-8zM802 359h8v1h-8zM77 353h8v1h-8zM802 353h8v1h-8zM77 346h8v1h-8zM802 346h8v1h-8zM77 339h15v1h-15zM795 339h15v1h-15zM77 333h8v1h-8zM802 333h8v1h-8zM77 326h8v1h-8zM802 326h8v1h-8zM77 320h8v1h-8zM802 320h8v1h-8zM77 313h8v1h-8zM802 313h8v1h-8zM77 306h15v1h-15zM795 306h15v1h-15zM77 300h8v1h-8zM802 300h8v1h-8zM77 293h8v1h-8zM802 293h8v1h-8zM77 287h8v1h-8zM802 287h8v1h-8zM77 280h8v1h-8zM802 280h8v1h-8zM77 273h15v1h-15zM795 273h15v1h-15zM77 267h8v1h-8zM802 267h8v1h-8zM77 483h8v1h-8zM802 483h8v1h-8zM77 474h8v1h-8zM802 474h8v1h-8zM77 465h15v1h-15zM795 465h15v1h-15zM77 455h8v1h-8zM802 455h8v1h-8zM77 446h8v1h-8zM802 446h8v1h-8zM77 437h15v1h-15zM795 437h15v1h-15zM77 428h8v1h-8zM802 428h8v1h-8zM77 418h8v1h-8zM802 418h8v1h-8zM77 409h15v1h-15zM795 409h15v1h-15zM77 400h8v1h-8zM802 400h8v1h-8zM77 391h8v1h-8zM802 391h8v1h-8zM77 548h8v1h-8zM802 548h8v1h-8zM77 539h8v1h-8zM802 539h8v1h-8zM77 530h15v1h-15zM795 530h15v1h-15zM77 520h8v1h-8zM802 520h8v1h-8zM77 511h8v1h-8zM802 511h8v1h-8zM77 20h1v2h-1zM77 128h1v2h-1zM138 20h1v2h-1zM138 128h1v2h-1zM199 20h1v2h-1zM199 128h1v2h-1zM260 20h1v2h-1zM260 128h1v2h-1zM321 20h1v2h-1zM321 128h1v2h-1zM382 20h1v2h-1zM382 128h1v2h-1zM443 20h1v2h-1zM443 128h1v2h-1zM504 20h1v2h-1zM504 128h1v2h-1zM565 20h1v2h-1zM565 128h1v2h-1zM626 20h1v2h-1zM626 128h1v2h-1zM687 20h1v2h-1zM687 128h1v2h-1zM748 20h1v2h-1zM748 128h1v2h-1zM809 20h1v2h-1zM809 128h1v2h-1zM77 141h1v2h-1zM77 249h1v2h-1zM138 141h1v2h-1zM138 249h1v2h-1zM199 141h1v2h-1zM199 249h1v2h-1zM260 141h1v2h-1zM260 249h1v2h-1zM321 141h1v2h-1zM321 249h1v2h-1zM382 141h1v2h-1zM382 249h1v2h-1zM443 141h1v2h-1zM443 249h1v2h-1zM504 141h1v2h-1zM504 249h1v2h-1zM565 141h1v2h-1zM565 249h1v2h-1zM626 141h1v2h-1zM626 249h1v2h-1zM687 141h1v2h-1zM687 249h1v2h-1zM748 141h1v2h-1zM748 249h1v2h-1zM809 141h1v2h-1zM809 249h1v2h-1zM77 261h1v2h-1zM77 369h1v2h-1zM138 261h1v2h-1zM138 369h1v2h-1zM199 261h1v2h-1zM199 369h1v2h-1zM260 261h1v2h-1zM260 369h1v2h-1zM321 261h1v2h-1zM321 369h1v2h-1zM382 261h1v2h-1zM382 369h1v2h-1zM443 261h1v2h-1zM443 369h1v2h-1zM504 261h1v2h-1zM504 369h1v2h-1zM565 261h1v2h-1zM565 369h1v2h-1zM626 261h1v2h-1zM626 369h1v2h-1zM687 261h1v2h-1zM687 369h1v2h-1zM748 261h1v2h-1zM748 369h1v2h-1zM809 261h1v2h-1zM809 369h1v2h-1zM77 382h1v2h-1zM77 490h1v2h-1zM138 382h1v2h-1zM138 490h1v2h-1zM199 382h1v2h-1zM199 490h1v2h-1zM260 382h1v2h-1zM260 490h1v2h-1zM321 382h1v2h-1zM321 490h1v2h-1zM382 382h1v2h-1zM382 490h1v2h-1zM443 382h1v2h-1zM443 490h1v2h-1zM504 382h1v2h-1zM504 490h1v2h-1zM565 382h1v2h-1zM565 490h1v2h-1zM626 382h1v2h-1zM626 490h1v2h-1zM687 382h1v2h-1zM687 490h1v2h-1zM748 382h1v2h-1zM748 490h1v2h-1zM809 382h1v2h-1zM809 490h1v2h-1zM77 503h1v2h-1zM77 555h1v2h-1zM138 503h1v2h-1zM138 555h1v2h-1zM199 503h1v2h-1zM199 555h1v2h-1zM260 503h1v2h-1zM260 555h1v2h-1zM321 503h1v2h-1zM321 555h1v2h-1zM382 503h1v2h-1zM382 555h1v2h-1zM443 503h1v2h-1zM443 555h1v2h-1zM504 503h1v2h-1zM504 555h1v2h-1zM565 503h1v2h-1zM565 555h1v2h-1zM626 503h1v2h-1zM626 555h1v2h-1zM687 503h1v2h-1zM687 555h1v2h-1zM748 503h1v2h-1zM748 555h1v2h-1zM809 503h1v2h-1zM809 555h1v2h-1zM77 568h1v1h-1zM77 594h1v1h-1zM138 568h1v1h-1zM138 594h1v1h-1zM199 568h1v1h-1zM199 594h1v1h-1zM260 568h1v1h-1zM260 594h1v1h-1zM321 568h1v1h-1zM321 594h1v1h-1zM382 568h1v1h-1zM382 594h1v1h-1zM443 568h1v1h-1zM443 594h1v1h-1zM504 568h1v1h-1zM504 594h1v1h-1zM565 568h1v1h-1zM565 594h1v1h-1zM626 568h1v1h-1zM626 594h1v1h-1zM687 568h1v1h-1zM687 594h1v1h-1zM748 568h1v1h-1zM748 594h1v1h-1zM809 568h1v1h-1zM809 594h1v1h-1zM77 605h1v1h-1zM77 631h1v1h-1zM138 605h1v1h-1zM138 631h1v1h-1zM199 605h1v1h-1zM199 631h1v1h-1zM260 605h1v1h-1zM260 631h1v1h-1zM321 605h1v1h-1zM321 631h1v1h-1zM382 605h1v1h-1zM382 631h1v1h-1zM443 605h1v1h-1zM443 631h1v1h-1zM504 605h1v1h-1zM504 631h1v1h-1zM565 605h1v1h-1zM565 631h1v1h-1zM626 605h1v1h-1zM626 631h1v1h-1zM687 605h1v1h-1zM687 631h1v1h-1zM748 605h1v1h-1zM748 631h1v1h-1zM809 605h1v1h-1zM809 631h1v1h-1z" fill="#000" shape-rendering="crispEdges"/>
<g stroke="#000" stroke-width="1" shape-rendering="crispEdges">
<rect x="823.5" y="140.5" width="13" height="111" fill="url(#cb)"/>
<rect x="823.5" y="567.5" width="13" height="28" fill="url(#cb)"/>
<rect x="823.5" y="604.5" width="13" height="28" fill="url(#cb)"/>
<line x1="834.5" y1="167.5" x2="836.5" y2="167.5"/>
<line x1="834.5" y1="195.5" x2="836.5" y2="195.5"/>
<line x1="834.5" y1="223.5" x2="836.5" y2="223.5"/>
</g>
<text x="443.5" y="14.0" font-size="13.5" text-anchor="middle" textLength="279.0" lengthAdjust="spacingAndGlyphs">Lunar Prospector MAG/ER Summary Data</text>
<text x="66.5" y="26.0" font-size="10.5" text-anchor="end">10</text>
<text x="67.8" y="20.4" font-size="9">6</text>
<text x="66.5" y="46.0" font-size="10.5" text-anchor="end">10</text>
<text x="67.8" y="40.4" font-size="9">5</text>
<text x="66.5" y="67.6" font-size="10.5" text-anchor="end">10</text>
<text x="67.8" y="62.0" font-size="9">4</text>
<text x="66.5" y="90.0" font-size="10.5" text-anchor="end">10</text>
<text x="67.8" y="84.4" font-size="9">3</text>
<text x="66.5" y="111.6" font-size="10.5" text-anchor="end">10</text>
<text x="67.8" y="106.0" font-size="9">2</text>
<text x="66.5" y="130.0" font-size="10.5" text-anchor="end">10</text>
<text x="67.8" y="124.4" font-size="9">1</text>
<text x="820.5" y="31.0" font-size="11.0" fill="#ff0000">40 eV</text>
<text x="820.5" y="53.0" font-size="11.0" fill="#e6ff00">140 eV</text>
<text x="820.5" y="75.0" font-size="11.0" fill="#00ff3c">340 eV</text>
<text x="820.5" y="97.5" font-size="11.0" fill="#0096ff">800 eV</text>
<text x="820.5" y="120.0" font-size="11.0" fill="#8000ff">2950 eV</text>
<text x="73.0" y="153.6" font-size="10.5" text-anchor="end">10000</text>
<text x="73.0" y="195.6" font-size="10.5" text-anchor="end">1000</text>
<text x="73.0" y="237.6" font-size="10.5" text-anchor="end">100</text>
<text x="840.0" y="146.8" font-size="10.5" textLength="36.0" lengthAdjust="spacingAndGlyphs">1.1×10</text>
<text x="876.0" y="141.0" font-size="9">5</text>
<text x="840.0" y="250.8" font-size="10.5" textLength="36.0" lengthAdjust="spacingAndGlyphs">6.6×10</text>
<text x="876.0" y="245.3" font-size="9">0</text>
<text x="73.0" y="277.9" font-size="10.5" text-anchor="end">15</text>
<text x="73.0" y="310.6" font-size="10.5" text-anchor="end">10</text>
<text x="73.0" y="343.6" font-size="10.5" text-anchor="end">5</text>
<text x="73.0" y="372.0" font-size="10.5" text-anchor="end">0</text>
<text x="73.0" y="388.9" font-size="10.5" text-anchor="end">360</text>
<text x="73.0" y="414.0" font-size="10.5" text-anchor="end">270</text>
<text x="73.0" y="441.8" font-size="10.5" text-anchor="end">180</text>
<text x="73.0" y="469.0" font-size="10.5" text-anchor="end">90</text>
<text x="73.0" y="492.8" font-size="10.5" text-anchor="end">0</text>
<text x="73.0" y="509.7" font-size="10.5" text-anchor="end">90</text>
<text x="73.0" y="534.0" font-size="10.5" text-anchor="end">0</text>
<text x="73.0" y="557.7" font-size="10.5" text-anchor="end">−90</text>
<text x="73.0" y="574.6" font-size="10.5" text-anchor="end">1</text>
<text x="73.0" y="595.6" font-size="10.5" text-anchor="end">0</text>
<text x="73.0" y="611.7" font-size="10.5" text-anchor="end">1</text>
<text x="73.0" y="633.0" font-size="10.5" text-anchor="end">0</text>
<text x="840.0" y="575.0" font-size="10.5">1</text>
<text x="840.0" y="595.7" font-size="10.5">−1</text>
<text x="840.0" y="611.5" font-size="10.5">3</text>
<text x="840.0" y="632.6" font-size="10.5">0</text>
<text transform="translate(40.0,74.5) rotate(90)" font-size="10.5" text-anchor="middle" textLength="59.0" lengthAdjust="spacingAndGlyphs">Count Rate</text>
<text transform="translate(26.7,195.0) rotate(90)" font-size="10.5" text-anchor="middle" textLength="60.0" lengthAdjust="spacingAndGlyphs">Energy (eV)</text>
<text transform="translate(46.5,315.5) rotate(90)" font-size="10.5" text-anchor="middle" textLength="38.6" lengthAdjust="spacingAndGlyphs">|B| (nT)</text>
<text transform="translate(40.0,437.0) rotate(90)" font-size="10.5" text-anchor="middle">Phi</text>
<text transform="translate(38.0,529.5) rotate(90)" font-size="10.5" text-anchor="middle" textLength="27.0" lengthAdjust="spacingAndGlyphs">Theta</text>
<text transform="translate(54.0,581.5) rotate(90)" font-size="10.5" text-anchor="middle">Pol</text>
<text transform="translate(54.0,618.0) rotate(90)" font-size="10.5" text-anchor="middle" textLength="18.0" lengthAdjust="spacingAndGlyphs">Sun</text>
<text transform="translate(815.8,596.3) rotate(-90)" font-size="6.3" text-anchor="middle" textLength="73.0" lengthAdjust="spacingAndGlyphs" font-weight="bold">Thu Dec  3 22:51:02 1998</text>
<text x="6.7" y="647.3" font-size="10.5">GSE Lon</text>
<text x="6.7" y="656.8" font-size="10.5">doy</text>
<text x="6.7" y="666.5" font-size="10.5">hhmm</text>
<text x="6.7" y="676.0" font-size="10.5">1998</text>
<text x="77.5" y="647.3" font-size="10.5" text-anchor="middle">179</text>
<text x="77.5" y="656.8" font-size="10.5" text-anchor="middle">131.500</text>
<text x="77.5" y="666.5" font-size="10.5" text-anchor="middle">1200</text>
<text x="77.5" y="676.0" font-size="10.5" text-anchor="middle">May 11</text>
<text x="199.5" y="647.3" font-size="10.5" text-anchor="middle">180</text>
<text x="199.5" y="656.8" font-size="10.5" text-anchor="middle">131.583</text>
<text x="199.5" y="666.5" font-size="10.5" text-anchor="middle">1400</text>
<text x="321.5" y="647.3" font-size="10.5" text-anchor="middle">181</text>
<text x="321.5" y="656.8" font-size="10.5" text-anchor="middle">131.667</text>
<text x="321.5" y="666.5" font-size="10.5" text-anchor="middle">1600</text>
<text x="443.5" y="647.3" font-size="10.5" text-anchor="middle">182</text>
<text x="443.5" y="656.8" font-size="10.5" text-anchor="middle">131.750</text>
<text x="443.5" y="666.5" font-size="10.5" text-anchor="middle">1800</text>
<text x="565.5" y="647.3" font-size="10.5" text-anchor="middle">183</text>
<text x="565.5" y="656.8" font-size="10.5" text-anchor="middle">131.833</text>
<text x="565.5" y="666.5" font-size="10.5" text-anchor="middle">2000</text>
<text x="687.5" y="647.3" font-size="10.5" text-anchor="middle">184</text>
<text x="687.5" y="656.8" font-size="10.5" text-anchor="middle">131.917</text>
<text x="687.5" y="666.5" font-size="10.5" text-anchor="middle">2200</text>
<text x="809.5" y="647.3" font-size="10.5" text-anchor="middle">184</text>
<text x="809.5" y="656.8" font-size="10.5" text-anchor="middle">132.000</text>
<text x="809.5" y="666.5" font-size="10.5" text-anchor="middle">0000</text>
<text x="809.5" y="676.0" font-size="10.5" text-anchor="middle">May 12</text>
</svg></body></html>
